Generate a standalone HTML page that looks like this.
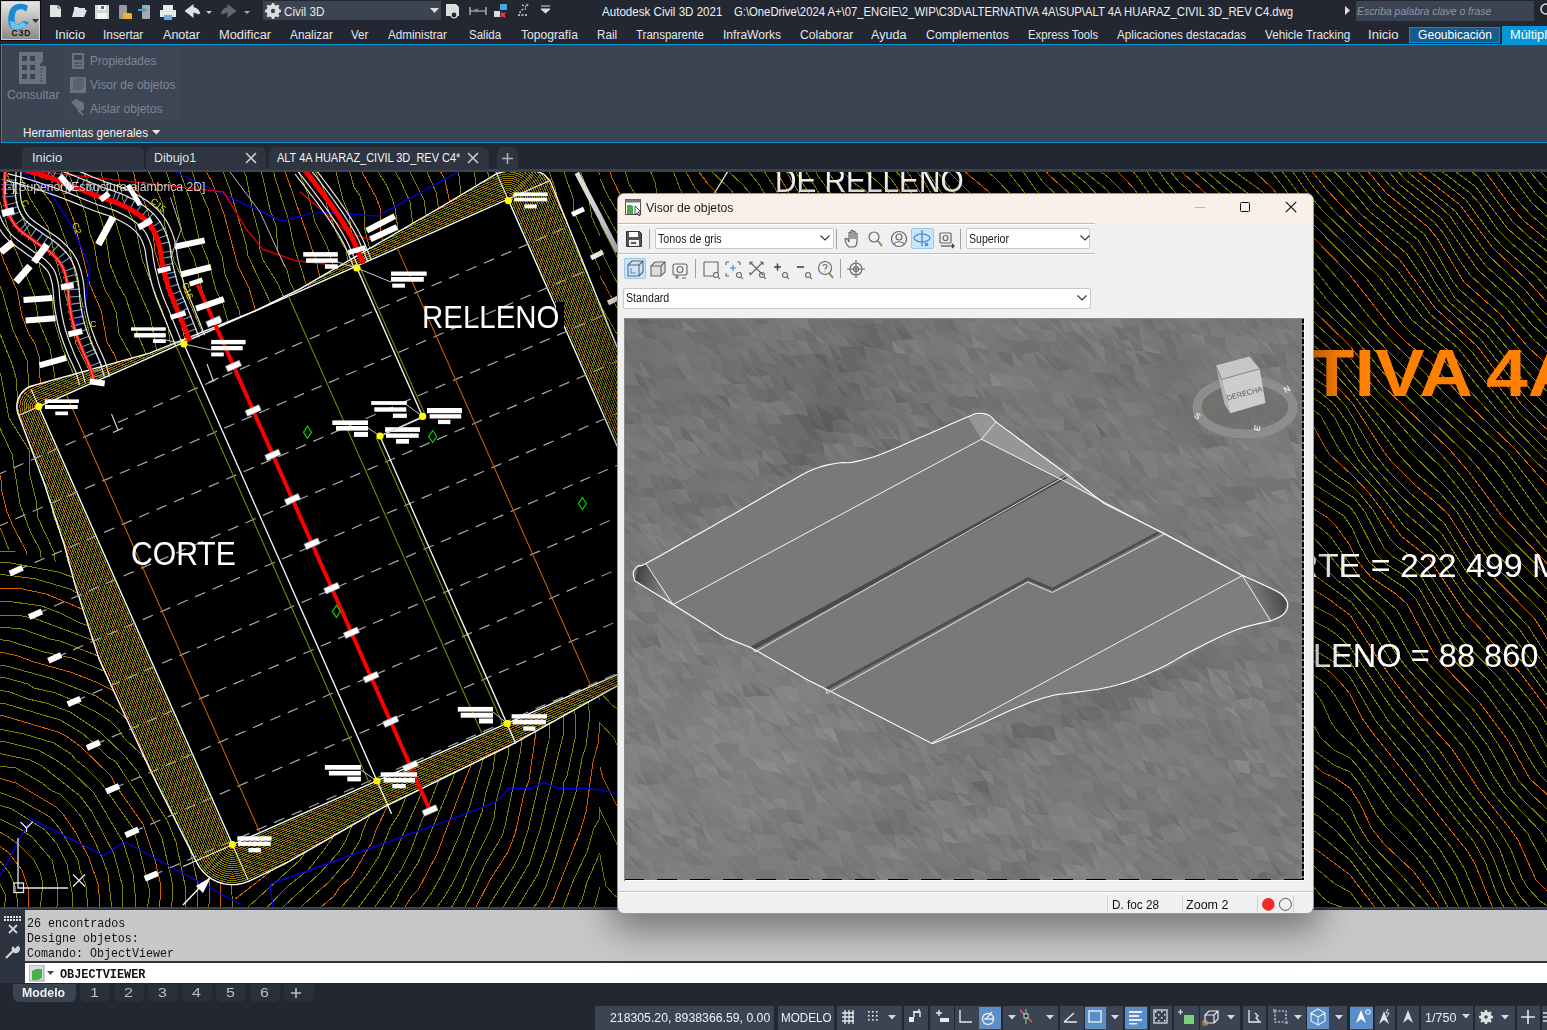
<!DOCTYPE html>
<html><head><meta charset='utf-8'><style>
*{margin:0;padding:0;box-sizing:border-box}
html,body{width:1547px;height:1030px;overflow:hidden;background:#222732;font-family:"Liberation Sans",sans-serif}
.a{position:absolute}
.t{position:absolute;white-space:pre;transform-origin:0 0}
svg{position:absolute;overflow:hidden}

</style></head><body>
<div class='a' style='left:0;top:0;width:1547px;height:44px;background:#222732'></div>
<div class='a' style='left:0;top:0;width:41px;height:41px;background:#0c0c0c'></div>
<div class='a' style='left:1px;top:1px;width:39px;height:39px;background:linear-gradient(#e6e6e6,#8a8a8a);border:1px solid #cfcfcf'></div>
<svg style='left:1px;top:1px' width='39' height='39' viewBox='0 0 39 39'>
<path d='M27 5 C22 1 12 2 9 9 C6 16 7 26 11 28 C15 31 23 29 28 21 L22 20 C19 24 15 25 14 21 C13 16 14 10 17 9 C20 7 24 9 25 11 Z' fill='#1a8ad4'/>
<path d='M9 20 C9 26 11 28 14 28.5 C18 29 23 27 26 24 L22 21 C19 24 15 25 14 21 Z' fill='#6fc3ea'/>
<path d='M31 18 l7 0 l-3.5 4z' fill='#2f3440'/>
</svg>
<div class='t' style='left:11.5px;top:29.4px;font-family:"Liberation Sans";font-size:8.5px;line-height:8.5px;color:#111;font-weight:bold;font-style:normal;transform:scaleX(1.000);letter-spacing:1px'>C3D</div>

<svg style='left:46px;top:2px' width='220' height='20' viewBox='0 0 220 20'>
 <path d='M4 3h8l3 3v9H4z' fill='#e3e3e3'/><path d='M12 3v3h3' fill='#fff' stroke='#222732' stroke-width='.8'/>
 <path d='M28 5h4l1 1h6v2h-9l-2 7h-0z' fill='#e3e3e3'/><path d='M28 8h13l-3 7H26z' fill='#e3e3e3'/>
 <rect x='49' y='3' width='14' height='14' fill='#d5d5d5'/><rect x='52' y='3' width='8' height='5' fill='#f5f5f5'/><rect x='51' y='11' width='10' height='6' fill='#f5f5f5'/><rect x='55' y='4' width='3' height='3' fill='#666'/>
 <rect x='73' y='3' width='8' height='14' rx='1' fill='#999'/><path d='M77 11h8l1 1v5h-9z' fill='#f0b030'/>
 <rect x='96' y='3' width='8' height='14' rx='1' fill='#aaa'/><path d='M92 8h7l-2-2M99 8l-2 2' stroke='#3aa0e0' stroke-width='2' fill='none'/>
 <rect x='114' y='8' width='16' height='7' fill='#e8e8e8'/><rect x='117' y='3' width='10' height='5' fill='#e8e8e8'/><rect x='118' y='13' width='8' height='5' fill='#6ab0e0'/>
 <path d='M141 9c4-4 10-3 12 3M141 9l5-4v8z' stroke='#e0e0e0' stroke-width='3' fill='#e0e0e0'/>
 <path d='M160 9l3 3l3-3z' fill='#ccc'/>
 <path d='M188 9c-4-4-10-3-12 3M188 9l-5-4v8z' stroke='#666' stroke-width='3' fill='#666'/>
 <path d='M198 9l3 3l3-3z' fill='#aaa'/>
</svg>
<div class='a' style='left:263px;top:1px;width:178px;height:19px;background:#3b4453'></div>
<svg style='left:265px;top:3px' width='16' height='16' viewBox='0 0 16 16'><circle cx='8' cy='8' r='5' fill='none' stroke='#e0e0e0' stroke-width='3'/><g stroke='#e0e0e0' stroke-width='2.5'><path d='M8 0v16M0 8h16M2.3 2.3l11.4 11.4M13.7 2.3L2.3 13.7'/></g><circle cx='8' cy='8' r='2.2' fill='#3b4453'/></svg>
<div class='t' style='left:284.3px;top:5.5px;font-family:"Liberation Sans";font-size:12.5px;line-height:12.5px;color:#e8e8e8;font-weight:normal;font-style:normal;transform:scaleX(0.938);'>Civil 3D</div>
<svg style='left:430px;top:8px' width='10' height='6'><path d='M0 0h9l-4.5 5z' fill='#ddd'/></svg>
<svg style='left:444px;top:1px' width='110' height='20' viewBox='0 0 110 20'>
<path d='M2 3h10l3 3v9H2z' fill='#ddd'/><circle cx='10' cy='14' r='3' fill='#222732' stroke='#ddd' stroke-width='1.2'/>
<path d='M26 10h16M26 6v8M42 6v8' stroke='#ccc' stroke-width='1.2'/><path d='M31 8l3 3M34 8l-3 3' stroke='#4aa3df' stroke-width='1.2'/>
<rect x='50' y='10' width='6' height='6' fill='#ddd'/><rect x='56' y='3' width='7' height='6' fill='#4aa3df'/><path d='M57 12l4 4M61 12l-4 4' stroke='#e84040' stroke-width='1.8'/>
<path d='M78 4l4 2M76 12c0-3 3-4 6-4M74 14h10' stroke='#ddd' stroke-width='1.3' stroke-dasharray='2 1.5' fill='none'/><circle cx='83' cy='4' r='1.5' fill='#4aa3df'/>
<path d='M97 5h9M97 8l4.5 4l4.5-4z' fill='#ddd' stroke='#ddd'/>
</svg>
<div class='t' style='left:602.3px;top:5.5px;font-family:"Liberation Sans";font-size:12.5px;line-height:12.5px;color:#eef0f2;font-weight:normal;font-style:normal;transform:scaleX(0.927);'>Autodesk Civil 3D 2021</div>
<div class='t' style='left:734.3px;top:5.5px;font-family:"Liberation Sans";font-size:12.5px;line-height:12.5px;color:#eef0f2;font-weight:normal;font-style:normal;transform:scaleX(0.903);'>G:\OneDrive\2024 A+\07_ENGIE\2_WIP\C3D\ALTERNATIVA 4A\SUP\ALT 4A HUARAZ_CIVIL 3D_REV C4.dwg</div>
<svg style='left:1345px;top:6px' width='6' height='10'><path d='M0 0l5 4.5l-5 4.5z' fill='#ddd'/></svg>
<div class='a' style='left:1356px;top:1px;width:178px;height:20px;background:#3b4453'></div>
<div class='t' style='left:1357.4px;top:5.8px;font-family:"Liberation Sans";font-size:11.5px;line-height:11.5px;color:#8d96a3;font-weight:normal;font-style:italic;transform:scaleX(0.905);'>Escriba palabra clave o frase</div>
<svg style='left:1538px;top:3px' width='10' height='14'><circle cx='8' cy='6' r='5' fill='none' stroke='#ddd' stroke-width='1.5'/></svg>
<div class='a' style='left:1409px;top:27px;width:91px;height:16px;background:#175a8c;border:1px solid #0a8ad0'></div>
<div class='a' style='left:1502px;top:26px;width:45px;height:18px;background:#0696d7'></div>
<div class='t' style='left:54.7px;top:28.7px;font-family:"Liberation Sans";font-size:12px;line-height:12px;color:#e3e6ea;font-weight:normal;font-style:normal;transform:scaleX(1.072);'>Inicio</div>
<div class='t' style='left:103.3px;top:28.7px;font-family:"Liberation Sans";font-size:12px;line-height:12px;color:#e3e6ea;font-weight:normal;font-style:normal;transform:scaleX(0.989);'>Insertar</div>
<div class='t' style='left:162.7px;top:28.7px;font-family:"Liberation Sans";font-size:12px;line-height:12px;color:#e3e6ea;font-weight:normal;font-style:normal;transform:scaleX(1.047);'>Anotar</div>
<div class='t' style='left:218.6px;top:28.7px;font-family:"Liberation Sans";font-size:12px;line-height:12px;color:#e3e6ea;font-weight:normal;font-style:normal;transform:scaleX(1.071);'>Modificar</div>
<div class='t' style='left:289.8px;top:28.7px;font-family:"Liberation Sans";font-size:12px;line-height:12px;color:#e3e6ea;font-weight:normal;font-style:normal;transform:scaleX(0.988);'>Analizar</div>
<div class='t' style='left:351.3px;top:28.7px;font-family:"Liberation Sans";font-size:12px;line-height:12px;color:#e3e6ea;font-weight:normal;font-style:normal;transform:scaleX(0.965);'>Ver</div>
<div class='t' style='left:387.7px;top:28.7px;font-family:"Liberation Sans";font-size:12px;line-height:12px;color:#e3e6ea;font-weight:normal;font-style:normal;transform:scaleX(0.972);'>Administrar</div>
<div class='t' style='left:469.2px;top:28.7px;font-family:"Liberation Sans";font-size:12px;line-height:12px;color:#e3e6ea;font-weight:normal;font-style:normal;transform:scaleX(0.962);'>Salida</div>
<div class='t' style='left:520.6px;top:28.7px;font-family:"Liberation Sans";font-size:12px;line-height:12px;color:#e3e6ea;font-weight:normal;font-style:normal;transform:scaleX(1.006);'>Topografía</div>
<div class='t' style='left:596.6px;top:28.7px;font-family:"Liberation Sans";font-size:12px;line-height:12px;color:#e3e6ea;font-weight:normal;font-style:normal;transform:scaleX(0.972);'>Rail</div>
<div class='t' style='left:636.0px;top:28.7px;font-family:"Liberation Sans";font-size:12px;line-height:12px;color:#e3e6ea;font-weight:normal;font-style:normal;transform:scaleX(0.958);'>Transparente</div>
<div class='t' style='left:722.6px;top:28.7px;font-family:"Liberation Sans";font-size:12px;line-height:12px;color:#e3e6ea;font-weight:normal;font-style:normal;transform:scaleX(1.004);'>InfraWorks</div>
<div class='t' style='left:799.5px;top:28.7px;font-family:"Liberation Sans";font-size:12px;line-height:12px;color:#e3e6ea;font-weight:normal;font-style:normal;transform:scaleX(1.010);'>Colaborar</div>
<div class='t' style='left:871.2px;top:28.7px;font-family:"Liberation Sans";font-size:12px;line-height:12px;color:#e3e6ea;font-weight:normal;font-style:normal;transform:scaleX(1.047);'>Ayuda</div>
<div class='t' style='left:925.6px;top:28.7px;font-family:"Liberation Sans";font-size:12px;line-height:12px;color:#e3e6ea;font-weight:normal;font-style:normal;transform:scaleX(1.027);'>Complementos</div>
<div class='t' style='left:1027.6px;top:28.7px;font-family:"Liberation Sans";font-size:12px;line-height:12px;color:#e3e6ea;font-weight:normal;font-style:normal;transform:scaleX(0.943);'>Express Tools</div>
<div class='t' style='left:1116.7px;top:28.7px;font-family:"Liberation Sans";font-size:12px;line-height:12px;color:#e3e6ea;font-weight:normal;font-style:normal;transform:scaleX(0.977);'>Aplicaciones destacadas</div>
<div class='t' style='left:1264.5px;top:28.7px;font-family:"Liberation Sans";font-size:12px;line-height:12px;color:#e3e6ea;font-weight:normal;font-style:normal;transform:scaleX(0.975);'>Vehicle Tracking</div>
<div class='t' style='left:1368.0px;top:28.7px;font-family:"Liberation Sans";font-size:12px;line-height:12px;color:#e3e6ea;font-weight:normal;font-style:normal;transform:scaleX(1.091);'>Inicio</div>
<div class='t' style='left:1417.6px;top:28.7px;font-family:"Liberation Sans";font-size:12px;line-height:12px;color:#ffffff;font-weight:normal;font-style:normal;transform:scaleX(1.008);'>Geoubicación</div>
<div class='t' style='left:1510.2px;top:28.7px;font-family:"Liberation Sans";font-size:12px;line-height:12px;color:#ffffff;font-weight:normal;font-style:normal;transform:scaleX(1.067);'>Múltiples</div>
<div class='a' style='left:1px;top:44px;width:1546px;height:99px;background:#3b4453;border-top:1px solid #0696d7;border-bottom:1px solid #0696d7;border-left:1px solid #0696d7'></div>
<div class='a' style='left:63px;top:48px;width:118px;height:72px;background:#3d4655'></div>
<svg style='left:18px;top:51px' width='30' height='34' viewBox='0 0 30 34'>
<path d='M1 1h24v9l-3 3v20H1z' fill='#6a7380'/>
<g fill='#3b4453'><rect x='4' y='5' width='5' height='5'/><rect x='12' y='5' width='5' height='5'/><rect x='4' y='14' width='5' height='5'/><rect x='12' y='14' width='5' height='5'/><rect x='4' y='23' width='5' height='5'/><rect x='12' y='23' width='5' height='5'/></g>
<rect x='22' y='15' width='6' height='18' fill='#6a7380'/><path d='M22 18h3M22 21h2M22 24h3M22 27h2M22 30h3' stroke='#3b4453' stroke-width='0.8'/>
</svg>
<div class='t' style='left:6.5px;top:88.9px;font-family:"Liberation Sans";font-size:12px;line-height:12px;color:#7d8694;font-weight:normal;font-style:normal;transform:scaleX(1.022);'>Consultar</div>
<svg style='left:70px;top:52px' width='18' height='66' viewBox='0 0 18 66'>
<rect x='2' y='1' width='12' height='16' fill='#6a7380'/><rect x='4' y='3' width='8' height='5' fill='#3b4453'/><path d='M4 11h8M4 14h8' stroke='#3b4453'/>
<rect x='0' y='25' width='16' height='16' fill='#6a7380'/><path d='M3 29l4-3h7v9l-4 3H3z' fill='#58616e'/>
<path d='M1 50l5-3l8 4v6l-4 3' fill='#6a7380'/><path d='M8 58l5 5' stroke='#6a7380' stroke-width='2'/>
</svg>
<div class='t' style='left:90.3px;top:55.2px;font-family:"Liberation Sans";font-size:12px;line-height:12px;color:#7d8694;font-weight:normal;font-style:normal;transform:scaleX(0.984);'>Propiedades</div>
<div class='t' style='left:90.3px;top:78.9px;font-family:"Liberation Sans";font-size:12px;line-height:12px;color:#7d8694;font-weight:normal;font-style:normal;transform:scaleX(0.995);'>Visor de objetos</div>
<div class='t' style='left:90.3px;top:102.9px;font-family:"Liberation Sans";font-size:12px;line-height:12px;color:#7d8694;font-weight:normal;font-style:normal;transform:scaleX(1.006);'>Aislar objetos</div>
<div class='t' style='left:22.6px;top:126.9px;font-family:"Liberation Sans";font-size:12px;line-height:12px;color:#f0f2f4;font-weight:normal;font-style:normal;transform:scaleX(0.976);'>Herramientas generales</div>
<svg style='left:152px;top:130px' width='10' height='6'><path d='M0 0h8.5l-4.25 4.5z' fill='#e8e8e8'/></svg>
<div class='a' style='left:0;top:143px;width:1547px;height:26px;background:#222732'></div>
<div class='a' style='left:0;top:169px;width:1547px;height:3px;background:#3b4453'></div>
<div class='a' style='left:22px;top:147px;width:121.5px;height:23px;background:#2e3440;border-radius:6px 6px 0 0'></div>
<div class='a' style='left:146px;top:147px;width:120px;height:23px;background:#2e3440;border-radius:6px 6px 0 0'></div>
<div class='a' style='left:269px;top:147px;width:220px;height:23px;background:#2e3440;border-radius:6px 6px 0 0'></div>
<div class='a' style='left:497px;top:147px;width:21px;height:23px;background:#2e3440;border-radius:6px 6px 0 0'></div>
<div class='t' style='left:31.5px;top:152.4px;font-family:"Liberation Sans";font-size:12px;line-height:12px;color:#dfe2e6;font-weight:normal;font-style:normal;transform:scaleX(1.072);'>Inicio</div>
<div class='t' style='left:154.3px;top:152.4px;font-family:"Liberation Sans";font-size:12px;line-height:12px;color:#dfe2e6;font-weight:normal;font-style:normal;transform:scaleX(1.037);'>Dibujo1</div>
<div class='t' style='left:277.3px;top:152.4px;font-family:"Liberation Sans";font-size:12px;line-height:12px;color:#f2f4f6;font-weight:normal;font-style:normal;transform:scaleX(0.914);'>ALT 4A HUARAZ_CIVIL 3D_REV C4*</div>
<svg style='left:245px;top:152px' width='12' height='12'><path d='M1 1l10 10M11 1L1 11' stroke='#c8ccd2' stroke-width='1.6'/></svg>
<svg style='left:467px;top:152px' width='12' height='12'><path d='M1 1l10 10M11 1L1 11' stroke='#c8ccd2' stroke-width='1.6'/></svg>
<svg style='left:502px;top:153px' width='11' height='11'><path d='M5.5 0v11M0 5.5h11' stroke='#aab0b8' stroke-width='1.6'/></svg>
<svg style='left:0;top:172px' width='1547' height='736' viewBox='0 0 1547 736'>
<defs>
<clipPath id='band'><path clip-rule='evenodd' d='M0.0 -22.0 L123.0 -4.0 L236.0 0.0 L286.0 -2.0 L449.0 -20.0 L513.0 -28.0 L534.0 -25.0 L548.0 -17.0 L556.0 -8.0 L559.0 0.0 L553.0 177.0 L553.0 479.0 L513.0 487.0 L415.0 489.5 L299.0 500.2 L153.0 505.9 L40.0 517.7 L0.0 519.0 L-6.3 518.5 L-12.4 517.0 L-18.2 514.6 L-23.5 511.4 L-28.3 507.3 L-32.4 502.5 L-35.6 497.2 L-38.0 491.4 L-39.5 485.3 L-40.0 479.0 L-45.0 380.0 L-47.0 256.0 L-39.0 178.0 L-33.0 140.0 L-26.0 72.0 L-22.0 0.0 L-22.0 0.0 L-21.7 -3.4 L-20.9 -6.8 L-19.6 -10.0 L-17.8 -12.9 L-15.6 -15.6 L-12.9 -17.8 L-10.0 -19.6 L-6.8 -20.9 L-3.4 -21.7 L-0.0 -22.0Z M0 0 L513 0 L513 479 L0 479Z'/></clipPath>
<clipPath id='cr1'><rect x='600' y='-10' width='960' height='760'/></clipPath>
<clipPath id='cr2'><path d='M-10 373 L235 435 L235 750 L-10 750z'/></clipPath><clipPath id='cr2b'><path d='M235 435 L600 528 L600 750 L235 750z'/></clipPath>
<clipPath id='cr3'><path d='M-10 -10 L600 -10 L600 528 L-10 373z'/></clipPath>
<mask id='nocont'><rect x='0' y='0' width='1547' height='736' fill='#fff'/><path transform='translate(38.8 234.60000000000002) rotate(-23.85)' d='M0.0 -22.0 L123.0 -4.0 L236.0 0.0 L286.0 -2.0 L449.0 -20.0 L513.0 -28.0 L534.0 -25.0 L548.0 -17.0 L556.0 -8.0 L559.0 0.0 L553.0 177.0 L553.0 479.0 L513.0 487.0 L415.0 489.5 L299.0 500.2 L153.0 505.9 L40.0 517.7 L0.0 519.0 L-6.3 518.5 L-12.4 517.0 L-18.2 514.6 L-23.5 511.4 L-28.3 507.3 L-32.4 502.5 L-35.6 497.2 L-38.0 491.4 L-39.5 485.3 L-40.0 479.0 L-45.0 380.0 L-47.0 256.0 L-39.0 178.0 L-33.0 140.0 L-26.0 72.0 L-22.0 0.0 L-22.0 0.0 L-21.7 -3.4 L-20.9 -6.8 L-19.6 -10.0 L-17.8 -12.9 L-15.6 -15.6 L-12.9 -17.8 L-10.0 -19.6 L-6.8 -20.9 L-3.4 -21.7 L-0.0 -22.0Z' fill='#000'/></mask>
</defs>
<rect width='1547' height='736' fill='#000'/>
<g mask='url(#nocont)' fill='none' stroke-width='1' shape-rendering='crispEdges'>
<g clip-path='url(#cr1)'><path d='M556 764 542 734 M571 764 562 740 542 708 M605 764 600 763 585 732 572 700 570 692 559 668 542 617 M639 764 634 755 628 750 604 740 600 737 591 716 586 680 580 662 575 654 556 618 542 577 M654 764 649 752 641 742 630 733 614 723 606 714 603 700 598 672 592 652 579 624 566 602 558 582 551 550 547 540 542 532 M674 764 652 730 629 704 616 670 599 636 593 618 574 573 562 537 542 510 M753 764 698 724 691 708 690 700 683 684 668 666 656 654 638 631 624 604 620 580 614 566 600 551 581 516 568 499 562 488 551 448 542 426 M791 764 778 750 766 743 752 738 734 727 726 721 717 710 706 674 696 663 683 652 668 636 656 607 651 600 648 584 635 554 620 539 612 533 600 520 580 488 561 438 542 403 M823 764 818 760 808 748 799 732 794 726 784 720 756 714 742 704 731 680 728 666 718 644 714 638 706 632 685 610 668 582 666 572 658 556 649 542 624 512 618 502 600 487 586 460 581 448 558 408 542 376 M862 764 838 748 827 738 809 710 796 694 780 686 762 682 751 670 734 636 724 619 692 584 668 538 646 506 639 490 628 478 612 466 600 454 588 428 566 395 555 372 546 344 542 320 M924 764 886 736 856 721 842 710 827 690 817 668 807 654 795 646 775 638 764 628 748 598 720 558 710 536 698 518 688 506 661 456 639 422 622 401 598 386 580 358 575 342 570 304 563 288 549 264 542 245 M951 764 943 754 934 747 896 724 880 717 854 701 847 694 839 684 827 656 816 639 802 629 781 620 772 608 741 556 730 524 694 486 654 421 645 404 631 386 600 365 595 356 590 344 585 306 582 294 574 280 560 260 542 215 M969 764 965 756 944 736 920 720 888 702 870 690 860 681 852 670 836 636 826 621 810 605 800 602 784 589 773 576 762 558 758 538 750 515 738 500 719 486 706 474 684 446 672 428 664 414 657 394 646 377 606 346 601 334 598 317 597 302 593 286 584 272 571 254 542 196 M1004 764 996 760 978 747 952 725 920 704 870 660 856 638 838 603 830 592 816 579 798 570 788 561 782 548 778 530 767 506 745 484 719 464 698 442 687 428 680 416 671 386 662 369 650 357 630 342 618 330 614 320 608 291 604 282 597 270 576 242 542 180 M1042 764 1033 750 1020 734 994 713 963 694 948 682 939 670 928 643 920 635 886 613 874 602 866 592 842 550 815 518 796 490 774 466 757 454 730 426 715 398 709 370 703 358 691 342 654 317 644 306 637 294 624 260 618 252 600 234 579 204 558 162 551 138 548 119 542 102 M1058 764 1042 740 1028 722 988 687 979 674 967 650 956 636 942 624 900 603 881 588 844 525 820 500 796 467 773 444 754 420 740 398 721 356 712 342 700 330 658 300 646 280 639 258 633 246 620 229 595 206 585 188 581 174 573 158 561 114 555 96 542 74 M1089 764 1078 759 1070 753 1062 744 1034 708 1016 692 1005 680 997 668 979 634 968 620 954 610 921 596 898 580 884 562 862 522 832 494 778 424 765 406 740 359 728 340 714 324 677 298 662 282 659 276 651 240 646 230 638 218 622 204 607 186 600 173 595 156 579 120 572 100 558 74 542 57 M1132 764 1127 758 1112 746 1088 740 1071 730 1052 706 1027 680 1016 666 1011 656 982 611 971 600 920 566 904 552 900 543 882 516 867 502 854 494 829 472 785 410 754 352 742 336 730 322 686 288 680 280 674 268 668 230 662 218 654 206 634 186 622 171 602 136 573 72 562 56 542 38 M1161 764 1141 732 1134 717 1122 701 1110 691 1076 675 1065 664 1046 639 1032 626 987 576 976 561 960 535 948 523 932 514 920 504 892 477 883 470 852 458 844 453 838 446 831 436 824 420 803 386 793 366 787 350 778 332 767 318 754 305 728 284 714 268 708 258 700 230 692 217 668 182 644 158 634 144 600 77 590 52 550 -16 544 -30 M1186 764 1168 750 1160 738 1150 714 1144 694 1134 679 1112 664 1093 654 1068 634 1050 622 1035 608 1018 589 996 568 973 532 960 517 930 495 892 460 878 451 865 446 850 436 844 426 833 404 817 382 810 369 802 342 791 318 768 295 739 272 730 260 716 230 708 218 674 172 652 150 642 135 560 -30 M1258 764 1252 760 1228 750 1204 745 1194 745 1180 741 1173 732 1166 716 1166 706 1160 682 1150 670 1142 663 1118 647 1096 629 1074 616 1060 611 1044 600 1001 554 983 528 965 508 928 479 900 450 872 428 865 420 853 396 826 364 820 352 808 320 802 310 782 287 746 254 722 217 698 188 679 158 654 129 599 28 574 -30 M1282 764 1275 754 1262 745 1234 735 1204 729 1190 722 1187 718 1183 710 1177 682 1166 666 1152 654 1129 638 1100 613 1064 596 1043 580 978 506 934 468 895 426 882 409 866 381 838 351 829 338 822 321 816 310 781 268 750 236 740 220 709 182 696 158 680 134 660 111 608 24 600 7 592 -18 586 -30 M1313 764 1301 748 1292 732 1282 720 1276 715 1264 710 1246 707 1230 701 1215 690 1190 654 1183 646 1151 622 1130 603 1081 550 1044 524 1024 514 1008 504 994 490 982 470 974 461 946 444 937 436 918 409 908 390 894 371 857 332 840 303 826 284 800 254 776 230 768 220 752 193 727 160 706 116 695 102 676 84 664 68 629 12 622 -12 615 -30 M1356 764 1350 757 1334 754 1320 747 1310 736 1298 718 1288 707 1274 698 1240 688 1227 680 1214 666 1190 632 1156 606 1136 588 1091 540 1053 510 1024 496 1010 486 1001 468 997 456 994 451 980 442 954 433 943 424 935 412 916 375 902 358 872 330 842 282 813 250 781 218 766 190 739 156 730 139 722 119 708 92 672 50 663 30 657 22 655 10 645 -14 640 -24 635 -30 M1369 764 1350 738 1330 731 1322 725 1302 701 1290 692 1252 677 1242 672 1232 665 1220 651 1209 632 1191 612 1165 594 1137 570 1106 538 1052 489 1028 474 1013 448 1004 436 990 428 962 420 949 410 942 396 936 372 924 352 905 338 896 333 882 319 858 282 842 260 793 214 774 180 746 144 738 129 714 68 702 52 696 47 686 32 670 -9 658 -30 M1381 764 1373 750 1350 720 1335 712 1300 683 1254 662 1241 652 1210 609 1194 595 1170 580 1126 544 1088 507 1064 478 1032 449 1024 436 1013 424 998 415 972 408 962 399 956 384 950 359 937 334 928 327 898 311 886 298 850 248 832 230 809 212 802 202 788 176 760 140 748 122 740 104 730 70 724 54 716 40 695 16 686 -0 673 -30 M1410 764 1395 748 1350 688 1316 660 1284 643 1262 626 1246 606 1214 572 1197 562 1178 554 1143 530 1121 506 1099 472 1089 462 1057 436 1028 402 994 382 986 375 978 358 966 324 954 304 942 292 910 277 899 268 880 239 837 190 816 158 799 140 766 100 758 82 751 52 746 39 731 18 708 -4 700 -16 694 -30 M1427 764 1400 736 1350 674 1334 657 1318 644 1290 628 1247 586 1212 556 1178 540 1162 530 1148 518 1140 508 1128 490 1122 477 1107 458 1070 430 1042 396 1028 385 1006 372 1000 366 992 354 978 320 967 302 960 293 948 284 924 270 912 260 890 228 858 194 825 148 779 90 774 80 772 68 768 54 750 21 742 12 716 -12 709 -20 704 -30 M1437 764 1430 751 1372 688 1356 668 1350 657 1340 644 1320 628 1296 613 1271 588 1250 574 1224 551 1212 543 1184 529 1162 513 1149 498 1127 460 1113 444 1080 420 1069 406 1062 394 1046 377 1014 354 993 318 983 304 960 281 929 258 921 248 906 224 892 212 868 187 799 90 780 46 758 11 749 0 722 -21 716 -30 M1447 764 1439 748 1430 736 1402 704 1369 670 1359 654 1350 635 1346 631 1331 618 1308 605 1288 586 1260 566 1222 535 1185 516 1172 505 1128 442 1116 430 1090 409 1063 372 1045 354 1034 346 1021 332 1012 318 1003 308 974 280 944 255 936 247 918 217 907 206 890 192 868 166 830 112 794 46 764 -1 756 -11 734 -30 M1464 764 1432 706 1415 684 1386 655 1376 642 1361 614 1350 600 1334 593 1316 580 1288 548 1273 526 1264 518 1252 513 1226 506 1206 495 1190 482 1141 422 1102 385 1082 357 1042 310 1016 286 978 259 962 244 952 230 937 200 926 187 892 152 810 38 791 8 771 -30 M1476 764 1462 742 1446 710 1433 688 1408 658 1392 642 1359 596 1350 586 1334 578 1320 565 1310 546 1301 526 1292 515 1272 500 1256 494 1226 487 1212 480 1205 474 1194 464 1171 434 1138 401 1112 380 1078 334 1044 296 1018 272 986 250 970 236 964 227 948 194 933 172 896 134 840 61 813 28 797 2 782 -30 M1488 764 1471 740 1456 704 1440 678 1418 650 1399 630 1374 597 1356 576 1338 560 1331 550 1322 530 1312 516 1292 498 1275 488 1258 481 1234 473 1218 464 1187 428 1156 402 1148 393 1117 368 1084 322 1032 268 1014 252 987 234 971 214 955 178 946 164 934 150 901 120 852 58 822 26 806 0 791 -30 M1499 764 1482 738 1465 698 1452 676 1365 570 1334 522 1326 512 1290 485 1269 474 1244 463 1226 452 1204 426 1178 406 1156 384 1125 358 1118 348 1110 334 1100 322 1066 290 1032 251 990 214 981 202 965 170 954 154 946 144 900 100 864 55 831 22 818 4 800 -30 M1529 764 1518 754 1502 732 1496 720 1486 692 1474 670 1375 548 1350 505 1338 493 1326 485 1254 443 1238 431 1227 418 1192 388 1141 328 1126 312 1093 288 1078 274 1068 261 1046 228 1022 205 1006 187 951 112 942 102 924 90 906 74 894 58 882 36 870 22 854 11 842 -1 830 -16 821 -30 M1553 764 1526 746 1513 730 1506 719 1494 688 1484 668 1453 630 1418 582 1389 550 1350 490 1326 471 1276 444 1253 428 1230 405 1208 388 1198 378 1168 336 1143 310 1134 302 1104 283 1088 268 1058 224 1009 172 972 120 968 111 958 97 946 88 922 74 914 68 907 58 888 20 878 10 852 -12 836 -30 M1571 764 1560 754 1530 735 1520 724 1511 708 1500 678 1488 658 1458 622 1427 578 1390 534 1350 475 1336 462 1327 456 1288 437 1264 421 1242 397 1218 380 1210 373 1183 334 1162 308 1142 293 1112 274 1098 262 1069 220 1056 204 1018 166 995 132 974 96 956 80 936 71 923 62 914 50 902 23 892 8 853 -30 M1576 755 1568 748 1540 729 1528 716 1522 706 1511 678 1499 658 1464 614 1440 579 1396 526 1347 456 1333 444 1294 424 1278 413 1254 386 1228 369 1214 356 1193 326 1169 300 1122 267 1106 253 1066 198 1036 168 1018 147 986 93 967 76 936 59 926 50 920 40 912 22 902 6 870 -30 M1576 731 1549 702 1528 662 1490 618 1464 576 1394 494 1368 452 1351 430 1305 396 1280 375 1252 354 1241 344 1229 328 1214 314 1126 240 1113 226 1082 183 1042 142 1034 131 1018 102 1007 88 986 69 974 60 950 46 941 38 922 6 895 -30 M1576 715 1541 660 1505 622 1493 604 1478 577 1464 559 1407 496 1395 480 1376 447 1365 434 1350 418 1337 408 1307 378 1264 348 1245 326 1232 314 1180 273 1132 230 1121 218 1102 190 1089 174 1048 130 1034 104 1022 89 990 61 951 34 906 -30 M1576 690 1570 679 1552 656 1523 628 1511 614 1488 574 1466 545 1414 490 1390 448 1382 438 1344 401 1326 379 1312 364 1283 346 1247 308 1200 278 1138 220 1108 180 1057 120 1036 88 1010 64 960 28 929 -10 915 -30 M1576 670 1560 649 1530 621 1518 608 1503 580 1488 557 1472 536 1434 498 1424 486 1397 438 1360 406 1330 364 1318 354 1288 333 1262 305 1250 296 1210 273 1190 255 1142 206 1105 160 1088 136 1048 84 1033 70 983 32 968 19 938 -11 925 -30 M1576 638 1540 603 1531 590 1514 560 1484 519 1444 478 1416 427 1405 416 1378 398 1369 390 1360 374 1352 356 1344 344 1304 318 1272 286 1240 266 1218 249 1180 210 1134 158 1098 108 1074 82 1041 50 1022 34 994 5 978 -8 958 -20 948 -30 M1576 626 1546 594 1519 548 1488 508 1462 484 1450 469 1419 416 1408 406 1386 392 1376 382 1356 343 1350 335 1308 308 1284 282 1250 259 1228 240 1173 186 1153 164 1092 88 1028 25 1002 -8 967 -30 M1576 614 1555 590 1537 556 1518 530 1498 505 1464 470 1454 458 1422 406 1414 398 1392 384 1384 376 1365 340 1354 326 1312 297 1288 271 1258 251 1230 221 1167 166 1096 79 1036 18 1012 -16 996 -30 M1576 602 1563 582 1542 544 1528 526 1506 499 1465 456 1427 398 1417 388 1399 376 1390 367 1373 338 1360 322 1350 312 1338 304 1318 288 1296 260 1272 245 1255 230 1242 214 1231 204 1181 168 1068 34 1042 9 1015 -30 M1576 562 1524 492 1466 426 1436 382 1404 354 1383 326 1341 280 1336 272 1321 244 1310 235 1283 222 1244 186 1208 165 1194 154 1163 118 1138 93 1113 58 1088 27 1076 14 1052 -7 1037 -30 M1576 546 1551 516 1516 468 1466 413 1440 373 1432 364 1404 340 1360 290 1348 271 1335 246 1326 235 1308 222 1285 210 1248 177 1212 156 1204 149 1194 139 1177 118 1145 88 1115 44 1100 26 1087 12 1062 -8 1046 -30 M1576 533 1563 520 1520 458 1468 402 1442 362 1401 324 1370 290 1358 272 1350 254 1334 232 1316 217 1290 202 1256 172 1224 152 1211 142 1188 113 1150 78 1126 40 1107 18 1068 -14 1055 -30 M1576 523 1560 504 1528 454 1478 402 1468 389 1444 351 1409 320 1390 301 1376 284 1346 234 1330 217 1294 193 1254 159 1235 146 1223 136 1190 99 1161 74 1136 36 1123 20 1108 5 1078 -16 1065 -30 M1576 499 1567 486 1550 452 1542 440 1489 388 1477 372 1457 340 1440 321 1416 301 1398 282 1350 218 1335 202 1290 166 1246 122 1195 74 1152 25 1130 -5 1120 -13 1093 -30 M1576 484 1569 472 1559 448 1548 432 1492 378 1464 337 1448 317 1408 278 1336 193 1296 158 1252 111 1211 74 1157 14 1136 -16 1126 -25 1116 -30 M1576 462 1568 444 1556 426 1496 366 1465 324 1442 296 1418 273 1394 246 1366 218 1340 186 1302 152 1266 110 1230 76 1201 44 1174 19 1165 8 1142 -26 1138 -30 M1576 439 1570 429 1558 415 1498 354 1462 306 1441 282 1378 220 1342 176 1302 139 1282 113 1232 60 1202 30 1179 10 1170 -1 1151 -30 M1576 409 1549 382 1520 349 1482 300 1466 282 1386 204 1356 168 1320 134 1255 52 1193 -2 1184 -12 1171 -30 M1576 399 1528 344 1498 302 1483 284 1389 194 1362 164 1327 128 1282 71 1266 49 1253 36 1230 20 1207 0 1192 -15 1181 -30 M1576 387 1558 366 1506 294 1496 282 1432 224 1358 148 1332 119 1266 35 1218 -1 1196 -22 1190 -30 M1576 375 1567 362 1555 342 1507 280 1450 227 1418 194 1390 168 1370 146 1346 116 1300 64 1275 32 1263 20 1216 -14 1200 -30 M1576 332 1565 316 1536 290 1502 254 1460 208 1442 186 1412 162 1402 152 1366 106 1310 49 1270 -2 1256 -15 1230 -30 M1576 314 1568 305 1542 284 1497 238 1450 180 1412 148 1380 106 1314 42 1270 -17 1261 -26 1254 -30 M1576 301 1546 278 1516 248 1458 176 1423 146 1386 100 1322 38 1307 20 1272 -30 M1576 292 1556 276 1520 242 1472 180 1458 166 1430 142 1398 99 1335 40 1314 16 1282 -30 M1576 274 1526 226 1481 168 1440 130 1406 81 1361 42 1322 -0 1300 -30 M1576 263 1531 218 1486 162 1449 130 1436 112 1420 85 1410 72 1370 40 1350 16 1322 -13 1308 -30 M1576 251 1552 224 1532 205 1490 156 1455 126 1418 68 1374 31 1345 -2 1318 -30 M1576 237 1565 224 1523 182 1494 148 1460 118 1453 110 1437 82 1424 62 1382 28 1354 -5 1328 -30 M1576 209 1562 193 1534 168 1506 136 1470 103 1458 86 1444 62 1434 50 1390 14 1353 -30 M1576 195 1562 180 1532 153 1510 127 1478 98 1441 46 1399 12 1365 -30 M1576 182 1543 152 1515 120 1486 94 1469 72 1450 44 1438 33 1406 8 1393 -6 1374 -30 M1576 170 1540 136 1525 118 1487 82 1456 40 1410 2 1384 -30 M1576 150 1536 104 1504 76 1490 61 1466 28 1422 -7 1402 -30 M1576 137 1549 104 1510 70 1498 58 1480 32 1470 21 1440 -2 1411 -30 M1576 124 1558 100 1508 57 1475 14 1440 -12 1422 -30 M1576 108 1562 91 1528 64 1513 50 1479 6 1468 -4 1442 -22 1433 -30 M1576 81 1532 44 1518 29 1492 -6 1480 -18 1462 -30 M1576 71 1531 30 1506 -4 1494 -18 1479 -30 M1576 59 1536 22 1510 -12 1492 -30 M1576 47 1544 16 1504 -30 M1576 24 1545 -8 1526 -30 M1576 13 1536 -30 M1576 2 1546 -30 M1576 -9 1556 -30' stroke='#828200'/><path d='M584 764 572 730 549 690 542 667 M720 764 708 755 698 751 679 736 672 724 663 700 656 687 624 648 603 606 595 578 583 552 580 542 568 520 549 496 542 477 M890 764 875 748 854 736 837 724 820 702 814 690 802 673 790 664 778 660 766 654 758 646 733 604 709 576 698 560 691 542 665 500 648 466 634 448 628 442 610 418 600 412 578 384 567 362 560 344 557 316 553 300 542 280 M1028 764 1018 752 1008 744 967 716 942 702 929 692 920 682 910 664 903 656 891 642 880 634 865 616 838 574 820 554 814 550 804 535 788 506 778 494 768 482 737 460 708 430 699 418 694 404 690 382 681 360 672 350 637 324 631 316 626 306 623 292 617 276 611 266 600 255 588 239 568 207 550 174 542 152 M1148 764 1130 739 1122 730 1108 720 1086 711 1056 686 1041 668 1004 615 986 594 973 582 948 549 920 530 892 498 880 488 848 473 828 453 790 392 773 356 762 339 744 316 723 298 712 290 697 274 691 262 685 232 674 210 666 198 638 170 629 158 600 104 588 76 574 47 562 30 548 18 542 10 M1298 764 1282 741 1272 732 1262 727 1230 719 1209 710 1202 704 1188 672 1177 658 1165 648 1140 631 1092 588 1066 574 1052 564 1039 546 1018 530 1000 514 960 472 936 453 924 440 903 410 881 376 850 344 823 300 790 260 762 232 747 208 718 171 699 132 693 124 666 95 624 31 612 6 600 -30 M1393 764 1374 734 1350 703 1317 678 1262 648 1252 640 1241 628 1225 604 1210 589 1196 578 1172 565 1152 551 1124 528 1094 494 1073 466 1044 440 1024 416 1012 407 990 398 977 388 969 372 954 330 942 312 932 304 910 296 891 282 881 268 870 250 856 232 818 194 801 166 792 158 765 124 751 100 744 79 740 60 732 40 718 22 708 12 699 0 684 -30 M1456 764 1437 732 1414 700 1384 672 1372 657 1360 632 1350 616 1335 606 1322 600 1282 564 1238 531 1208 513 1184 497 1166 476 1156 460 1130 426 1100 400 1070 361 1027 314 1006 293 964 260 951 248 942 236 928 208 895 178 875 154 840 102 792 26 766 -18 756 -30 M1512 764 1492 734 1475 692 1468 680 1372 560 1362 546 1350 522 1340 510 1330 500 1320 493 1285 472 1238 446 1214 420 1186 397 1160 370 1138 350 1119 324 1107 312 1080 290 1068 278 1037 236 1008 211 958 140 938 119 897 80 878 53 864 36 848 24 836 11 822 -8 810 -30 M1576 743 1546 718 1536 708 1518 668 1511 658 1479 618 1452 577 1416 537 1393 508 1379 488 1350 443 1330 428 1292 404 1262 376 1242 362 1232 353 1207 324 1176 293 1130 258 1111 240 1102 230 1088 208 1074 190 1029 144 1022 134 1006 104 995 90 982 76 972 68 944 53 936 46 909 2 884 -30 M1576 652 1560 634 1530 607 1509 570 1480 531 1442 492 1434 482 1407 432 1396 422 1372 406 1363 396 1357 388 1349 372 1336 354 1328 346 1297 326 1266 294 1230 273 1209 258 1160 206 1118 157 1097 126 1068 90 1042 65 956 -8 934 -30 M1576 584 1554 546 1522 503 1464 439 1430 388 1424 382 1401 364 1370 322 1352 303 1329 282 1312 252 1298 242 1276 232 1243 198 1196 168 1182 156 1164 133 1128 94 1108 67 1074 26 1048 2 1027 -30 M1576 511 1564 497 1542 458 1534 446 1480 391 1448 342 1434 329 1416 314 1392 290 1384 280 1353 232 1342 220 1326 204 1290 178 1258 149 1232 128 1205 98 1170 66 1135 18 1126 8 1116 -2 1086 -21 1076 -30 M1576 422 1502 344 1469 300 1450 278 1381 212 1350 174 1310 135 1284 102 1246 57 1184 2 1174 -11 1162 -30 M1576 358 1570 344 1562 330 1514 276 1468 232 1430 190 1406 170 1390 154 1349 102 1310 62 1272 16 1255 0 1220 -23 1212 -30 M1576 283 1540 251 1522 233 1477 174 1435 136 1400 88 1356 49 1326 17 1302 -13 1291 -30 M1576 223 1556 201 1527 174 1500 142 1464 110 1437 66 1428 55 1386 21 1357 -14 1340 -30 M1576 160 1556 140 1527 108 1493 76 1460 33 1418 -0 1392 -30 M1576 94 1567 84 1524 49 1509 32 1484 -2 1472 -12 1446 -30 M1576 36 1538 -3 1515 -30 M1576 -20 1567 -30' stroke='#d26400'/></g>
<g clip-path='url(#cr2)'><path d='M-30 739 -26 738 -22 736 -20 728 -24 721 -30 720 M-30 751 -22 750 -14 745 -7 736 -6 730 -8 722 -14 714 -24 708 -30 708 M-30 764 -10 758 -2 752 3 742 6 724 -1 710 -8 701 -18 695 -30 694 M1 764 11 752 16 742 18 732 15 714 10 702 2 691 -16 680 -30 679 M29 764 37 750 40 738 43 712 40 700 34 688 18 672 7 664 -8 656 -22 653 -30 653 M44 764 53 746 57 734 58 714 52 688 32 665 20 657 0 647 -22 642 -30 642 M63 764 69 752 72 738 73 726 67 692 57 672 45 658 12 637 -8 631 -30 629 M81 764 88 738 86 714 80 698 78 688 60 657 50 645 20 628 -4 619 -30 617 M107 764 110 756 112 738 108 702 103 688 95 670 82 646 74 636 60 622 52 619 42 611 16 596 -30 591 M120 764 122 738 123 716 114 682 92 640 80 624 42 594 30 588 2 582 -30 580 M130 764 136 730 133 702 123 670 94 621 70 598 56 588 38 578 6 570 -30 567 M143 764 149 726 149 716 139 676 133 656 102 612 86 596 76 588 71 582 54 571 24 562 -6 556 -22 554 -30 555 M170 764 173 714 162 666 155 652 145 634 116 590 108 585 96 573 82 561 60 548 6 532 -30 528 M184 764 185 752 186 718 176 670 167 648 150 622 138 600 125 584 100 560 70 540 46 531 28 527 10 520 -8 517 -30 516 M196 764 198 712 190 678 179 646 169 630 159 608 142 583 124 566 118 557 110 549 96 540 72 528 56 521 34 516 28 512 6 506 -18 502 -30 502 M207 764 210 716 206 690 199 670 194 650 188 634 182 626 166 592 156 578 140 563 128 548 114 536 96 524 50 506 6 494 -12 491 -30 491 M231 764 233 738 230 694 226 674 223 666 210 619 205 608 191 584 163 546 143 528 114 505 104 499 72 486 44 480 10 469 -4 467 -30 467 M245 764 245 754 241 720 241 686 224 618 203 580 172 538 125 498 98 484 60 469 50 467 22 457 -12 454 -30 454 M256 764 256 748 254 738 252 678 246 650 240 628 232 608 213 576 178 527 170 521 130 485 112 476 74 461 36 447 22 444 -30 442 M266 764 267 736 265 686 256 638 247 612 233 586 221 566 211 554 193 526 171 506 148 482 126 469 104 459 80 451 60 441 42 434 6 429 -2 430 -30 430 M290 764 295 732 295 700 279 624 252 568 212 511 180 478 169 470 156 460 120 439 84 425 70 417 36 407 6 403 -30 402 M298 654 289 614 271 576 260 560 252 544 240 530 225 508 196 477 174 458 148 441 124 428 78 407 58 400 6 390 -30 390 M298 605 277 560 252 522 219 482 184 452 166 438 144 425 131 420 122 414 112 411 74 394 48 385 28 381 20 378 12 380 -30 378 M298 571 272 527 242 488 200 448 182 436 176 430 148 414 130 405 54 374 16 367 -30 367 M298 518 283 496 266 480 252 460 214 426 196 413 173 398 142 381 88 359 72 354 63 350 M298 497 267 458 249 438 234 424 218 412 184 389 174 386 132 363 116 358 100 350 M298 476 260 432 240 413 221 398 152 358 134 350 M298 457 268 425 262 416 246 402 209 376 165 350 M298 421 292 411 277 396 224 354 215 350 M298 401 289 390 271 374 262 369 240 350 M298 383 260 350 M298 369 284 356 275 350' stroke='#828200'/><path d='M17 764 26 747 29 734 28 716 22 698 8 680 -8 669 -24 665 -30 665 M96 764 100 732 98 712 89 686 76 661 63 642 56 635 16 611 -2 606 -30 603 M157 764 159 758 159 742 161 714 155 688 143 652 116 614 111 604 80 574 66 564 58 560 4 544 -20 541 -30 542 M219 764 220 744 220 714 220 696 217 684 213 674 201 632 195 618 182 592 158 560 143 544 114 519 96 510 70 500 34 490 18 484 -4 479 -30 477 M278 764 281 732 280 694 269 632 261 612 234 564 211 530 195 510 164 481 144 466 124 455 56 426 46 422 18 416 -6 417 -22 416 -30 417 M298 544 294 539 289 528 284 523 277 510 256 488 232 458 182 418 170 411 121 386 110 383 98 376 86 374 60 362 36 357 -10 356 -30 357 M298 440 276 413 263 400 210 361 190 350 M298 354 293 350' stroke='#d26400'/></g>
<g clip-path='url(#cr2b)'><path d='M202 569 208 558 212 540 211 510 M202 610 213 598 228 570 233 554 237 532 238 510 M202 628 226 601 236 582 247 546 250 510 M202 644 216 634 227 620 242 598 249 584 256 562 262 522 262 510 M202 660 214 652 226 640 246 616 250 608 267 572 271 552 275 510 M202 690 220 677 246 653 261 636 276 614 292 574 299 536 299 510 M202 702 228 686 262 656 278 636 299 594 306 576 312 538 311 510 M202 715 232 698 250 684 276 660 289 642 302 616 315 596 318 582 324 542 325 510 M202 731 233 714 254 698 281 672 306 640 323 610 329 594 336 532 336 510 M202 759 222 750 248 735 300 688 307 678 320 662 324 654 344 622 353 600 358 570 360 540 360 510 M221 764 230 761 256 747 288 714 308 698 324 678 336 661 354 624 366 596 372 546 374 510 M253 764 266 756 284 734 319 702 338 681 345 670 360 635 371 616 377 600 385 540 385 510 M274 764 282 758 292 744 304 732 330 709 350 685 360 668 363 658 372 638 382 620 391 594 394 566 397 556 398 524 397 510 M311 764 342 735 366 704 379 684 391 654 399 642 417 598 423 564 423 550 425 536 425 510 M330 764 352 744 382 704 397 676 421 622 430 594 435 574 438 552 437 510 M348 764 356 758 367 746 401 698 411 678 422 648 428 636 442 600 446 582 451 530 450 510 M368 764 396 728 400 719 418 691 452 609 458 592 460 572 461 548 464 536 464 516 463 510 M401 764 432 720 442 702 460 662 471 630 484 584 485 556 490 530 489 510 M417 764 445 724 453 710 461 694 482 640 486 620 493 598 498 560 499 550 502 536 501 510 M432 764 442 752 462 717 470 698 490 658 494 646 496 630 508 584 513 540 512 510 M446 764 459 746 471 724 486 691 502 664 505 654 520 582 524 554 525 510 M475 764 490 732 514 694 521 680 528 658 549 568 550 510 M489 764 504 734 529 692 540 658 563 564 563 544 561 520 562 510 M504 764 516 738 538 702 548 674 563 622 563 612 567 604 576 562 574 522 575 510 M519 764 526 748 531 742 533 736 538 730 546 714 555 688 576 620 582 586 586 574 590 542 588 534 589 516 587 510 M544 764 547 758 562 738 574 707 587 680 594 656 599 648 599 640 602 626 602 618 611 558 614 524 612 510 M558 764 562 757 572 746 582 728 587 710 603 674 608 658 614 634 615 614 618 604 618 594 623 566 626 544 626 510 M576 764 583 756 593 740 603 704 616 674 626 640 627 622 634 576 640 510 M596 764 608 734 615 704 633 660 639 634 641 612 649 542 651 510 M619 764 628 744 638 714 647 692 658 661 M633 764 646 730 651 722 658 702 M647 764 658 741' stroke='#828200'/><path d='M202 590 216 568 222 552 226 524 224 510 M202 676 215 666 242 639 261 614 273 590 281 566 287 532 288 510 M202 746 234 728 275 696 294 676 299 668 307 660 311 652 326 630 340 602 348 534 348 510 M293 764 314 741 334 724 339 716 352 704 372 670 376 658 404 600 406 588 412 534 410 510 M384 764 390 758 412 724 418 718 437 682 461 618 470 596 473 578 473 558 478 524 477 510 M461 764 490 708 508 680 515 662 524 622 529 608 534 574 537 552 537 510 M531 764 553 728 580 660 586 640 593 590 598 572 602 528 600 510 M607 764 617 744 620 734 622 722 628 708 630 697 649 650 658 573' stroke='#d26400'/></g>
<g clip-path='url(#cr3)'><path d='M-19 546 -26 532 -30 496 M15 546 7 506 -25 436 -28 426 -30 409 M29 546 19 500 6 475 -12 432 -20 394 -30 365 M40 546 34 501 11 448 8 434 -5 394 -10 370 -14 358 -29 326 -30 315 M56 546 50 530 51 522 48 508 33 450 17 412 9 378 2 360 -12 330 -17 300 -21 288 -30 272 M88 546 79 508 67 478 62 448 45 412 40 378 30 359 20 332 12 282 -3 250 -4 238 -12 208 -20 188 -26 180 -30 170 M106 546 97 518 93 500 82 474 81 460 75 438 67 426 56 396 54 380 38 346 36 328 30 304 29 278 9 246 1 204 -11 174 -17 164 -29 136 -30 123 M120 546 114 524 112 508 104 488 99 480 94 464 93 444 82 416 68 390 64 372 53 342 47 300 40 272 32 257 25 248 18 232 16 206 12 192 -4 152 -24 88 -30 75 M136 546 134 534 126 514 120 490 107 462 107 442 104 430 98 412 87 394 82 388 78 378 65 318 63 302 59 290 55 282 50 264 44 252 35 238 30 228 27 188 13 158 3 122 -18 66 -23 42 -30 30 M168 546 161 528 148 484 136 454 131 418 116 382 112 366 100 330 98 320 83 282 80 267 73 250 69 236 55 206 50 176 39 150 34 122 13 72 -5 14 -26 -30 M183 546 172 520 171 510 159 464 152 453 147 440 142 410 133 386 122 350 115 334 110 317 94 280 87 242 78 212 63 178 54 148 52 126 41 100 35 74 19 38 15 20 6 0 4 -10 -8 -30 M199 546 184 514 179 486 175 478 170 458 158 428 142 360 130 336 121 308 105 278 102 264 101 246 90 200 76 172 68 132 59 100 48 55 31 28 21 6 19 -30 M216 546 200 512 196 486 188 472 175 428 166 408 162 392 161 382 157 358 151 344 144 334 131 294 122 282 118 272 107 206 91 168 70 80 52 32 37 12 34 4 36 -30 M244 546 241 524 221 470 218 456 207 422 202 408 193 396 186 378 186 356 180 334 176 326 168 314 166 304 152 272 147 252 139 232 137 220 138 202 136 193 119 162 116 140 111 128 105 118 98 96 94 72 90 62 85 40 67 -2 62 -16 60 -30 M261 546 251 500 236 470 236 456 231 442 206 388 202 374 197 336 192 322 185 312 173 282 164 264 159 246 158 240 154 228 153 206 151 194 136 158 126 126 118 112 110 92 105 60 90 12 86 6 82 -4 79 -20 78 -30 M278 546 268 520 263 496 255 476 249 442 234 418 227 402 219 380 215 352 208 326 184 264 176 252 171 238 169 228 169 210 157 180 150 144 130 98 92 -30 M292 546 278 507 272 478 266 464 264 442 248 414 243 402 235 376 233 354 229 340 219 320 216 302 207 284 203 266 188 238 183 210 171 178 168 154 142 87 135 52 123 28 112 -30 M325 546 324 536 303 498 297 474 288 448 285 428 268 383 263 336 251 314 245 296 236 278 233 256 222 222 222 210 207 182 204 164 185 120 183 108 174 89 165 54 162 30 147 -4 142 -30 M340 546 339 540 327 510 325 504 316 488 312 476 311 468 302 446 298 424 288 396 281 366 280 344 276 330 266 308 263 296 249 274 238 238 232 202 223 180 216 154 202 118 194 86 183 64 173 20 166 -1 161 -8 154 -30 M354 546 345 518 341 510 337 490 328 468 324 452 305 406 299 374 299 366 288 324 285 318 278 296 262 271 252 248 247 212 243 198 235 174 223 132 216 118 208 88 199 66 190 28 180 0 167 -30 M370 546 354 510 349 484 338 442 317 400 313 370 298 318 292 302 288 284 268 246 261 206 245 168 239 138 225 102 222 84 217 72 208 36 195 8 182 -30 M400 546 393 532 380 486 372 470 368 456 368 448 362 424 350 399 344 367 340 354 328 336 321 320 312 266 296 224 289 190 278 164 278 154 273 136 248 84 246 72 230 18 212 -30 M416 546 410 530 404 496 385 460 381 446 378 430 373 412 367 400 364 382 356 352 340 326 332 284 327 268 315 244 309 222 306 182 295 162 288 135 278 112 263 88 260 78 259 62 253 40 246 4 228 -30 M434 546 427 528 426 518 415 482 406 464 402 451 390 426 379 388 373 356 367 338 360 324 347 282 340 262 332 248 327 232 324 196 320 180 306 154 301 132 290 110 287 98 278 80 276 54 270 38 263 6 257 -12 247 -30 M450 546 448 534 420 464 412 428 404 416 399 398 391 378 387 362 386 346 372 300 344 240 341 230 340 214 334 180 321 146 308 118 294 74 288 46 275 6 272 -10 264 -30 M479 546 441 440 440 427 435 408 431 400 427 386 417 368 408 324 395 290 392 263 387 252 368 225 363 212 360 186 360 174 357 158 339 118 333 92 327 74 315 50 308 22 298 -2 292 -30 M494 546 475 488 468 474 461 448 456 436 454 414 449 398 439 372 429 358 422 318 408 284 406 255 401 244 390 228 377 202 375 166 372 150 353 118 346 78 336 60 327 34 326 22 313 -6 306 -30 M508 546 491 490 473 444 465 404 454 367 442 344 436 312 422 286 418 254 414 240 397 208 392 188 390 150 384 136 374 124 365 108 351 58 349 42 343 28 334 -8 330 -15 324 -30 M523 546 515 528 506 484 490 454 485 440 481 412 475 392 474 378 458 340 452 310 435 280 430 248 410 196 406 176 405 156 402 145 390 117 379 100 369 74 365 58 364 38 360 24 354 15 346 -14 339 -30 M554 546 553 538 543 508 542 502 537 486 537 476 532 458 517 438 513 430 509 410 508 396 497 364 485 340 486 330 484 310 456 252 450 216 439 192 430 164 416 106 404 78 400 72 395 36 392 26 387 14 377 -2 373 -12 370 -30 M572 546 566 519 556 492 555 484 551 474 544 446 529 424 525 410 521 384 505 348 501 320 497 304 489 288 481 268 472 250 466 220 454 183 441 150 427 96 416 70 413 54 410 30 401 10 385 -18 381 -30 M592 546 578 516 566 476 558 454 555 434 543 408 531 370 520 346 515 316 490 246 477 198 465 170 455 154 446 104 429 62 424 28 406 -8 398 -17 391 -30 M606 546 604 534 593 516 581 478 572 458 568 430 561 410 552 392 546 374 537 352 534 342 531 318 518 288 517 280 507 252 501 224 493 200 467 140 467 124 453 82 443 64 436 20 427 0 408 -24 405 -30 M633 546 634 530 615 498 609 472 604 458 603 450 591 418 585 388 561 320 540 274 535 244 515 194 512 168 502 132 499 112 486 92 476 56 461 22 459 4 446 -30 M650 546 648 534 643 516 628 490 625 458 620 439 612 428 608 419 601 392 588 358 582 336 560 287 556 274 550 238 547 226 540 212 529 194 527 166 517 138 511 106 495 76 487 40 477 20 474 -2 467 -24 464 -30 M658 522 644 486 640 450 621 418 611 384 610 368 606 358 597 338 591 320 581 302 574 282 572 264 567 252 560 220 547 194 544 184 541 156 527 122 527 116 521 94 514 77 506 64 499 38 498 28 491 12 479 -30 M658 481 657 464 654 452 649 440 632 410 626 391 622 355 606 316 596 296 586 268 576 226 561 180 554 142 542 118 534 90 519 56 514 28 504 8 491 -30 M658 382 654 366 642 332 633 312 630 298 630 276 628 266 617 244 610 234 604 214 597 196 581 128 568 98 567 86 563 72 550 46 544 20 532 -1 523 -30 M658 334 653 326 644 304 641 260 635 242 623 224 616 208 614 198 605 176 594 126 589 116 587 100 560 38 555 16 547 -6 546 -14 546 -24 543 -30 M658 288 656 268 652 246 636 209 631 202 629 194 620 180 616 168 610 138 604 120 602 102 574 40 573 26 564 0 560 -30 M658 230 651 214 644 192 635 178 629 164 624 140 614 112 611 88 592 46 587 16 578 -6 573 -30 M658 145 656 134 651 124 644 108 641 84 627 54 623 26 603 -30 M658 101 655 90 643 56 636 24 620 -16 617 -30 M658 55 655 46 653 26 639 -2 630 -30 M658 -2 647 -30' stroke='#828200'/><path d='M-2 546 -2 539 -5 532 -5 524 -9 508 -30 457 M70 546 66 516 55 490 52 478 48 448 31 414 26 379 13 354 7 340 1 316 1 308 -2 292 -15 262 -21 242 -23 226 -30 203 M153 546 137 504 130 472 124 464 120 454 119 434 114 412 102 390 92 366 90 350 77 298 66 276 65 266 56 242 47 228 42 217 40 206 39 184 35 172 28 160 22 144 17 118 4 90 -13 36 -30 1 M230 546 228 534 216 512 214 492 194 438 192 424 188 414 181 406 176 396 169 350 158 326 150 300 138 272 125 234 121 204 115 184 107 170 101 138 90 113 74 49 60 13 51 2 47 -30 M310 546 307 536 302 529 297 518 291 500 286 478 278 458 272 428 263 414 255 392 249 364 248 340 235 320 234 308 222 278 218 256 205 230 204 218 199 204 193 194 187 180 181 148 170 116 160 96 155 80 153 60 148 40 144 29 137 18 128 -30 M384 546 370 516 364 484 354 454 352 440 349 432 339 414 328 378 326 363 310 324 304 302 301 280 294 260 294 252 286 236 274 198 259 164 256 140 249 116 238 94 224 42 212 10 204 -4 196 -30 M464 546 455 516 430 454 429 440 424 420 406 376 390 310 375 274 372 264 360 242 354 228 345 174 338 148 322 114 316 88 286 2 278 -30 M538 546 524 508 521 476 516 466 501 444 488 374 476 350 471 334 469 320 465 302 447 266 437 228 429 204 423 190 415 150 406 118 381 64 380 36 376 25 363 2 354 -30 M619 546 620 538 614 524 600 498 596 478 589 464 583 446 581 432 574 402 563 376 560 364 550 340 544 313 528 278 515 228 505 200 497 168 494 162 484 118 474 104 465 70 453 46 445 8 425 -30 M658 435 648 410 639 362 618 308 616 276 606 262 602 252 596 243 590 216 582 196 580 180 570 150 569 142 550 96 547 72 537 56 530 22 513 -4 505 -30 M658 188 645 162 639 136 632 124 628 112 625 78 612 52 606 32 602 8 589 -24 588 -30' stroke='#d26400'/></g>
</g>
<g fill='none' stroke='#0000e0' stroke-width='1.3'>
<path d='M21.8 0 L48.5 17.4 L72.8 56 L89.8 95 L85 134 L75.2 155.8'/>
<path d='M174.8 0 L281.6 49 L310 41.7 L324.3 40.5 L377.7 44.1 L457.8 0'/>
<path d='M0 704 L30.6 646.3 L103.7 683.7 L124 669.4 L241 732.7'/>
<path d='M273 736 L270 712.3 L456.3 645.4 L497 629.4 L508.7 616.3 L532 616.3 L543.6 610.5 L558 616.3 L590 616.3 L630 623.6'/>
</g>
<g fill='none' stroke='#e00000' stroke-width='1.3'>
<path d='M43.7 0 L223.3 19.8 L247 58 L263 77.4 L295.4 88.7 L324.5 92 L337 95'/>
<path d='M300 19.8 L348.5 61 L372.8 68.4'/>
</g>
<g transform='translate(38.8 234.60000000000002) rotate(-23.85)'>
<g clip-path='url(#band)' fill='none' stroke-width='1' shape-rendering='crispEdges'>
<path d='M-2.1 0V479 M0 -2.1H513 M515.1 0V479 M0 481.1H513 M-2.1 0.0A2.1 2.1 0 0 1 -0.0 -2.1 M513.0 -2.1A2.1 2.1 0 0 1 515.1 -0.0 M515.1 479.0A2.1 2.1 0 0 1 513.0 481.1 M0.0 481.1A2.1 2.1 0 0 1 -2.1 479.0 M-4.2 0V479 M0 -4.2H513 M517.2 0V479 M0 483.2H513 M-4.2 0.0A4.2 4.2 0 0 1 -0.0 -4.2 M513.0 -4.2A4.2 4.2 0 0 1 517.2 -0.0 M517.2 479.0A4.2 4.2 0 0 1 513.0 483.2 M0.0 483.2A4.2 4.2 0 0 1 -4.2 479.0 M-8.4 0V479 M0 -8.4H513 M521.4 0V479 M0 487.4H513 M-8.4 0.0A8.4 8.4 0 0 1 -0.0 -8.4 M513.0 -8.4A8.4 8.4 0 0 1 521.4 -0.0 M521.4 479.0A8.4 8.4 0 0 1 513.0 487.4 M0.0 487.4A8.4 8.4 0 0 1 -8.4 479.0 M-10.5 0V479 M0 -10.5H513 M523.5 0V479 M0 489.5H513 M-10.5 0.0A10.5 10.5 0 0 1 -0.0 -10.5 M513.0 -10.5A10.5 10.5 0 0 1 523.5 -0.0 M523.5 479.0A10.5 10.5 0 0 1 513.0 489.5 M0.0 489.5A10.5 10.5 0 0 1 -10.5 479.0 M-12.6 0V479 M0 -12.6H513 M525.6 0V479 M0 491.6H513 M-12.6 0.0A12.6 12.6 0 0 1 -0.0 -12.6 M513.0 -12.6A12.6 12.6 0 0 1 525.6 -0.0 M525.6 479.0A12.6 12.6 0 0 1 513.0 491.6 M0.0 491.6A12.6 12.6 0 0 1 -12.6 479.0 M-14.7 0V479 M0 -14.7H513 M527.7 0V479 M0 493.7H513 M-14.7 0.0A14.7 14.7 0 0 1 -0.0 -14.7 M513.0 -14.7A14.7 14.7 0 0 1 527.7 -0.0 M527.7 479.0A14.7 14.7 0 0 1 513.0 493.7 M0.0 493.7A14.7 14.7 0 0 1 -14.7 479.0 M-16.8 0V479 M0 -16.8H513 M529.8 0V479 M0 495.8H513 M-16.8 0.0A16.8 16.8 0 0 1 -0.0 -16.8 M513.0 -16.8A16.8 16.8 0 0 1 529.8 -0.0 M529.8 479.0A16.8 16.8 0 0 1 513.0 495.8 M0.0 495.8A16.8 16.8 0 0 1 -16.8 479.0 M-21.0 0V479 M0 -21.0H513 M534.0 0V479 M0 500.0H513 M-21.0 0.0A21.0 21.0 0 0 1 -0.0 -21.0 M513.0 -21.0A21.0 21.0 0 0 1 534.0 -0.0 M534.0 479.0A21.0 21.0 0 0 1 513.0 500.0 M0.0 500.0A21.0 21.0 0 0 1 -21.0 479.0 M-23.1 0V479 M0 -23.1H513 M536.1 0V479 M0 502.1H513 M-23.1 0.0A23.1 23.1 0 0 1 -0.0 -23.1 M513.0 -23.1A23.1 23.1 0 0 1 536.1 -0.0 M536.1 479.0A23.1 23.1 0 0 1 513.0 502.1 M0.0 502.1A23.1 23.1 0 0 1 -23.1 479.0 M-25.2 0V479 M0 -25.2H513 M538.2 0V479 M0 504.2H513 M-25.2 0.0A25.2 25.2 0 0 1 -0.0 -25.2 M513.0 -25.2A25.2 25.2 0 0 1 538.2 -0.0 M538.2 479.0A25.2 25.2 0 0 1 513.0 504.2 M0.0 504.2A25.2 25.2 0 0 1 -25.2 479.0 M-27.3 0V479 M0 -27.3H513 M540.3 0V479 M0 506.3H513 M-27.3 0.0A27.3 27.3 0 0 1 -0.0 -27.3 M513.0 -27.3A27.3 27.3 0 0 1 540.3 -0.0 M540.3 479.0A27.3 27.3 0 0 1 513.0 506.3 M0.0 506.3A27.3 27.3 0 0 1 -27.3 479.0 M-29.4 0V479 M0 -29.4H513 M542.4 0V479 M0 508.4H513 M-29.4 0.0A29.4 29.4 0 0 1 -0.0 -29.4 M513.0 -29.4A29.4 29.4 0 0 1 542.4 -0.0 M542.4 479.0A29.4 29.4 0 0 1 513.0 508.4 M0.0 508.4A29.4 29.4 0 0 1 -29.4 479.0 M-33.6 0V479 M0 -33.6H513 M546.6 0V479 M0 512.6H513 M-33.6 0.0A33.6 33.6 0 0 1 -0.0 -33.6 M513.0 -33.6A33.6 33.6 0 0 1 546.6 -0.0 M546.6 479.0A33.6 33.6 0 0 1 513.0 512.6 M0.0 512.6A33.6 33.6 0 0 1 -33.6 479.0 M-35.7 0V479 M0 -35.7H513 M548.7 0V479 M0 514.7H513 M-35.7 0.0A35.7 35.7 0 0 1 -0.0 -35.7 M513.0 -35.7A35.7 35.7 0 0 1 548.7 -0.0 M548.7 479.0A35.7 35.7 0 0 1 513.0 514.7 M0.0 514.7A35.7 35.7 0 0 1 -35.7 479.0 M-37.8 0V479 M0 -37.8H513 M550.8 0V479 M0 516.8H513 M-37.8 0.0A37.8 37.8 0 0 1 -0.0 -37.8 M513.0 -37.8A37.8 37.8 0 0 1 550.8 -0.0 M550.8 479.0A37.8 37.8 0 0 1 513.0 516.8 M0.0 516.8A37.8 37.8 0 0 1 -37.8 479.0 M-39.9 0V479 M0 -39.9H513 M552.9 0V479 M0 518.9H513 M-39.9 0.0A39.9 39.9 0 0 1 -0.0 -39.9 M513.0 -39.9A39.9 39.9 0 0 1 552.9 -0.0 M552.9 479.0A39.9 39.9 0 0 1 513.0 518.9 M0.0 518.9A39.9 39.9 0 0 1 -39.9 479.0 M-42.0 0V479 M0 -42.0H513 M555.0 0V479 M0 521.0H513 M-42.0 0.0A42.0 42.0 0 0 1 -0.0 -42.0 M513.0 -42.0A42.0 42.0 0 0 1 555.0 -0.0 M555.0 479.0A42.0 42.0 0 0 1 513.0 521.0 M0.0 521.0A42.0 42.0 0 0 1 -42.0 479.0 M-46.2 0V479 M0 -46.2H513 M559.2 0V479 M0 525.2H513 M-46.2 0.0A46.2 46.2 0 0 1 -0.0 -46.2 M513.0 -46.2A46.2 46.2 0 0 1 559.2 -0.0 M559.2 479.0A46.2 46.2 0 0 1 513.0 525.2 M0.0 525.2A46.2 46.2 0 0 1 -46.2 479.0 M-48.3 0V479 M0 -48.3H513 M561.3 0V479 M0 527.3H513 M-48.3 0.0A48.3 48.3 0 0 1 -0.0 -48.3 M513.0 -48.3A48.3 48.3 0 0 1 561.3 -0.0 M561.3 479.0A48.3 48.3 0 0 1 513.0 527.3 M0.0 527.3A48.3 48.3 0 0 1 -48.3 479.0' stroke='#828200'/>
<path d='M-6.3 0V479 M0 -6.3H513 M519.3 0V479 M0 485.3H513 M-6.3 0.0A6.3 6.3 0 0 1 -0.0 -6.3 M513.0 -6.3A6.3 6.3 0 0 1 519.3 -0.0 M519.3 479.0A6.3 6.3 0 0 1 513.0 485.3 M0.0 485.3A6.3 6.3 0 0 1 -6.3 479.0 M-18.9 0V479 M0 -18.9H513 M531.9 0V479 M0 497.9H513 M-18.9 0.0A18.9 18.9 0 0 1 -0.0 -18.9 M513.0 -18.9A18.9 18.9 0 0 1 531.9 -0.0 M531.9 479.0A18.9 18.9 0 0 1 513.0 497.9 M0.0 497.9A18.9 18.9 0 0 1 -18.9 479.0 M-31.5 0V479 M0 -31.5H513 M544.5 0V479 M0 510.5H513 M-31.5 0.0A31.5 31.5 0 0 1 -0.0 -31.5 M513.0 -31.5A31.5 31.5 0 0 1 544.5 -0.0 M544.5 479.0A31.5 31.5 0 0 1 513.0 510.5 M0.0 510.5A31.5 31.5 0 0 1 -31.5 479.0 M-44.1 0V479 M0 -44.1H513 M557.1 0V479 M0 523.1H513 M-44.1 0.0A44.1 44.1 0 0 1 -0.0 -44.1 M513.0 -44.1A44.1 44.1 0 0 1 557.1 -0.0 M557.1 479.0A44.1 44.1 0 0 1 513.0 523.1 M0.0 523.1A44.1 44.1 0 0 1 -44.1 479.0' stroke='#d26400'/>
</g>
<path d='M0.0 -22.0 L123.0 -4.0 L236.0 0.0 L286.0 -2.0 L449.0 -20.0 L513.0 -28.0 L534.0 -25.0 L548.0 -17.0 L556.0 -8.0 L559.0 0.0 L553.0 177.0 L553.0 479.0 L513.0 487.0 L415.0 489.5 L299.0 500.2 L153.0 505.9 L40.0 517.7 L0.0 519.0 L-6.3 518.5 L-12.4 517.0 L-18.2 514.6 L-23.5 511.4 L-28.3 507.3 L-32.4 502.5 L-35.6 497.2 L-38.0 491.4 L-39.5 485.3 L-40.0 479.0 L-45.0 380.0 L-47.0 256.0 L-39.0 178.0 L-33.0 140.0 L-26.0 72.0 L-22.0 0.0 L-22.0 0.0 L-21.7 -3.4 L-20.9 -6.8 L-19.6 -10.0 L-17.8 -12.9 L-15.6 -15.6 L-12.9 -17.8 L-10.0 -19.6 L-6.8 -20.9 L-3.4 -21.7 L-0.0 -22.0Z' fill='none' stroke='#fff' stroke-width='1.4'/>
<rect x='0' y='0' width='513' height='479' fill='none' stroke='#fff' stroke-width='1.4'/>
<path d='M-86 45.5L560 49.4 M-86 93.2L560 97.1 M-86 140.9L560 144.8 M-86 188.6L560 192.5 M-86 236.3L560 240.2 M-86 284.0L560 287.9 M-86 331.7L560 335.6 M-86 379.4L560 383.3 M-86 427.1L560 431.0 M-86 474.8L560 478.7' stroke='#a8a8a8' stroke-width='1.2' stroke-dasharray='11 8' fill='none'/>
<path d='M30 0V479 M392 0V479' stroke='#d26400' stroke-width='1' fill='none'/>
<path d='M150 0V479 M273 0V479 M350 0V165 M296 165V479' stroke='#828200' stroke-width='1.1' fill='none'/>
<path d='M158 -4V515 M347 0V165 L300 165 V501' stroke='#f4f4f4' stroke-width='1.4' fill='none'/>
<path d='M0 0L-22 0 M0 0 L0 -19 M513 0L513 -30 M513 0 L559 0 M0 479 L-54 479 M0 479 L0 518' stroke='#eee' stroke-width='1.1' fill='none'/>
<path d='M194.5 -47V530' stroke='#ff0000' stroke-width='4' fill='none'/>
<rect x='187' y='-10.0' width='15' height='6' fill='#fff' stroke='#999' stroke-width='0.6'/><rect x='187' y='38.6' width='15' height='6' fill='#fff' stroke='#999' stroke-width='0.6'/><rect x='187' y='87.2' width='15' height='6' fill='#fff' stroke='#999' stroke-width='0.6'/><rect x='187' y='135.8' width='15' height='6' fill='#fff' stroke='#999' stroke-width='0.6'/><rect x='187' y='184.4' width='15' height='6' fill='#fff' stroke='#999' stroke-width='0.6'/><rect x='187' y='233.0' width='15' height='6' fill='#fff' stroke='#999' stroke-width='0.6'/><rect x='187' y='281.6' width='15' height='6' fill='#fff' stroke='#999' stroke-width='0.6'/><rect x='187' y='330.2' width='15' height='6' fill='#fff' stroke='#999' stroke-width='0.6'/><rect x='187' y='378.8' width='15' height='6' fill='#fff' stroke='#999' stroke-width='0.6'/><rect x='187' y='427.4' width='15' height='6' fill='#fff' stroke='#999' stroke-width='0.6'/><rect x='187' y='476.0' width='15' height='6' fill='#fff' stroke='#999' stroke-width='0.6'/><rect x='187' y='524.6' width='15' height='6' fill='#fff' stroke='#999' stroke-width='0.6'/>
<rect x='-94' y='137.9' width='14' height='6' fill='#fff'/><rect x='-94' y='185.6' width='14' height='6' fill='#fff'/><rect x='-94' y='233.3' width='14' height='6' fill='#fff'/><rect x='-94' y='281.0' width='14' height='6' fill='#fff'/><rect x='-94' y='328.7' width='14' height='6' fill='#fff'/><rect x='-94' y='376.4' width='14' height='6' fill='#fff'/><rect x='-94' y='424.1' width='14' height='6' fill='#fff'/><rect x='-94' y='471.8' width='14' height='6' fill='#fff'/>
</g>
<g fill='#fff'>
<rect x='44.9' y='227.4' width='34.0' height='3.6'/>
<rect x='44.9' y='233.0' width='32.8' height='4.0'/>
<rect x='55.3' y='239.5' width='12.7' height='3.7'/>
<rect x='131.0' y='155.3' width='34.8' height='3.4'/>
<rect x='134.2' y='161.1' width='31.6' height='4.4'/>
<rect x='152.9' y='167.2' width='12.9' height='3.8'/>
<rect x='211.2' y='167.9' width='34.4' height='4.4'/>
<rect x='211.2' y='174.0' width='31.5' height='4.3'/>
<rect x='211.2' y='180.5' width='12.6' height='3.9'/>
<rect x='303.2' y='80.1' width='34.6' height='4.6'/>
<rect x='306.1' y='86.3' width='31.7' height='4.5'/>
<rect x='325.0' y='92.3' width='12.8' height='4.5'/>
<rect x='391.0' y='99.5' width='35.7' height='4.3'/>
<rect x='391.0' y='105.0' width='32.8' height='4.7'/>
<rect x='392.2' y='111.6' width='12.7' height='4.1'/>
<rect x='513.4' y='20.4' width='34.3' height='3.8'/>
<rect x='514.2' y='25.7' width='32.9' height='3.7'/>
<rect x='524.4' y='32.4' width='12.3' height='4.0'/>
<rect x='371.2' y='229.1' width='35.7' height='3.8'/>
<rect x='374.3' y='235.3' width='32.0' height='4.4'/>
<rect x='392.9' y='241.6' width='14.0' height='4.3'/>
<rect x='427.0' y='236.0' width='34.9' height='5.2'/>
<rect x='429.6' y='242.2' width='31.6' height='4.3'/>
<rect x='438.0' y='247.8' width='12.4' height='4.3'/>
<rect x='332.3' y='248.4' width='35.7' height='4.6'/>
<rect x='336.0' y='254.0' width='32.0' height='4.6'/>
<rect x='354.0' y='259.9' width='14.0' height='5.0'/>
<rect x='385.1' y='255.2' width='34.9' height='4.7'/>
<rect x='386.0' y='261.4' width='32.7' height='4.4'/>
<rect x='396.0' y='267.0' width='13.0' height='4.7'/>
<rect x='237.3' y='664.3' width='34.3' height='4.4'/>
<rect x='238.2' y='669.6' width='32.5' height='4.3'/>
<rect x='248.4' y='676.0' width='12.5' height='4.3'/>
<rect x='324.9' y='593.0' width='36.0' height='4.7'/>
<rect x='328.9' y='598.9' width='32.0' height='4.6'/>
<rect x='347.3' y='604.7' width='13.6' height='4.7'/>
<rect x='380.7' y='600.3' width='36.3' height='4.4'/>
<rect x='383.6' y='605.9' width='31.4' height='4.6'/>
<rect x='392.3' y='612.0' width='13.4' height='4.3'/>
<rect x='457.8' y='534.9' width='35.2' height='4.7'/>
<rect x='460.7' y='540.7' width='32.3' height='5.0'/>
<rect x='479.0' y='546.5' width='14.0' height='5.0'/>
<rect x='511.6' y='542.2' width='35.4' height='4.3'/>
<rect x='512.5' y='547.7' width='33.4' height='4.7'/>
<rect x='523.2' y='554.4' width='12.2' height='4.3'/>
</g>
<path fill='none' stroke='#c8c8c8' stroke-width='1' d='M165.8 168.0L183.9 171.9 M211.0 178.0L183.9 171.9 M337.8 90.0L356.8 96.0 M391.0 110.0L356.8 96.0 M406.9 233.0L422.6 244.4 M422.6 244.4L380.0 264.0 M368.0 256.0L380.0 264.0 M360.9 598.0L376.9 609.0 M493.0 540.0L507.2 551.5'/>
<g fill='#ffff00'><circle cx='38.8' cy='234.6' r='3.6'/><circle cx='183.9' cy='171.9' r='3.6'/><circle cx='356.8' cy='96.0' r='3.6'/><circle cx='508.4' cy='28.6' r='3.6'/><circle cx='422.6' cy='244.4' r='3.6'/><circle cx='380.0' cy='264.0' r='3.6'/><circle cx='232.4' cy='672.5' r='3.6'/><circle cx='376.9' cy='609.0' r='3.6'/><circle cx='507.2' cy='551.5' r='3.6'/></g>
<path d='M111.5 242 L118 258 M113 260.5 L123 256 M207 192 L213 208 M208.5 210.5 L218.5 206' stroke='#d8d8d8' stroke-width='1.1' fill='none'/>
<text x='25' y='238' font-family='Liberation Sans' font-size='9' fill='#e07000'>A</text>
<g fill='none' stroke='#00d000' stroke-width='1.2'><path d='M307.5 254.2l4 6l-4 6l-4-6z'/><path d='M432.7 258.5l4 6l-4 6l-4-6z'/><path d='M582.4 325.6l4 6l-4 6l-4-6z'/><path d='M336.4 433.4l4 6l-4 6l-4-6z'/></g>
</svg>
<svg style='left:0;top:172px' width='1547' height='736' viewBox='0 0 1547 736'>
<path fill='none' stroke='#6a9fd8' stroke-width='1.1' d='M16.6 8.3L1.6 7.5 M16.4 13.1L1.4 12.5 M16.2 17.4L1.2 17.3 M16.5 23.8L1.5 25.0 M17.5 30.2L2.9 33.8 M18.8 34.3L4.7 39.5 M20.8 39.2L7.1 45.5 M24.5 45.6L12.5 54.6 M27.9 49.3L17.8 60.4 M30.4 51.4L21.1 63.2 M36.8 56.1L28.1 68.3 M43.3 60.8L34.5 72.9 M48.4 64.3L40.1 76.8 M53.7 67.8L45.0 80.1 M59.3 72.2L49.3 83.4 M66.3 79.4L55.0 89.2 M70.7 85.1L58.1 93.2 M75.6 95.2L61.5 100.2 M77.6 102.0L63.1 105.6 M79.1 109.0L64.3 111.6 M80.1 116.9L65.2 118.2 M80.6 124.3L65.7 125.4 M81.3 130.9L66.4 132.9 M82.4 137.5L67.6 140.1 M83.7 144.1L69.0 147.3 M85.3 150.6L70.8 154.6 M87.3 157.2L73.1 162.0 M89.7 164.0L75.7 169.3 M92.3 170.7L78.4 176.3 M95.0 176.9L81.4 183.2 M96.5 180.2L82.9 186.5 M100.9 190.1L86.9 195.5 M103.1 196.7L88.7 201.0 M104.6 202.3L90.1 206.1 M21.8 -14.3L18.2 -0.8 M30.6 -11.9L26.7 1.5 M35.2 -10.5L31.1 2.9 M45.3 -7.3L41.0 6.0 M50.8 -5.5L46.4 7.8 M56.5 -3.6L52.0 9.6 M62.2 -1.6L57.5 11.6 M67.8 0.4L63.0 13.5 M79.1 4.8L73.9 17.8 M84.7 7.1L79.4 20.0 M90.2 9.3L84.9 22.3 M95.3 11.4L90.1 24.4 M100.0 13.2L95.0 26.3 M108.3 16.2L103.8 29.4 M116.1 18.8L111.4 32.0 M120.1 20.3L114.9 33.3 M127.9 23.7L121.8 36.3 M135.2 27.4L128.5 39.7 M142.1 31.6L134.5 43.3 M148.3 36.1L139.6 47.0 M153.8 40.9L143.9 50.8 M160.8 49.4L149.2 57.2 M164.7 56.1L152.1 62.2 M167.6 62.9L154.4 67.8 M169.8 69.6L156.3 73.4 M171.6 79.3L157.7 81.0 M172.2 84.6L158.4 86.8 M173.6 91.2L159.9 94.2 M175.5 99.7L161.9 103.0 M176.6 104.1L163.1 107.6 M178.9 112.1L165.5 116.3 M181.3 118.8L168.3 123.9 M184.1 125.4L171.2 130.9 M185.6 128.9L172.7 134.4 M188.6 136.3L175.6 141.5 M191.7 144.0L178.7 149.2 M194.5 151.1L181.5 156.3 M196.7 156.6L183.7 161.7 M199.0 162.4L186.0 167.5'/>
<path fill='none' stroke='#e8e8e8' stroke-width='1.2' d='M21.3 -3.1 L21.1 -0.2 L20.9 3.9 L20.6 8.5 L20.3 13.2 L20.2 17.5 L20.3 20.8 L20.5 23.4 L20.7 25.7 L21.0 27.6 L21.3 29.3 L21.8 30.9 L22.5 33.0 L23.4 35.3 L24.4 37.5 L25.4 39.6 L26.5 41.4 L27.7 43.2 L28.9 44.7 L30.5 46.3 L32.9 48.3 L35.8 50.5 L39.1 52.8 L42.5 55.3 L45.7 57.5 L48.2 59.4 L50.6 61.0 L53.2 62.7 L56.0 64.6 L59.0 66.8 L61.9 69.2 L64.5 71.7 L66.9 74.1 L69.4 76.8 L71.8 79.7 L74.0 82.9 L76.1 86.4 L77.9 90.1 L79.3 93.8 L80.5 97.5 L81.5 101.1 L82.3 104.6 L83.1 108.3 L83.7 112.4 L84.1 116.6 L84.4 120.4 L84.6 124.0 L84.9 127.3 L85.2 130.3 L85.7 133.5 L86.3 136.8 L86.9 140.1 L87.6 143.3 L88.3 146.4 L89.1 149.5 L90.0 152.7 L91.1 155.9 L92.3 159.2 L93.5 162.6 L94.8 166.0 L96.0 169.2 L97.3 172.2 L98.7 175.3 L100.2 178.5 L101.7 181.8 L103.2 185.2 L104.7 188.7 L105.9 192.2 L106.9 195.6 L107.8 198.7 L108.5 201.3 L109.0 203.4 L109.4 204.8 M16.3 -3.4 L16.1 -0.5 L15.9 3.6 L15.6 8.2 L15.4 13.0 L15.2 17.4 L15.3 21.0 L15.5 23.8 L15.7 26.3 L16.1 28.5 L16.5 30.5 L17.0 32.4 L17.8 34.7 L18.8 37.2 L19.8 39.6 L21.0 41.9 L22.3 44.1 L23.7 46.2 L25.2 48.1 L27.2 50.0 L29.8 52.2 L32.9 54.5 L36.2 56.9 L39.6 59.3 L42.7 61.6 L45.4 63.5 L47.9 65.1 L50.4 66.8 L53.1 68.6 L55.9 70.7 L58.6 73.0 L61.0 75.3 L63.3 77.5 L65.6 80.0 L67.8 82.7 L69.8 85.6 L71.7 88.8 L73.3 92.1 L74.6 95.5 L75.7 98.9 L76.6 102.3 L77.4 105.6 L78.1 109.2 L78.7 113.0 L79.1 117.0 L79.4 120.8 L79.6 124.4 L79.9 127.8 L80.3 131.0 L80.8 134.3 L81.4 137.7 L82.0 141.0 L82.7 144.3 L83.5 147.6 L84.3 150.9 L85.3 154.1 L86.4 157.5 L87.5 160.9 L88.8 164.4 L90.1 167.8 L91.4 171.1 L92.7 174.2 L94.1 177.4 L95.6 180.6 L97.1 183.8 L98.6 187.2 L100.0 190.5 L101.2 193.8 L102.1 197.0 L103.0 200.0 L103.7 202.6 L104.2 204.6 L104.6 206.1 M-3.7 -4.5 L-3.8 -1.7 L-4.1 2.3 L-4.4 7.1 L-4.6 12.3 L-4.8 17.3 L-4.7 21.7 L-4.5 25.5 L-4.1 28.8 L-3.6 32.1 L-2.9 35.3 L-2.0 38.5 L-0.9 41.6 L0.3 44.8 L1.7 48.0 L3.4 51.4 L5.3 54.8 L7.7 58.2 L10.5 61.6 L13.7 64.8 L17.3 67.8 L21.0 70.6 L24.6 73.2 L28.0 75.6 L31.0 77.8 L34.0 79.9 L36.8 81.8 L39.3 83.5 L41.6 85.0 L43.5 86.4 L45.3 87.9 L47.1 89.6 L48.9 91.4 L50.4 93.1 L51.8 94.8 L53.0 96.5 L54.1 98.2 L55.0 100.2 L55.8 102.3 L56.6 104.6 L57.2 107.1 L57.9 109.8 L58.4 112.7 L58.9 115.5 L59.2 118.7 L59.4 122.2 L59.7 125.9 L60.0 129.8 L60.5 133.7 L61.1 137.5 L61.7 141.2 L62.4 144.9 L63.2 148.6 L64.0 152.4 L65.0 156.2 L66.2 160.0 L67.4 163.9 L68.7 167.7 L70.1 171.4 L71.5 175.0 L72.9 178.6 L74.3 182.2 L75.9 185.7 L77.5 189.0 L79.0 192.2 L80.2 195.0 L81.3 197.6 L82.2 200.1 L83.0 202.7 L83.7 205.3 L84.3 207.7 L84.9 209.8 L85.3 211.4 M-9.7 -4.8 L-9.8 -2.0 L-10.1 2.0 L-10.4 6.8 L-10.6 12.0 L-10.8 17.3 L-10.7 22.0 L-10.4 26.0 L-10.1 29.6 L-9.5 33.2 L-8.8 36.7 L-7.8 40.3 L-6.6 43.7 L-5.2 47.1 L-3.7 50.6 L-1.9 54.2 L0.3 58.0 L2.9 61.8 L6.0 65.6 L9.7 69.3 L13.6 72.5 L17.5 75.5 L21.2 78.1 L24.5 80.5 L27.5 82.7 L30.5 84.8 L33.5 86.8 L36.0 88.5 L38.1 89.9 L39.8 91.1 L41.3 92.4 L43.0 93.9 L44.5 95.5 L45.9 97.0 L47.0 98.4 L48.0 99.7 L48.8 101.1 L49.5 102.6 L50.2 104.3 L50.8 106.3 L51.4 108.5 L52.0 111.1 L52.5 113.7 L52.9 116.3 L53.2 119.2 L53.4 122.6 L53.7 126.3 L54.0 130.4 L54.5 134.6 L55.1 138.5 L55.8 142.2 L56.5 146.0 L57.3 149.9 L58.2 153.8 L59.2 157.8 L60.4 161.8 L61.7 165.8 L63.1 169.7 L64.5 173.5 L65.9 177.2 L67.3 180.8 L68.8 184.5 L70.5 188.2 L72.1 191.6 L73.5 194.7 L74.7 197.4 L75.7 199.7 L76.5 202.0 L77.2 204.4 L77.9 206.9 L78.5 209.2 L79.1 211.3 L79.5 213.0 M14.1 -21.5 L16.3 -20.9 L19.3 -20.1 L23.1 -19.1 L27.3 -18.0 L31.9 -16.7 L36.7 -15.3 L41.6 -13.8 L46.9 -12.1 L52.4 -10.3 L58.1 -8.3 L63.9 -6.3 L69.5 -4.3 L75.2 -2.2 L81.0 0.1 L86.6 2.4 L92.1 4.7 L97.2 6.7 L101.8 8.5 L105.9 10.1 L109.9 11.4 L113.8 12.7 L117.8 14.1 L121.9 15.6 L126.0 17.4 L130.0 19.2 L133.8 21.1 L137.6 23.0 L141.3 25.2 L144.9 27.4 L148.3 29.8 L151.5 32.2 L154.4 34.7 L157.3 37.3 L160.0 40.2 L162.6 43.3 L165.0 46.6 L167.2 50.2 L169.2 53.9 L170.8 57.5 L172.2 61.1 L173.5 64.6 L174.6 68.2 L175.5 72.0 L176.2 75.7 L176.6 78.8 L176.9 81.4 L177.2 83.8 L177.7 86.5 L178.5 90.1 L179.4 94.2 L180.4 98.5 L181.5 102.8 L182.6 106.9 L183.6 110.5 L184.7 113.8 L185.9 116.9 L187.3 120.1 L188.7 123.5 L190.2 127.0 L191.7 130.7 L193.2 134.4 L194.8 138.2 L196.3 142.1 L197.8 145.8 L199.2 149.2 L200.4 152.2 L201.4 154.7 L202.3 157.0 L203.0 159.0 L203.7 160.6 L204.2 162.0 L204.6 163.0 M12.5 -15.7 L14.8 -15.1 L17.8 -14.3 L21.5 -13.3 L25.8 -12.2 L30.3 -10.9 L34.9 -9.6 L39.8 -8.0 L45.0 -6.4 L50.5 -4.6 L56.2 -2.7 L61.9 -0.7 L67.5 1.3 L73.1 3.4 L78.7 5.7 L84.4 8.0 L89.8 10.2 L95.0 12.3 L99.7 14.2 L103.9 15.7 L107.9 17.1 L111.9 18.4 L115.7 19.7 L119.7 21.2 L123.6 22.8 L127.4 24.6 L131.1 26.4 L134.7 28.3 L138.2 30.3 L141.6 32.4 L144.8 34.6 L147.7 36.9 L150.5 39.2 L153.1 41.6 L155.5 44.2 L157.8 46.9 L160.0 49.9 L162.0 53.2 L163.8 56.5 L165.3 59.9 L166.6 63.2 L167.8 66.5 L168.8 69.9 L169.7 73.3 L170.2 76.5 L170.6 79.5 L170.9 82.1 L171.3 84.8 L171.8 87.7 L172.6 91.4 L173.5 95.6 L174.6 99.9 L175.7 104.3 L176.8 108.5 L177.9 112.4 L179.1 115.8 L180.4 119.1 L181.7 122.5 L183.2 125.8 L184.7 129.3 L186.2 132.9 L187.7 136.7 L189.2 140.5 L190.7 144.3 L192.2 148.0 L193.6 151.4 L194.8 154.4 L195.8 156.9 L196.7 159.2 L197.5 161.2 L198.1 162.8 L198.6 164.1 L199.0 165.2 M8.0 1.7 L10.3 2.3 L13.3 3.1 L17.0 4.1 L21.0 5.1 L25.3 6.3 L29.7 7.7 L34.3 9.1 L39.5 10.8 L44.8 12.5 L50.4 14.4 L55.9 16.3 L61.2 18.2 L66.6 20.2 L72.0 22.4 L77.6 24.6 L83.0 26.9 L88.3 29.0 L93.3 31.0 L97.9 32.7 L102.2 34.1 L106.1 35.5 L109.7 36.7 L113.1 37.9 L116.4 39.3 L119.7 40.9 L123.0 42.5 L126.1 44.1 L129.0 45.8 L131.7 47.5 L134.2 49.2 L136.5 50.9 L138.5 52.6 L140.4 54.4 L142.1 56.2 L143.6 58.0 L145.1 60.0 L146.4 62.1 L147.6 64.4 L148.7 66.9 L149.7 69.5 L150.7 72.2 L151.5 74.8 L152.1 77.0 L152.4 79.1 L152.7 81.5 L153.0 84.3 L153.5 87.6 L154.2 91.3 L155.0 95.3 L156.0 99.6 L157.1 104.2 L158.2 108.8 L159.5 113.5 L160.8 117.8 L162.2 121.9 L163.6 125.8 L165.1 129.4 L166.6 132.9 L168.1 136.3 L169.5 139.7 L171.0 143.4 L172.5 147.2 L174.0 151.1 L175.5 154.7 L176.9 158.1 L178.1 161.1 L179.1 163.6 L179.9 165.8 L180.7 167.7 L181.3 169.3 L181.8 170.7 L182.2 171.7 M6.2 8.5 L8.5 9.1 L11.6 9.9 L15.2 10.8 L19.1 11.9 L23.3 13.1 L27.6 14.3 L32.2 15.8 L37.3 17.4 L42.6 19.2 L48.1 21.0 L53.6 22.9 L58.8 24.8 L64.0 26.7 L69.4 28.9 L74.9 31.1 L80.4 33.4 L85.7 35.5 L90.8 37.5 L95.5 39.3 L99.9 40.8 L103.8 42.1 L107.4 43.3 L110.5 44.5 L113.6 45.7 L116.7 47.2 L119.8 48.7 L122.7 50.2 L125.4 51.8 L127.9 53.3 L130.1 54.8 L132.1 56.4 L133.9 57.9 L135.5 59.4 L136.9 60.8 L138.1 62.3 L139.2 63.9 L140.3 65.5 L141.3 67.4 L142.3 69.6 L143.2 72.0 L144.1 74.4 L144.8 76.7 L145.2 78.5 L145.5 80.2 L145.8 82.3 L146.1 85.2 L146.6 88.7 L147.3 92.7 L148.2 96.8 L149.2 101.2 L150.3 105.8 L151.5 110.6 L152.7 115.4 L154.1 119.9 L155.6 124.3 L157.1 128.3 L158.7 132.1 L160.2 135.7 L161.6 139.0 L163.0 142.4 L164.5 146.0 L166.0 149.8 L167.6 153.7 L169.0 157.4 L170.4 160.7 L171.6 163.7 L172.6 166.1 L173.4 168.3 L174.2 170.2 L174.8 171.9 L175.3 173.2 L175.7 174.3 M310.1 -9.5 L311.9 -7.2 L314.5 -4.0 L317.5 -0.1 L320.8 4.1 L324.1 8.5 L327.2 12.6 L330.2 16.7 L333.3 20.8 L336.5 25.1 L339.6 29.5 L342.6 33.8 L345.5 38.0 L348.1 42.0 L350.7 45.9 L353.1 49.8 L355.5 53.7 L357.8 57.7 L360.0 61.9 L362.3 66.6 L364.6 71.6 L366.7 76.6 L368.6 81.3 L370.2 85.2 L371.4 87.9 M306.9 -7.1 L308.8 -4.7 L311.3 -1.5 L314.3 2.4 L317.6 6.6 L320.9 10.9 L324.0 15.0 L327.0 19.0 L330.1 23.2 L333.2 27.5 L336.3 31.8 L339.3 36.1 L342.2 40.2 L344.8 44.2 L347.3 48.0 L349.7 51.9 L352.0 55.7 L354.3 59.6 L356.5 63.7 L358.7 68.3 L360.9 73.2 L363.0 78.2 L365.0 82.8 L366.5 86.7 L367.7 89.5 M298.3 -0.3 L300.1 2.1 L302.6 5.3 L305.6 9.1 L308.9 13.3 L312.1 17.5 L315.2 21.6 L318.2 25.6 L321.2 29.7 L324.3 34.0 L327.4 38.2 L330.3 42.3 L333.0 46.3 L335.6 50.2 L338.0 54.0 L340.3 57.6 L342.5 61.3 L344.6 65.0 L346.7 68.7 L348.7 72.9 L350.8 77.6 L352.9 82.5 L354.8 87.0 L356.4 90.9 L357.6 93.7 M295.1 2.1 L297.0 4.5 L299.5 7.8 L302.5 11.6 L305.7 15.7 L309.0 20.0 L312.0 24.0 L315.0 28.0 L318.0 32.1 L321.1 36.3 L324.1 40.5 L327.0 44.6 L329.7 48.6 L332.2 52.4 L334.6 56.1 L336.9 59.7 L339.1 63.3 L341.1 66.9 L343.1 70.6 L345.1 74.6 L347.2 79.2 L349.2 84.0 L351.1 88.5 L352.7 92.4 L353.9 95.3'/>
<path fill='none' stroke='#ff1010' stroke-width='3.6' d='M5.3 -4.0 L5.1 -1.1 L4.9 2.9 L4.6 7.6 L4.4 12.6 L4.2 17.4 L4.3 21.4 L4.5 24.7 L4.8 27.7 L5.2 30.5 L5.8 33.1 L6.5 35.8 L7.5 38.5 L8.6 41.4 L9.9 44.2 L11.3 47.1 L13.0 50.0 L14.9 52.8 L17.1 55.5 L19.8 58.2 L22.9 60.8 L26.4 63.4 L29.9 65.9 L33.2 68.3 L36.3 70.5 L39.1 72.5 L41.8 74.3 L44.3 76.0 L46.8 77.6 L49.1 79.3 L51.3 81.2 L53.4 83.2 L55.4 85.2 L57.3 87.2 L59.0 89.3 L60.6 91.6 L62.0 94.0 L63.2 96.6 L64.3 99.2 L65.2 102.0 L66.0 104.9 L66.7 108.0 L67.3 111.1 L67.8 114.4 L68.2 117.9 L68.4 121.5 L68.7 125.2 L69.0 128.9 L69.4 132.5 L70.0 136.1 L70.6 139.6 L71.2 143.2 L71.9 146.7 L72.8 150.2 L73.7 153.8 L74.8 157.4 L75.9 161.0 L77.2 164.6 L78.5 168.2 L79.9 171.8 L81.2 175.2 L82.6 178.6 L84.1 181.9 L85.6 185.2 L87.1 188.4 L88.5 191.5 L89.7 194.4 L90.7 197.3 L91.6 200.1 L92.4 202.9 L93.0 205.4 L93.6 207.5 L94.0 209.0'/>
<path fill='none' stroke='#ffb0b0' stroke-width='0.8' d='M5.3 -4.0 L5.1 -1.1 L4.9 2.9 L4.6 7.6 L4.4 12.6 L4.2 17.4 L4.3 21.4 L4.5 24.7 L4.8 27.7 L5.2 30.5 L5.8 33.1 L6.5 35.8 L7.5 38.5 L8.6 41.4 L9.9 44.2 L11.3 47.1 L13.0 50.0 L14.9 52.8 L17.1 55.5 L19.8 58.2 L22.9 60.8 L26.4 63.4 L29.9 65.9 L33.2 68.3 L36.3 70.5 L39.1 72.5 L41.8 74.3 L44.3 76.0 L46.8 77.6 L49.1 79.3 L51.3 81.2 L53.4 83.2 L55.4 85.2 L57.3 87.2 L59.0 89.3 L60.6 91.6 L62.0 94.0 L63.2 96.6 L64.3 99.2 L65.2 102.0 L66.0 104.9 L66.7 108.0 L67.3 111.1 L67.8 114.4 L68.2 117.9 L68.4 121.5 L68.7 125.2 L69.0 128.9 L69.4 132.5 L70.0 136.1 L70.6 139.6 L71.2 143.2 L71.9 146.7 L72.8 150.2 L73.7 153.8 L74.8 157.4 L75.9 161.0 L77.2 164.6 L78.5 168.2 L79.9 171.8 L81.2 175.2 L82.6 178.6 L84.1 181.9 L85.6 185.2 L87.1 188.4 L88.5 191.5 L89.7 194.4 L90.7 197.3 L91.6 200.1 L92.4 202.9 L93.0 205.4 L93.6 207.5 L94.0 209.0'/>
<path fill='none' stroke='#ff0000' stroke-width='5' d='M10.0 -6.0 L12.3 -5.4 L15.3 -4.6 L19.0 -3.7 L23.1 -2.6 L27.5 -1.3 L32.0 0.0 L36.8 1.5 L41.9 3.1 L47.4 4.9 L53.0 6.8 L58.5 8.7 L64.0 10.7 L69.4 12.8 L75.0 15.0 L80.6 17.2 L86.0 19.5 L91.2 21.6 L96.1 23.5 L100.6 25.1 L104.7 26.6 L108.7 27.9 L112.4 29.2 L116.0 30.5 L119.6 32.0 L123.1 33.6 L126.6 35.3 L129.9 37.1 L133.1 38.9 L136.1 40.8 L138.9 42.7 L141.5 44.7 L143.8 46.7 L146.0 48.7 L148.1 50.8 L149.9 53.1 L151.7 55.5 L153.3 58.1 L154.8 60.9 L156.1 63.8 L157.2 66.7 L158.3 69.7 L159.2 72.6 L159.9 75.4 L160.3 78.0 L160.7 80.6 L161.0 83.4 L161.4 86.4 L162.0 89.7 L162.8 93.5 L163.8 97.8 L164.8 102.3 L166.0 106.8 L167.2 111.3 L168.4 115.4 L169.7 119.2 L171.1 122.8 L172.5 126.3 L174.0 129.8 L175.5 133.2 L176.9 136.7 L178.4 140.4 L179.9 144.2 L181.5 148.1 L183.0 151.8 L184.3 155.2 L185.5 158.1 L186.5 160.6 L187.4 162.9 L188.1 164.8 L188.8 166.4 L189.3 167.8 L189.7 168.8 M303.0 -4.0 L304.8 -1.6 L307.4 1.6 L310.4 5.4 L313.6 9.6 L316.9 13.9 L320.0 18.0 L323.0 22.0 L326.1 26.2 L329.2 30.4 L332.3 34.7 L335.2 38.9 L338.0 43.0 L340.6 46.9 L343.1 50.7 L345.4 54.5 L347.7 58.2 L349.9 62.1 L352.0 66.0 L354.1 70.4 L356.3 75.2 L358.4 80.1 L360.3 84.7 L361.9 88.6 L363.1 91.4'/>
<path fill='none' stroke='#ffffff' stroke-width='7' d='M2 41.7L14 38.5'/>
<path fill='none' stroke='#ffffff' stroke-width='7' d='M1 80.0L12.8 70.5'/>
<path fill='none' stroke='#ffffff' stroke-width='7' d='M16 110.0L30 94.0'/>
<path fill='none' stroke='#ffffff' stroke-width='7' d='M34 90.0L47 72.6'/>
<path fill='none' stroke='#ffffff' stroke-width='6' d='M23.5 128.0L52.3 126.0'/>
<path fill='none' stroke='#ffffff' stroke-width='6' d='M25.6 148.5L55.5 146.3'/>
<path fill='none' stroke='#ffffff' stroke-width='6' d='M39.5 193.3L66.2 185.9'/>
<path fill='none' stroke='#ffffff' stroke-width='6' d='M61 115.4L73.7 113.2'/>
<path fill='none' stroke='#ffffff' stroke-width='6' d='M68.4 162.4L82.2 159.2'/>
<path fill='none' stroke='#ffffff' stroke-width='7' d='M98.3 72.6L113.2 44.9'/>
<path fill='none' stroke='#ffffff' stroke-width='6' d='M89.7 209.4L104.7 211.5'/>
<path fill='none' stroke='#ffffff' stroke-width='6' d='M100.4 27.8L109 21.4'/>
<path fill='none' stroke='#ffffff' stroke-width='6' d='M145 51.3L151.7 48.0'/>
<path fill='none' stroke='#ffffff' stroke-width='6' d='M174.8 74.8L204.7 68.4'/>
<path fill='none' stroke='#ffffff' stroke-width='6' d='M181.2 102.5L211 95.0'/>
<path fill='none' stroke='#ffffff' stroke-width='5' d='M189.7 112.2L202.5 107.9'/>
<path fill='none' stroke='#ffffff' stroke-width='6' d='M196.1 136.7L223.9 127.1'/>
<path fill='none' stroke='#ffffff' stroke-width='5' d='M209 151.7L220.7 148.5'/>
<path fill='none' stroke='#ffffff' stroke-width='5' d='M157.7 99.3L170.5 96.1'/>
<path fill='none' stroke='#ffffff' stroke-width='5' d='M170.5 145.3L185.5 141.0'/>
<path fill='none' stroke='#ffffff' stroke-width='6' d='M138.5 55.5L150.2 49.1'/>
<path fill='none' stroke='#ffffff' stroke-width='6' d='M366.7 58.7L394.7 44.1'/>
<path fill='none' stroke='#ffffff' stroke-width='6' d='M370.4 67.2L397 55.0'/>
<path fill='none' stroke='#ffffff' stroke-width='5' d='M348.5 80.5L365.5 75.7'/>
<path fill='none' stroke='#ffffff' stroke-width='6' d='M60 4.0L72 18.0'/>
<path fill='none' stroke='#ffffff' stroke-width='5' d='M128 13.0L140 33.0'/>
<path fill='none' stroke='#b8b8b8' stroke-width='1' d='M170.5 25.6 L181.2 57.7 L170.5 85.5 M230 0 L260 40 L285 95'/>
<g font-family='Liberation Sans' font-size='9' fill='#e0e000'><text x='21' y='30' transform='rotate(60 21 30)'>C</text><text x='150' y='30' transform='rotate(40 150 30)'>C15</text><text x='72' y='52' transform='rotate(70 72 52)'>C2</text><text x='182' y='112' transform='rotate(70 182 112)'>C16</text><text x='90' y='155'>C</text></g>
<path d='M576.8 0.9 L600 45 L617.6 79.5' stroke='#dcdcdc' stroke-width='5' fill='none'/>
<path fill='none' stroke='#ffffff' stroke-width='5' d='M572 42.5 L584 37 M591 86 L603 80 M608 131 L618 126'/>
<path d='M728 -1 L714 22' stroke='#e8e8e8' stroke-width='1.4'/>
<rect x='556' y='130' width='8' height='27' fill='#000'/>
</svg>
<div class='a' style='left:0;top:172px;width:1547px;height:736px;overflow:hidden'>
<div class='t' style='left:422.2px;top:129.5px;font-family:"Liberation Sans";font-size:31.6px;line-height:31.6px;color:#ffffff;font-weight:normal;font-style:normal;transform:scaleX(0.932);'>RELLENO</div>
<div class='t' style='left:131.2px;top:365.6px;font-family:"Liberation Sans";font-size:32.6px;line-height:32.6px;color:#ffffff;font-weight:normal;font-style:normal;transform:scaleX(0.924);'>CORTE</div>
<div class='t' style='left:775.2px;top:-8.1px;font-family:"Liberation Sans";font-size:33px;line-height:33px;color:#ffffff;font-weight:normal;font-style:normal;transform:scaleX(0.902);'>DE RELLENO</div>
<div class='t' style='left:1308.5px;top:168.4px;font-family:"Liberation Sans";font-size:66px;line-height:66px;color:#ff7f00;font-weight:bold;font-style:normal;transform:scaleX(1.127);'>TIVA</div>
<div class='t' style='left:1485.5px;top:168.4px;font-family:"Liberation Sans";font-size:66px;line-height:66px;color:#ff7f00;font-weight:bold;font-style:normal;transform:scaleX(1.138);'>4A</div>
<div class='t' style='left:1294.0px;top:376.8px;font-family:"Liberation Sans";font-size:33px;line-height:33px;color:#ffffff;font-weight:normal;font-style:normal;transform:scaleX(1.028);'>RTE = 222 499 M3</div>
<div class='t' style='left:1312.5px;top:467.3px;font-family:"Liberation Sans";font-size:33px;line-height:33px;color:#ffffff;font-weight:normal;font-style:normal;transform:scaleX(0.987);'>LENO = 88 860</div>
<div class='t' style='left:4.3px;top:8.9px;font-family:"Liberation Sans";font-size:12px;line-height:12px;color:#d0d0d0;font-weight:normal;font-style:normal;transform:scaleX(1.017);'>[-][Superior][Estructura alámbrica 2D]</div>
<svg style='left:0;top:628px' width='100' height='100' viewBox='0 0 100 100'>
<g stroke='#e8e8e8' stroke-width='1.3' fill='none'><path d='M18 38V88H68'/><rect x='14' y='83' width='9.5' height='9.5'/><path d='M20.5 22l6 6l6-6M26.5 28v4'/><path d='M73 74.5l12 12M85 74.5l-12 12'/></g></svg>
<svg style='left:180px;top:700px' width='40' height='36'><path d='M3 33L25 10' stroke='#fff' stroke-width='1.4'/><path d='M31 5L16 14L23 21z' fill='#fff'/></svg>
</div>
<div class='a' style='left:0;top:907px;width:1547px;height:76px;background:#2c323e'></div>
<div class='a' style='left:0;top:907px;width:1547px;height:2px;background:#3b4453'></div>
<div class='a' style='left:25px;top:910px;width:1522px;height:51px;background:#c8c8c8'></div>
<div class='a' style='left:25px;top:963px;width:1522px;height:20px;background:#ffffff'></div>
<svg style='left:3px;top:912px' width='20' height='50' viewBox='0 0 20 50'><g fill='#e8e8e8'><rect x='1' y='4' width='2' height='2'/><rect x='1' y='7' width='2' height='2'/><rect x='4' y='4' width='2' height='2'/><rect x='4' y='7' width='2' height='2'/><rect x='7' y='4' width='2' height='2'/><rect x='7' y='7' width='2' height='2'/><rect x='10' y='4' width='2' height='2'/><rect x='10' y='7' width='2' height='2'/><rect x='13' y='4' width='2' height='2'/><rect x='13' y='7' width='2' height='2'/><rect x='16' y='4' width='2' height='2'/><rect x='16' y='7' width='2' height='2'/></g><path d='M6 13l8 8M14 13l-8 8' stroke='#d0d4da' stroke-width='1.8'/><path d='M3 46l8-8M10 36a3 3 0 1 0 5 -1l-3 3z' stroke='#d0d4da' stroke-width='2.2' fill='#d0d4da'/></svg>
<div class='t' style='left:26.8px;top:916.6px;font-family:"Liberation Mono";font-size:13px;line-height:13px;color:#111;font-weight:normal;font-style:normal;transform:scaleX(0.900);'>26 encontrados</div>
<div class='t' style='left:26.8px;top:931.6px;font-family:"Liberation Mono";font-size:13px;line-height:13px;color:#111;font-weight:normal;font-style:normal;transform:scaleX(0.896);'>Designe objetos:</div>
<div class='t' style='left:26.8px;top:946.6px;font-family:"Liberation Mono";font-size:13px;line-height:13px;color:#111;font-weight:normal;font-style:normal;transform:scaleX(0.897);'>Comando: ObjectViewer</div>
<svg style='left:29px;top:965px' width='30' height='17' viewBox='0 0 30 17'><rect x='0' y='0' width='15' height='16' fill='#ddd' stroke='#999'/><path d='M3 6l4-2h6v9l-4 2H3z' fill='#46b04a'/><path d='M18 6h7l-3.5 4z' fill='#444'/></svg>
<div class='t' style='left:60.1px;top:967.6px;font-family:"Liberation Mono";font-size:13px;line-height:13px;color:#111;font-weight:bold;font-style:normal;transform:scaleX(0.912);'>OBJECTVIEWER</div>
<div class='a' style='left:0;top:983px;width:1547px;height:47px;background:#222732'></div>
<div class='a' style='left:13px;top:984px;width:63px;height:18px;background:#3b4453;border-radius:0 0 6px 6px'></div>
<div class='a' style='left:80px;top:984px;width:30px;height:18px;background:#2a303b;border-radius:0 0 6px 6px'></div>
<div class='a' style='left:114px;top:984px;width:30px;height:18px;background:#2a303b;border-radius:0 0 6px 6px'></div>
<div class='a' style='left:148px;top:984px;width:30px;height:18px;background:#2a303b;border-radius:0 0 6px 6px'></div>
<div class='a' style='left:182px;top:984px;width:30px;height:18px;background:#2a303b;border-radius:0 0 6px 6px'></div>
<div class='a' style='left:216px;top:984px;width:30px;height:18px;background:#2a303b;border-radius:0 0 6px 6px'></div>
<div class='a' style='left:250px;top:984px;width:30px;height:18px;background:#2a303b;border-radius:0 0 6px 6px'></div>
<div class='a' style='left:284px;top:984px;width:30px;height:18px;background:#2a303b;border-radius:0 0 6px 6px'></div>
<div class='t' style='left:22.3px;top:986.9px;font-family:"Liberation Sans";font-size:12px;line-height:12px;color:#f0f0f0;font-weight:bold;font-style:normal;transform:scaleX(1.026);'>Modelo</div>
<div class='t' style='left:90.0px;top:986.9px;font-family:"Liberation Sans";font-size:12px;line-height:12px;color:#b8bec6;font-weight:normal;font-style:normal;transform:scaleX(1.334);'>1</div>
<div class='t' style='left:124.0px;top:986.9px;font-family:"Liberation Sans";font-size:12px;line-height:12px;color:#b8bec6;font-weight:normal;font-style:normal;transform:scaleX(1.334);'>2</div>
<div class='t' style='left:158.0px;top:986.9px;font-family:"Liberation Sans";font-size:12px;line-height:12px;color:#b8bec6;font-weight:normal;font-style:normal;transform:scaleX(1.334);'>3</div>
<div class='t' style='left:192.0px;top:986.9px;font-family:"Liberation Sans";font-size:12px;line-height:12px;color:#b8bec6;font-weight:normal;font-style:normal;transform:scaleX(1.334);'>4</div>
<div class='t' style='left:226.0px;top:986.9px;font-family:"Liberation Sans";font-size:12px;line-height:12px;color:#b8bec6;font-weight:normal;font-style:normal;transform:scaleX(1.334);'>5</div>
<div class='t' style='left:260.0px;top:986.9px;font-family:"Liberation Sans";font-size:12px;line-height:12px;color:#b8bec6;font-weight:normal;font-style:normal;transform:scaleX(1.334);'>6</div>
<svg style='left:290px;top:987px' width='12' height='12'><path d='M6 1v10M1 6h10' stroke='#b8bec6' stroke-width='1.6'/></svg>
<div class='a' style='left:595px;top:1006px;width:179px;height:24px;background:#3b4453'></div>
<div class='t' style='left:610.3px;top:1011.5px;font-family:"Liberation Sans";font-size:12.5px;line-height:12.5px;color:#f0f2f4;font-weight:normal;font-style:normal;transform:scaleX(0.981);'>218305.20, 8938366.59, 0.00</div>
<div class='a' style='left:778px;top:1006px;width:56px;height:24px;background:#3b4453'></div>
<div class='t' style='left:780.7px;top:1011.5px;font-family:"Liberation Sans";font-size:12.5px;line-height:12.5px;color:#f0f2f4;font-weight:normal;font-style:normal;transform:scaleX(0.932);'>MODELO</div>
<div class='a' style='left:837px;top:1006px;width:64.5px;height:24px;background:#3b4453'></div>
<div class='a' style='left:903.7px;top:1006px;width:24.699999999999932px;height:24px;background:#3b4453'></div>
<div class='a' style='left:930px;top:1006px;width:23.799999999999955px;height:24px;background:#3b4453'></div>
<div class='a' style='left:954.7px;top:1006px;width:46.59999999999991px;height:24px;background:#3b4453'></div>
<div class='a' style='left:1003px;top:1006px;width:55.299999999999955px;height:24px;background:#3b4453'></div>
<div class='a' style='left:1060px;top:1006px;width:23.59999999999991px;height:24px;background:#3b4453'></div>
<div class='a' style='left:1085px;top:1006px;width:38px;height:24px;background:#3b4453'></div>
<div class='a' style='left:1124.5px;top:1006px;width:23.700000000000045px;height:24px;background:#3b4453'></div>
<div class='a' style='left:1149.7px;top:1006px;width:22.09999999999991px;height:24px;background:#3b4453'></div>
<div class='a' style='left:1174px;top:1006px;width:24.5px;height:24px;background:#3b4453'></div>
<div class='a' style='left:1200px;top:1006px;width:40px;height:24px;background:#3b4453'></div>
<div class='a' style='left:1242.6px;top:1006px;width:23.600000000000136px;height:24px;background:#3b4453'></div>
<div class='a' style='left:1267.8px;top:1006px;width:37.799999999999955px;height:24px;background:#3b4453'></div>
<div class='a' style='left:1307px;top:1006px;width:40px;height:24px;background:#3b4453'></div>
<div class='a' style='left:1349.7px;top:1006px;width:23.59999999999991px;height:24px;background:#3b4453'></div>
<div class='a' style='left:1375px;top:1006px;width:20.299999999999955px;height:24px;background:#3b4453'></div>
<div class='a' style='left:1397px;top:1006px;width:22px;height:24px;background:#3b4453'></div>
<div class='a' style='left:1420.5px;top:1006px;width:52.0px;height:24px;background:#3b4453'></div>
<div class='a' style='left:1475px;top:1006px;width:40px;height:24px;background:#3b4453'></div>
<div class='a' style='left:1516.5px;top:1006px;width:23.5px;height:24px;background:#3b4453'></div>
<div class='a' style='left:1541.7px;top:1006px;width:5.2999999999999545px;height:24px;background:#3b4453'></div>
<div class='a' style='left:979px;top:1007px;width:22px;height:22px;background:#5a8ec6'></div>
<div class='a' style='left:1085px;top:1007px;width:20.59999999999991px;height:22px;background:#5a8ec6'></div>
<div class='a' style='left:1125px;top:1007px;width:22px;height:22px;background:#5a8ec6'></div>
<div class='a' style='left:1307px;top:1007px;width:22px;height:22px;background:#5a8ec6'></div>
<div class='a' style='left:1350px;top:1007px;width:23px;height:22px;background:#5a8ec6'></div>
<svg style='left:0;top:0' width='1547' height='1030' viewBox='0 0 1547 1030' style='pointer-events:none'><g fill='none' stroke='#e8eaed' stroke-width='1.3'><path d='M842 1013h12M842 1017h12M842 1021h12M845 1010v14M849 1010v14M853 1010v14'/></g><g fill='#e8eaed'><rect x='868' y='1011' width='1.6' height='1.6'/><rect x='868' y='1015' width='1.6' height='1.6'/><rect x='868' y='1019' width='1.6' height='1.6'/><rect x='872' y='1011' width='1.6' height='1.6'/><rect x='872' y='1015' width='1.6' height='1.6'/><rect x='872' y='1019' width='1.6' height='1.6'/><rect x='876' y='1011' width='1.6' height='1.6'/><rect x='876' y='1015' width='1.6' height='1.6'/><rect x='876' y='1019' width='1.6' height='1.6'/></g><path d='M888 1015h8l-4 4.5z' fill='#d8dade'/><g fill='none' stroke='#e8eaed' stroke-width='1.4'><path d='M913 1012h6v-3' /><rect x='909' y='1017' width='5' height='5' fill='#e8eaed' stroke='none'/><path d='M914 1017v-5h6v5'/><path d='M936 1013h6M939 1010v6'/><rect x='940' y='1018' width='9' height='4' fill='#e8eaed' stroke='none'/><path d='M960 1010v12h12'/><circle cx='988' cy='1019' r='5.5'/><path d='M984 1019h10M986 1019l6-7'/></g><path d='M1008 1015h8l-4 4.5z' fill='#d8dade'/><path d='M1020 1010l12 12' stroke='#e86060' stroke-width='1.3'/><path d='M1026 1009v15' stroke='#50d060' stroke-width='1.3'/><rect x='1024' y='1014' width='4' height='4' fill='#222' stroke='#fff' stroke-width='0.8'/><path d='M1046 1015h8l-4 4.5z' fill='#d8dade'/><g fill='none' stroke='#e8eaed' stroke-width='1.4'><path d='M1064 1022h13M1064 1022l10-9'/><rect x='1089' y='1011' width='12' height='11'/></g><path d='M1111 1015h8l-4 4.5z' fill='#d8dade'/><g fill='#e8eaed'><rect x='1129' y='1011' width='13' height='2'/><rect x='1129' y='1015' width='10' height='2'/><rect x='1129' y='1019' width='13' height='2'/><rect x='1129' y='1023' width='8' height='1.5'/></g><rect x='1154' y='1010' width='13' height='13' fill='none' stroke='#e8eaed' stroke-width='1.2'/><g fill='#e8eaed'><rect x='1155' y='1011' width='1.5' height='1.5'/><rect x='1155' y='1017' width='1.5' height='1.5'/><rect x='1158' y='1014' width='1.5' height='1.5'/><rect x='1158' y='1020' width='1.5' height='1.5'/><rect x='1161' y='1011' width='1.5' height='1.5'/><rect x='1161' y='1017' width='1.5' height='1.5'/><rect x='1164' y='1014' width='1.5' height='1.5'/><rect x='1164' y='1020' width='1.5' height='1.5'/></g><rect x='1184' y='1015' width='10' height='9' fill='#7ccf80'/><path d='M1178 1012h5M1180.5 1009.5v5' stroke='#e8eaed' stroke-width='1.2'/><g fill='none' stroke='#e8eaed' stroke-width='1.2'><path d='M1205 1015h9v8h-9z M1205 1015l4-4h9v8l-4 4 M1214 1015l4-4'/></g><rect x='1203' y='1021' width='4' height='4' fill='none' stroke='#f09040'/><path d='M1227 1015h8l-4 4.5z' fill='#d8dade'/><g fill='none' stroke='#e8eaed' stroke-width='1.3'><path d='M1249 1010v12h12M1255 1013l3 3l-2 2l3 3'/></g><g fill='none' stroke='#e8eaed' stroke-width='1.2' stroke-dasharray='2 1.5'><rect x='1275' y='1011' width='11' height='11'/></g><g fill='#4aa3df'><rect x='1273' y='1009' width='3' height='3'/><rect x='1285' y='1021' width='3' height='3'/></g><path d='M1294 1015h8l-4 4.5z' fill='#d8dade'/><g fill='none' stroke='#e8eaed' stroke-width='1.2'><path d='M1318 1009l7 4v8l-7 4l-7-4v-8z M1318 1017v8 M1311 1013l7 4l7-4'/></g><path d='M1335 1015h8l-4 4.5z' fill='#d8dade'/><path d='M1361 1010l-5 13l5-4l5 4z' fill='#fff'/><circle cx='1368' cy='1012' r='2.3' fill='none' stroke='#fff' stroke-width='1'/><path d='M1384 1011l-5 13l5-4l5 4z' fill='#e0e0e0'/><path d='M1388 1009l-2 4h3l-2 4' stroke='#e0e0e0' fill='none'/><path d='M1408 1010l-5 13l5-4l5 4z' fill='#e0e0e0'/></svg>
<div class='t' style='left:1425.2px;top:1011.5px;font-family:"Liberation Sans";font-size:12.5px;line-height:12.5px;color:#eceef0;font-weight:normal;font-style:normal;transform:scaleX(1.007);'>1/750</div>
<svg style='left:1462px;top:1014px' width='10' height='6'><path d='M0 0h8l-4 4.5z' fill='#d8dade'/></svg>
<svg style='left:1478px;top:1009px' width='36' height='16' viewBox='0 0 36 16'><circle cx='8' cy='8' r='4' fill='none' stroke='#e0e0e0' stroke-width='3'/><g stroke='#e0e0e0' stroke-width='2.4'><path d='M8 1v14M1 8h14M3 3l10 10M13 3L3 13'/></g><circle cx='8' cy='8' r='1.8' fill='#3b4453'/><path d='M23 6h8l-4 4.5z' fill='#d8dade'/></svg>
<svg style='left:1520px;top:1009px' width='16' height='16'><path d='M8 1v14M1 8h14' stroke='#e8e8e8' stroke-width='1.6'/></svg>
<svg style='left:1543px;top:1012px' width='4' height='10'><path d='M0 1h4M0 5h4M0 9h4' stroke='#ddd' stroke-width='1.3'/></svg>
<div class='a' style='left:617px;top:193px;width:697px;height:721px;border-radius:8px;box-shadow:0 10px 36px 6px rgba(0,0,0,0.42)'></div>
<div class='a' style='left:617px;top:193px;width:697px;height:721px;background:#f0f0f0;border:1px solid #9a9a9a;border-radius:7px;overflow:hidden'></div>
<div class='a' style='left:618px;top:194px;width:695px;height:29px;background:#f9f0ea;border-radius:7px 7px 0 0'></div>
<svg style='left:625px;top:199px' width='18' height='18' viewBox='0 0 18 18'>
<rect x='0.5' y='0.5' width='15' height='15' fill='#fff' stroke='#555'/><rect x='0.5' y='0.5' width='15' height='3' fill='#777'/>
<path d='M2 6h4l2 1v8H2z' fill='#3fae49'/><path d='M10 7l0 9l2-2l2 3l1-1l-2-3h3z' fill='#fff' stroke='#222' stroke-width='0.8'/></svg>
<div class='t' style='left:646.3px;top:202.4px;font-family:"Liberation Sans";font-size:12px;line-height:12px;color:#1a1a1a;font-weight:normal;font-style:normal;transform:scaleX(1.019);'>Visor de objetos</div>
<div class='a' style='left:1195px;top:207px;width:10px;height:1px;background:#b8b8b8'></div>
<div class='a' style='left:1240px;top:202px;width:10px;height:10px;border:1.3px solid #111;border-radius:1.5px'></div>
<svg style='left:1285px;top:201px' width='12' height='12'><path d='M0.8 0.8l10.4 10.4M11.2 0.8L0.8 11.2' stroke='#111' stroke-width='1.2'/></svg>
<div class='a' style='left:618px;top:223px;width:477px;height:1px;background:#bdbdbd'></div>
<div class='a' style='left:618px;top:224px;width:477px;height:1px;background:#fff'></div>
<div class='a' style='left:618px;top:253px;width:477px;height:1px;background:#bdbdbd'></div>
<div class='a' style='left:618px;top:254px;width:477px;height:1px;background:#fff'></div>
<svg style='left:626px;top:231px' width='16' height='16' viewBox='0 0 16 16'><path d='M0.5 0.5h13l2 2v13H0.5z' fill='#555' stroke='#333'/><rect x='3' y='1' width='9' height='5' fill='#fff'/><rect x='3' y='9' width='10' height='6' fill='#eee'/><rect x='5' y='11' width='5' height='2' fill='#555'/></svg>
<div class='a' style='left:649px;top:229px;width:1px;height:20px;background:#a0a0a0'></div>
<div class='a' style='left:836px;top:229px;width:1px;height:20px;background:#a0a0a0'></div>
<div class='a' style='left:960px;top:229px;width:1px;height:20px;background:#a0a0a0'></div>
<div class='a' style='left:655px;top:228px;width:179px;height:21px;background:#fff;border:1px solid #c8c8c8;border-radius:2px'></div>
<div class='t' style='left:658.0px;top:232.9px;font-family:"Liberation Sans";font-size:12px;line-height:12px;color:#1a1a1a;font-weight:normal;font-style:normal;transform:scaleX(0.892);'>Tonos de gris</div>
<svg style='left:820px;top:235px' width='10' height='6'><path d='M0.5 0.5l4.5 4.5l4.5-4.5' fill='none' stroke='#333' stroke-width='1.1'/></svg>
<div class='a' style='left:966px;top:228px;width:124px;height:21px;background:#fff;border:1px solid #c8c8c8;border-radius:2px'></div>
<div class='t' style='left:968.7px;top:232.9px;font-family:"Liberation Sans";font-size:12px;line-height:12px;color:#1a1a1a;font-weight:normal;font-style:normal;transform:scaleX(0.881);'>Superior</div>
<svg style='left:1080px;top:235px' width='10' height='6'><path d='M0.5 0.5l4.5 4.5l4.5-4.5' fill='none' stroke='#333' stroke-width='1.1'/></svg>
<div class='a' style='left:911px;top:228px;width:23px;height:21px;background:#cce4f7;border:1px solid #99c9ef;border-radius:2px'></div>
<svg style='left:843px;top:228px' width='112' height='22' viewBox='0 0 112 22'>
<g fill='none' stroke='#666' stroke-width='1.2'>
<path d='M6 19c-3-3-4-6-4-8c0-1 2-1 3 1l1 2V5c0-1 2-1 2 0v6V3c0-1 2-1 2 0v8V4c0-1 2-1 2 0v7V6c0-1 2-1 2 0v7c0 4-2 6-4 6z'/>
<circle cx='31' cy='9' r='5'/><path d='M35 13l4 5' stroke='#b07a30' stroke-width='2'/>
<circle cx='56' cy='11' r='7.5'/><circle cx='56' cy='9' r='3'/><path d='M51 16c2-3 8-3 10 0'/>
<ellipse cx='79' cy='10' rx='8' ry='4' stroke='#3a84c8'/><path d='M79 2v16' stroke='#3a84c8'/><path d='M82 15l3 3M85 15l-3 3' stroke='#3a84c8'/>
<rect x='97' y='5' width='11' height='10' rx='1'/><circle cx='102.5' cy='10' r='2.5'/><path d='M98 18h10l3 0M109 16l2 2l-2 2' stroke='#333'/>
</g></svg>
<div class='a' style='left:624px;top:258px;width:22px;height:21px;background:#cce4f7;border:1px solid #99c9ef;border-radius:2px'></div>
<div class='a' style='left:695px;top:259px;width:1px;height:19px;background:#a0a0a0'></div>
<div class='a' style='left:840px;top:259px;width:1px;height:19px;background:#a0a0a0'></div>
<svg style='left:624px;top:258px' width='242' height='22' viewBox='0 0 242 22'>
<g fill='none' stroke='#666' stroke-width='1.1'>
<path d='M4 7h11v11H4z M4 7l4-4h11v11l-4 4 M15 7l4-4'/><path d='M7 10v5h5' stroke='#4a8ad0'/>
<path d='M27 8l4-4h10v10l-4 4H27z' fill='#ddd'/><path d='M37 8l4-4 M37 8v10 M27 8h10'/>
<rect x='49' y='6' width='14' height='11' rx='2'/><circle cx='56' cy='11.5' r='3'/><path d='M51 19h4M53 17v4M58 20h4'/>
<path d='M80 4h14v11M80 4v14h9'/><circle cx='92' cy='17' r='2.5'/><path d='M94 19l2 2' stroke='#b07a30' stroke-width='1.5'/>
<path d='M102 4h3M113 4h3M102 4v3M116 4v3M102 15v3h3'/><path d='M109 7v6M106 10h6' stroke='#3a84c8'/><circle cx='115' cy='17' r='2.5'/><path d='M117 19l2 2' stroke='#b07a30' stroke-width='1.5'/>
<path d='M126 4l13 13M139 4l-13 13M126 4h3M126 4v3M139 4h-3M139 4v3M126 17v-3'/><circle cx='138' cy='17' r='2.5'/><path d='M140 19l2 2' stroke='#b07a30' stroke-width='1.5'/>
<path d='M150 9h7M153.5 5.5v7' stroke='#444' stroke-width='1.6'/><circle cx='161' cy='17' r='2.5'/><path d='M163 19l2 2' stroke='#b07a30' stroke-width='1.5'/>
<path d='M173 9h7' stroke='#444' stroke-width='1.6'/><circle cx='184' cy='17' r='2.5'/><path d='M186 19l2 2' stroke='#b07a30' stroke-width='1.5'/>
<circle cx='201' cy='10' r='6.5'/><path d='M199 8c0-2 4-2 4 0c0 2-2 2-2 3.5M201 13.5v0.8'/><path d='M205 15l4 5' stroke='#b07a30' stroke-width='2'/>
<circle cx='232' cy='11' r='6'/><circle cx='232' cy='11' r='2.5'/><path d='M232 2v18M223 11h18'/>
</g></svg>
<div class='a' style='left:623px;top:288px;width:468px;height:21px;background:#fff;border:1px solid #c8c8c8;border-radius:2px'></div>
<div class='t' style='left:626.4px;top:292.4px;font-family:"Liberation Sans";font-size:12px;line-height:12px;color:#1a1a1a;font-weight:normal;font-style:normal;transform:scaleX(0.889);'>Standard</div>
<svg style='left:1077px;top:295px' width='10' height='6'><path d='M0.5 0.5l4.5 4.5l4.5-4.5' fill='none' stroke='#333' stroke-width='1.1'/></svg>
<div class='a' style='left:618px;top:891px;width:695px;height:1px;background:#c4c4c4'></div>
<div class='a' style='left:618px;top:892px;width:695px;height:1px;background:#fff'></div>
<div class='a' style='left:1107px;top:895px;width:1px;height:18px;background:#d0d0d0'></div>
<div class='a' style='left:1182px;top:895px;width:1px;height:18px;background:#d0d0d0'></div>
<div class='a' style='left:1257px;top:895px;width:1px;height:18px;background:#d0d0d0'></div>
<div class='a' style='left:1293px;top:895px;width:1px;height:18px;background:#d0d0d0'></div>
<div class='t' style='left:1111.8px;top:899.4px;font-family:"Liberation Sans";font-size:12px;line-height:12px;color:#111;font-weight:normal;font-style:normal;transform:scaleX(0.977);'>D. foc 28</div>
<div class='t' style='left:1186.2px;top:899.4px;font-family:"Liberation Sans";font-size:12px;line-height:12px;color:#111;font-weight:normal;font-style:normal;transform:scaleX(1.045);'>Zoom 2</div>
<svg style='left:1260px;top:897px' width='33' height='15'><circle cx='8.3' cy='7.4' r='6.3' fill='#ee2a2a'/><circle cx='25.4' cy='7.4' r='6' fill='none' stroke='#555' stroke-width='1'/></svg>
<svg style='left:624px;top:318px' width='680' height='563' viewBox='0 0 680 563' shape-rendering='crispEdges'><rect width='680' height='563' fill='#787a77'/><path fill='#5b5d5a' d='M198 90 215 101 208 104zM197 101 208 104 210 114zM197 101 210 114 204 114z'/><path fill='#5c5e5b' d='M192 85 208 104 197 101zM184 98 204 114 189 110z'/><path fill='#5e605d' d='M210 88 226 104 215 101z'/><path fill='#5f615e' d='M230 20 251 30 240 28zM172 96 189 110 179 109z'/><path fill='#60625f' d='M189 36 201 37 206 53zM210 42 225 54 216 55zM179 109 189 110 199 124z'/><path fill='#616360' d='M211 64 228 81 218 78zM210 88 220 89 226 104z'/><path fill='#626461' d='M181 87 197 101 184 98zM172 96 184 98 189 110zM184 98 197 101 204 114zM169 137 180 135 184 147z'/><path fill='#636562' d='M227 29 240 28 243 42zM158 57 171 74 162 72zM179 109 199 124 186 122zM156 133 173 148 165 146zM144 194 158 208 147 206z'/><path fill='#646663' d='M271 9 290 21 278 22zM10 -6 30 6 16 7zM204 25 219 42 210 42zM190 65 206 75 194 77zM220 64 235 66 240 82zM198 90 210 88 215 101zM169 137 184 147 173 148z'/><path fill='#656764' d='M243 17 263 33 251 30zM214 28 227 29 233 43zM155 35 174 50 161 45zM219 42 238 53 225 54zM194 50 206 53 211 64zM9 54 25 72 15 67zM91 76 103 79 107 90zM256 121 276 134 264 134zM172 121 186 122 193 135z'/><path fill='#666865' d='M238 8 251 5 256 20zM238 8 256 20 243 17zM243 17 256 20 263 33zM16 7 33 21 22 20zM214 28 233 43 219 42zM-10 18 -1 19 6 31zM219 42 233 43 238 53zM115 53 122 57 131 68zM265 69 285 84 273 85zM142 72 150 71 157 82zM181 87 192 85 197 101zM208 104 224 115 210 114zM172 121 193 135 180 135zM186 122 199 124 201 138zM241 129 253 131 256 142zM139 142 162 159 151 157zM133 195 144 194 147 206zM387 406 401 420 389 420zM346 465 362 462 367 478z'/><path fill='#676966' d='M36 -39 58 -26 46 -27zM37 -17 57 1 46 -4zM271 9 284 13 290 21zM128 46 146 56 136 59zM190 65 201 64 206 75zM187 75 198 90 192 85zM192 85 198 90 208 104zM312 98 327 112 318 115zM208 104 215 101 224 115zM189 110 207 126 199 124zM151 118 162 121 169 137zM156 133 169 137 173 148zM180 135 198 151 184 147zM245 143 256 142 263 159zM151 147 165 146 170 157zM226 166 239 182 229 176zM167 172 174 173 181 184zM-18 164 -8 167 3 181zM124 193 133 195 138 205zM120 230 129 231 137 243zM466 376 486 393 475 389zM451 387 465 403 456 401zM407 409 425 424 413 420zM346 465 367 478 355 474zM629 567 636 568 645 580zM626 591 645 604 631 603zM626 614 638 618 645 631zM626 614 645 631 632 627z'/><path fill='#686a67' d='M270 -68 281 -66 288 -54zM275 -51 291 -37 282 -42zM480 55 490 57 498 69zM116 41 136 59 122 57zM183 51 201 64 190 65zM194 50 211 64 201 64zM194 77 210 88 198 90zM206 75 218 78 220 89zM293 85 305 85 312 98zM471 105 485 119 477 119zM78 76 99 92 86 90zM276 160 290 171 278 171zM133 195 147 206 138 205zM120 230 137 243 122 243zM111 242 130 254 118 254zM521 357 539 373 526 368zM476 376 488 377 495 394zM437 396 450 410 439 409zM417 407 429 408 433 422zM646 543 661 558 655 558zM633 557 641 553 648 571zM630 665 647 681 637 678z'/><path fill='#696b68' d='M285 -77 299 -64 289 -62zM272 -40 282 -42 286 -26zM36 -39 47 -39 58 -26zM272 -14 284 0 274 -3zM9 -31 23 -32 28 -18zM59 -13 78 2 69 1zM224 2 238 8 243 17zM251 5 260 7 268 23zM230 20 243 17 251 30zM227 29 243 42 233 43zM155 35 167 38 174 50zM201 37 216 55 206 53zM210 42 219 42 225 54zM139 44 153 48 158 57zM99 56 121 66 108 66zM9 54 19 59 25 72zM19 59 28 60 36 72zM142 72 157 82 145 85zM194 77 206 75 210 88zM206 75 220 89 210 88zM218 78 234 94 220 89zM228 81 244 92 234 94zM-22 80 -14 78 -8 91zM154 98 170 111 159 106zM161 97 172 96 179 109zM161 97 179 109 170 111zM226 104 242 106 245 120zM134 105 151 118 142 119zM159 106 170 111 172 121zM170 111 179 109 186 122zM204 114 216 125 207 126zM270 121 286 134 276 134zM56 108 63 112 71 125zM56 108 71 125 59 121zM162 121 172 121 180 135zM404 149 414 147 423 160zM139 142 151 147 162 159zM43 157 61 171 52 171zM148 184 166 198 156 197zM47 181 54 186 62 196zM111 242 122 243 130 254zM105 252 121 268 112 267zM118 254 137 266 121 268zM534 348 554 360 541 362zM521 357 530 358 539 373zM466 376 476 376 486 393zM398 404 407 409 413 420zM398 404 413 420 401 420zM407 409 417 407 425 424zM630 665 642 668 647 681z'/><path fill='#6a6c69' d='M270 -68 288 -54 275 -51zM133 -68 144 -64 150 -51zM266 -53 275 -51 282 -42zM275 -51 288 -54 291 -37zM35 -66 56 -52 41 -53zM272 -40 286 -26 277 -28zM56 -52 70 -38 63 -40zM517 -1 527 1 533 14zM136 -30 156 -17 146 -16zM282 -16 293 -11 296 1zM32 -27 48 -13 37 -17zM58 -26 74 -12 59 -13zM5 -20 16 -19 26 -6zM128 -7 139 -6 144 6zM26 -6 35 -4 38 10zM220 18 240 28 227 29zM494 46 509 47 510 59zM74 14 82 14 93 26zM-20 17 -10 18 -5 28zM167 38 180 36 183 51zM174 50 190 65 180 63zM183 51 194 50 201 64zM206 53 216 55 220 64zM146 56 162 72 150 71zM220 64 240 82 228 81zM131 68 145 85 133 83zM187 75 194 77 198 90zM218 78 228 81 234 94zM1 67 15 67 20 81zM28 81 39 83 45 99zM-19 91 -3 106 -10 104zM-8 91 12 106 -3 106zM146 106 159 106 162 121zM170 111 186 122 172 121zM296 136 307 138 312 149zM395 147 409 162 401 159zM167 172 181 184 170 187zM-8 167 5 168 13 179zM124 193 138 205 125 204zM129 231 141 229 144 245zM472 363 488 377 476 376zM497 365 503 367 510 379zM476 376 495 394 486 393zM459 388 475 389 481 400zM629 567 645 580 634 580zM631 603 645 604 652 616zM622 627 632 627 636 640z'/><path fill='#6b6d6a' d='M627 -41 638 -39 641 -26zM281 -66 289 -62 297 -49zM30 -80 50 -63 35 -66zM21 -52 35 -52 36 -39zM56 -52 66 -50 70 -38zM47 -39 63 -40 66 -23zM533 14 550 26 540 23zM319 0 328 1 335 14zM319 0 335 14 328 13zM5 -20 26 -6 10 -6zM28 -18 37 -17 46 -4zM48 -13 59 -13 69 1zM260 7 278 22 268 23zM511 33 529 46 516 48zM35 -4 46 -4 52 12zM418 35 436 53 428 50zM427 37 446 51 436 53zM490 57 505 73 498 69zM189 36 206 53 194 50zM201 37 210 42 216 55zM233 43 252 55 238 53zM286 48 299 47 307 61zM554 76 566 88 559 88zM97 40 104 43 115 53zM216 55 225 54 235 66zM238 53 257 69 245 70zM15 42 26 44 28 60zM44 48 56 50 63 62zM158 57 170 62 171 74zM180 63 194 77 187 75zM201 64 211 64 218 78zM201 64 218 78 206 75zM235 66 245 70 249 83zM228 81 240 82 244 92zM240 82 249 83 258 93zM154 98 161 97 170 111zM215 101 232 116 224 115zM226 104 245 120 232 116zM352 117 361 119 368 129zM361 119 373 121 378 131zM6 94 16 95 18 106zM146 106 162 121 151 118zM159 106 172 121 162 121zM162 121 180 135 169 137zM186 122 201 138 193 135zM296 136 312 149 302 146zM178 161 201 175 186 173zM43 157 56 162 61 171zM155 170 170 187 160 182zM210 174 221 175 226 191zM-18 164 3 181 -12 176zM148 184 160 182 166 198zM207 186 221 203 210 203zM-19 177 -4 189 -18 188zM68 185 75 189 81 200zM144 194 156 197 158 208zM236 216 251 230 242 229zM103 262 112 267 118 277zM563 339 583 349 572 351zM458 337 480 353 465 352zM489 354 503 367 497 365zM482 365 497 365 503 379zM488 377 503 379 509 391zM459 388 481 400 465 403zM387 406 398 404 401 420zM249 504 265 502 271 517zM633 557 648 571 636 568zM634 580 645 580 648 595zM622 627 636 640 629 642zM629 642 645 654 633 656zM620 666 630 665 637 678zM626 680 637 678 638 692z'/><path fill='#6c6e6b' d='M34 -101 41 -100 49 -87zM272 -76 285 -77 289 -62zM285 -77 293 -74 299 -64zM16 -94 25 -92 30 -80zM38 -90 56 -74 43 -79zM535 -36 542 -37 550 -26zM22 -80 30 -80 35 -66zM25 -65 35 -66 41 -53zM25 -65 41 -53 35 -52zM50 -63 66 -50 56 -52zM70 -60 89 -49 74 -46zM258 -41 272 -40 277 -28zM41 -53 56 -52 63 -40zM263 -31 282 -16 272 -14zM416 -11 431 -11 435 -1zM15 -41 32 -27 23 -32zM28 -39 46 -27 32 -27zM260 -18 274 -3 267 -6zM488 8 505 22 496 22zM9 -31 28 -18 16 -19zM131 -18 146 -16 148 -2zM255 -4 271 9 260 7zM267 -6 284 13 271 9zM636 36 656 48 644 50zM16 -19 35 -4 26 -6zM28 -18 46 -4 35 -4zM48 -13 69 1 57 1zM128 -7 144 6 134 7zM224 2 243 17 230 20zM10 -6 26 -6 30 6zM26 -6 38 10 30 6zM101 3 114 17 109 19zM180 10 188 15 196 25zM180 10 196 25 183 24zM256 20 270 34 263 33zM373 34 388 35 390 49zM16 7 30 6 33 21zM60 13 79 26 70 24zM82 14 92 17 102 27zM240 28 251 30 257 46zM302 39 323 54 311 51zM468 54 480 55 487 71zM79 26 93 26 97 40zM123 29 131 33 139 44zM123 29 139 44 128 46zM144 34 161 45 153 48zM128 46 139 44 146 56zM161 45 180 63 170 62zM174 50 183 51 190 65zM282 62 298 76 290 75zM26 44 39 60 28 60zM170 62 180 63 187 75zM211 64 220 64 228 81zM324 77 340 93 325 88zM131 68 142 72 145 85zM150 71 162 72 169 84zM171 74 192 85 181 87zM579 115 595 128 583 131zM15 67 25 72 28 81zM56 73 76 86 65 84zM39 83 52 88 61 97zM251 108 261 105 270 121zM293 109 306 110 311 123zM134 105 146 106 151 118zM189 110 204 114 207 126zM204 114 210 114 216 125zM245 120 264 134 253 131zM256 121 270 121 276 134zM311 123 326 126 330 140zM142 119 156 133 150 132zM151 118 169 137 156 133zM128 131 139 131 139 142zM235 144 245 143 253 157zM278 146 291 146 295 158zM170 157 186 173 174 173zM259 168 272 170 276 181zM35 157 52 171 41 173zM201 175 210 174 214 190zM16 171 30 170 32 181zM16 171 32 181 24 179zM71 173 92 190 75 189zM84 173 100 187 92 190zM95 174 104 177 112 191zM136 182 148 184 156 197zM136 182 156 197 144 194zM559 225 572 237 562 237zM47 181 62 196 51 197zM54 186 68 185 71 197zM68 185 81 200 71 197zM125 204 138 205 143 219zM132 217 150 234 141 229zM455 250 465 252 468 263zM118 254 130 254 137 266zM13 254 28 270 21 267zM513 332 524 348 515 344zM546 347 559 349 566 363zM378 414 399 431 385 430zM-14 499 -0 499 8 512zM378 553 397 569 384 566zM626 591 636 590 645 604zM632 627 650 645 636 640zM618 638 629 642 633 656zM629 642 636 640 645 654zM621 652 633 656 642 668zM621 652 642 668 630 665zM620 666 637 678 626 680zM626 680 638 692 629 693z'/><path fill='#6d6f6c' d='M41 -100 58 -86 49 -87zM261 -77 281 -66 270 -68zM417 -62 425 -64 436 -48zM25 -92 38 -90 43 -79zM58 -86 72 -88 77 -74zM420 -48 440 -37 426 -36zM632 -28 649 -13 638 -16zM43 -79 56 -74 58 -64zM43 -79 58 -64 50 -63zM266 -53 282 -42 272 -40zM415 -38 436 -23 425 -25zM17 -69 25 -65 35 -52zM58 -64 70 -60 74 -46zM619 -5 630 -1 636 11zM-25 -60 -5 -43 -14 -44zM-12 -57 -1 -56 5 -42zM8 -56 21 -52 28 -39zM8 -56 28 -39 15 -41zM66 -50 74 -46 81 -38zM66 -50 81 -38 70 -38zM263 -31 277 -28 282 -16zM63 -40 70 -38 77 -22zM224 -20 245 -7 230 -9zM235 -17 255 -4 245 -7zM23 -32 32 -27 37 -17zM23 -32 37 -17 28 -18zM32 -27 46 -27 48 -13zM222 -10 230 -9 238 8zM474 20 491 31 480 29zM-17 -22 -3 -20 4 -8zM37 -17 48 -13 57 1zM405 22 418 35 410 34zM520 33 537 36 539 49zM543 36 556 42 563 53zM-11 -7 4 -8 5 6zM78 2 87 4 92 17zM256 20 268 23 270 34zM-16 5 -1 19 -10 18zM137 21 155 35 144 34zM499 60 510 59 518 74zM-10 18 6 31 -5 28zM33 21 46 23 50 38zM180 36 194 50 183 51zM518 74 534 89 527 85zM554 76 563 76 566 88zM-16 31 4 44 -7 43zM161 45 174 50 180 63zM206 53 220 64 211 64zM291 62 307 61 313 74zM549 85 561 102 554 98zM632 96 649 110 643 108zM115 53 131 68 121 66zM136 59 150 71 142 72zM180 63 190 65 194 77zM276 72 293 85 285 84zM335 79 348 90 340 93zM342 78 355 80 358 91zM342 78 358 91 348 90zM664 112 676 127 666 123zM121 66 131 68 133 83zM121 66 133 83 125 79zM240 82 258 93 244 92zM285 84 302 98 289 97zM572 117 579 115 583 131zM579 115 590 118 595 128zM72 75 86 90 76 86zM220 89 234 94 242 106zM312 98 322 104 327 112zM-14 78 -1 78 6 94zM99 92 112 106 101 104zM242 106 251 108 256 121zM327 112 346 129 336 129zM35 95 45 99 56 108zM79 101 97 115 84 111zM270 121 277 123 286 134zM132 117 150 132 139 131zM235 144 253 157 239 156zM245 143 263 159 253 157zM278 146 295 158 287 158zM291 146 302 146 309 161zM11 131 23 134 28 145zM165 146 173 148 178 161zM287 158 295 158 305 172zM245 169 261 183 256 180zM305 172 319 189 310 185zM155 170 167 172 170 187zM174 173 186 173 193 188zM221 175 238 189 226 191zM551 214 561 213 568 224zM61 171 75 189 68 185zM119 204 132 217 122 215zM171 208 191 222 179 223zM143 219 164 234 150 234zM122 243 138 258 130 254zM11 316 29 328 19 331zM497 365 510 379 503 379zM503 367 518 370 524 381zM503 367 524 381 510 379zM432 372 451 387 438 386zM225 376 243 388 233 387zM447 399 456 401 462 412zM417 407 433 422 425 424zM249 504 271 517 257 516zM620 579 634 580 636 590zM631 603 652 616 638 618zM234 600 250 615 237 611zM377 613 383 617 392 630zM527 669 536 669 544 683z'/><path fill='#6e706d' d='M34 -101 49 -87 38 -90zM41 -100 51 -101 58 -86zM38 -90 49 -87 56 -74zM49 -87 58 -86 66 -73zM72 -88 87 -72 77 -74zM632 -28 641 -26 649 -13zM56 -74 70 -60 58 -64zM133 -68 150 -51 136 -55zM6 -69 21 -52 8 -56zM35 -66 50 -63 56 -52zM81 -62 94 -59 99 -47zM150 -51 167 -39 155 -41zM425 -25 439 -10 431 -11zM531 -13 543 -9 547 4zM35 -52 47 -39 36 -39zM277 -28 293 -11 282 -16zM343 -19 357 -6 347 -6zM5 -42 23 -32 9 -31zM15 -41 28 -39 32 -27zM81 -38 96 -33 97 -21zM96 -33 104 -34 108 -22zM272 -14 282 -16 284 0zM282 -16 296 1 284 0zM533 14 544 11 550 26zM-12 -34 5 -20 -3 -20zM46 -27 58 -26 59 -13zM46 -27 59 -13 48 -13zM58 -26 66 -23 74 -12zM66 -23 77 -22 81 -9zM87 -23 104 -8 96 -12zM230 -9 245 -7 251 5zM230 -9 251 5 238 8zM450 13 467 27 457 27zM540 23 550 26 556 42zM626 34 644 50 635 50zM-17 -22 4 -8 -11 -7zM74 -12 81 -9 87 4zM81 -9 96 -12 101 3zM139 -6 148 -2 156 9zM216 2 224 2 230 20zM392 23 410 34 397 37zM457 27 467 27 475 45zM-20 -11 -6 7 -16 5zM35 -4 52 12 38 10zM46 -4 57 1 60 13zM167 11 183 24 170 21zM220 18 230 20 240 28zM373 34 390 49 378 44zM60 13 74 14 79 26zM74 14 93 26 79 26zM82 14 102 27 93 26zM149 21 159 23 167 38zM183 24 201 37 189 36zM593 65 609 80 597 78zM11 20 28 34 20 31zM233 43 243 42 252 55zM257 46 274 61 259 59zM528 73 540 76 549 85zM-5 28 6 31 15 42zM97 40 115 53 99 56zM116 41 128 46 136 59zM139 44 158 57 146 56zM153 48 161 45 170 62zM216 55 235 66 220 64zM446 75 463 91 453 90zM457 80 478 91 463 91zM559 88 566 88 573 104zM34 48 54 62 39 60zM44 48 63 62 54 62zM146 56 158 57 162 72zM324 77 335 79 340 93zM664 112 671 113 676 127zM95 66 110 78 103 79zM150 71 169 84 157 82zM171 74 187 75 192 85zM285 84 293 85 302 98zM440 99 457 114 440 112zM539 112 545 112 553 127zM-5 64 1 67 11 79zM1 67 20 81 11 79zM72 75 78 76 86 90zM244 92 261 105 251 108zM11 79 25 96 16 95zM20 81 35 95 25 96zM28 81 45 99 35 95zM65 84 76 86 79 101zM131 93 146 106 134 105zM261 105 274 106 277 123zM293 109 311 123 298 122zM340 116 356 131 346 129zM352 117 368 129 356 131zM683 150 699 165 684 166zM118 115 132 117 139 131zM241 129 256 142 245 143zM320 136 336 153 325 152zM361 145 381 158 369 157zM371 144 387 158 381 158zM493 154 509 172 502 171zM603 169 615 168 621 184zM71 125 85 141 76 135zM84 126 92 124 100 142zM105 128 117 129 118 143zM180 135 193 135 198 151zM193 135 201 138 210 153zM256 142 276 160 263 159zM574 179 589 179 596 192zM134 142 151 157 135 158zM173 148 194 162 178 161zM276 160 287 158 290 171zM162 159 174 173 167 172zM170 157 178 161 186 173zM237 167 245 169 256 180zM343 180 364 192 350 191zM25 156 41 173 30 170zM207 186 214 190 221 203zM-19 177 -12 176 -4 189zM-12 176 3 181 4 193zM156 197 166 198 171 208zM562 237 572 237 579 253zM562 237 579 253 570 250zM228 214 236 216 242 229zM236 216 246 218 251 230zM436 238 455 250 442 248zM643 257 663 275 651 270zM-9 201 9 216 -6 216zM584 265 602 281 592 278zM104 228 120 230 122 243zM226 238 244 256 236 253zM99 237 118 254 105 252zM643 297 658 308 645 310zM130 254 138 258 144 270zM296 272 313 285 301 284zM557 325 571 327 573 337zM612 328 629 343 620 341zM94 289 101 291 108 303zM522 331 534 335 534 348zM483 340 492 340 498 358zM524 348 541 362 530 358zM534 348 546 347 554 360zM559 349 576 365 566 363zM498 358 518 370 503 367zM510 354 526 368 518 370zM677 374 688 373 694 387zM19 320 33 316 38 331zM452 362 462 364 466 376zM482 365 503 379 488 377zM446 373 455 373 459 388zM488 377 509 391 495 394zM125 364 146 378 134 378zM356 388 368 392 377 402zM437 396 447 399 450 410zM346 436 367 454 354 451zM666 471 687 487 673 484zM541 495 552 498 558 511zM286 482 302 494 292 492zM617 553 636 568 629 567zM387 544 402 556 388 555zM636 568 656 581 645 580zM634 580 648 595 636 590zM223 559 237 563 245 576zM379 579 390 577 394 590zM622 602 631 603 638 618zM638 618 653 632 645 631zM383 617 394 617 405 629zM227 614 246 624 234 622zM234 622 247 640 239 636zM386 641 404 656 393 653zM637 678 651 695 638 692z'/><path fill='#6f716e' d='M261 -77 272 -76 281 -66zM417 -62 436 -48 420 -48zM627 -41 641 -26 632 -28zM638 -39 651 -24 641 -26zM-17 -97 -7 -96 0 -80zM49 -87 66 -73 56 -74zM127 -79 139 -80 144 -64zM127 -79 144 -64 133 -68zM281 -66 297 -49 288 -54zM413 -48 426 -36 415 -38zM8 -80 25 -65 17 -69zM56 -74 66 -73 70 -60zM66 -73 77 -74 81 -62zM66 -73 81 -62 70 -60zM629 -14 643 -3 630 -1zM50 -63 58 -64 66 -50zM128 -57 141 -43 131 -42zM150 -51 157 -53 167 -39zM521 -16 531 -13 538 -0zM-25 -60 -12 -57 -5 -43zM21 -52 36 -39 28 -39zM35 -52 41 -53 47 -39zM41 -53 63 -40 47 -39zM131 -42 151 -26 136 -30zM251 -32 272 -14 260 -18zM416 -11 435 -1 423 0zM28 -39 36 -39 46 -27zM47 -39 66 -23 58 -26zM63 -40 77 -22 66 -23zM124 -29 146 -16 131 -18zM151 -26 165 -17 156 -17zM260 -18 272 -14 274 -3zM488 8 499 10 505 22zM544 11 556 15 559 27zM-22 -32 -3 -20 -17 -22zM131 -18 148 -2 139 -6zM296 1 313 15 301 10zM308 -2 319 0 328 13zM308 -2 328 13 313 15zM505 22 520 33 511 33zM540 23 556 42 543 36zM-3 -20 10 -6 4 -8zM16 -19 28 -18 35 -4zM118 -8 128 -7 134 7zM183 0 200 13 188 15zM195 2 202 1 211 18zM202 1 216 2 220 18zM251 5 268 23 256 20zM537 36 552 50 539 49zM556 42 565 42 571 51zM57 1 69 1 74 14zM87 4 109 19 92 17zM112 4 128 19 114 17zM341 30 350 30 360 45zM388 35 397 37 402 48zM418 35 427 37 436 53zM427 37 443 41 446 51zM240 28 257 46 243 42zM251 30 268 44 257 46zM270 34 284 37 286 48zM468 54 487 71 476 68zM480 55 498 69 487 71zM-20 17 -5 28 -16 31zM93 26 104 43 97 40zM110 31 128 46 116 41zM180 36 189 36 194 50zM268 44 282 62 274 61zM278 45 291 62 282 62zM563 76 578 92 566 88zM6 31 20 31 26 44zM86 40 99 56 88 53zM153 48 170 62 158 57zM252 55 259 59 265 69zM291 62 313 74 298 76zM643 97 657 98 664 112zM-17 43 -7 43 -1 53zM4 44 15 42 19 59zM298 76 315 89 305 85zM335 79 342 78 348 90zM363 83 377 82 381 95zM561 102 573 104 579 115zM249 83 259 81 268 96zM340 93 352 103 347 104zM-16 63 -1 78 -14 78zM-5 64 11 79 -1 78zM15 67 28 81 20 81zM48 73 65 84 52 88zM56 73 72 75 76 86zM220 89 242 106 226 104zM234 94 251 108 242 106zM391 109 402 122 395 121zM65 84 79 101 69 98zM76 86 86 90 94 100zM282 107 298 122 287 123zM373 121 382 121 389 134zM402 122 419 135 413 137zM25 96 45 109 30 107zM79 101 94 100 97 115zM112 106 132 117 118 115zM210 114 231 129 216 125zM311 123 330 140 320 136zM132 117 142 119 150 132zM231 129 241 129 245 143zM320 136 330 140 336 153zM371 144 382 146 387 158zM603 169 621 184 611 179zM615 168 629 169 633 181zM629 169 634 169 644 185zM589 179 598 177 603 190zM11 131 28 145 16 142zM151 147 170 157 162 159zM217 151 237 167 226 166zM228 153 239 156 245 169zM263 159 278 171 272 170zM69 150 83 153 87 165zM106 152 114 153 122 166zM178 161 194 162 201 175zM194 162 210 174 201 175zM226 166 237 167 239 182zM290 171 310 185 295 187zM-1 156 11 157 16 171zM-1 156 16 171 5 168zM144 169 155 170 160 182zM144 169 160 182 148 184zM221 175 229 176 238 189zM295 187 310 185 311 198zM452 200 465 215 457 215zM71 173 84 173 92 190zM95 174 112 191 100 187zM578 228 588 229 594 239zM32 181 51 197 38 196zM54 186 71 197 62 196zM112 191 125 204 119 204zM264 208 276 207 284 222zM475 230 494 241 481 243zM20 195 34 206 26 205zM171 208 185 212 191 222zM185 212 194 213 198 224zM246 218 258 218 263 233zM559 248 570 250 572 262zM0 204 13 206 20 217zM623 283 636 283 643 297zM92 239 105 252 96 251zM99 237 111 242 118 254zM122 243 137 243 138 258zM138 258 149 256 158 267zM315 275 331 288 324 289zM92 265 103 262 106 276zM654 321 665 323 671 336zM654 321 671 336 655 335zM571 327 586 342 573 337zM78 284 94 289 95 302zM522 331 534 348 524 348zM563 339 573 337 583 349zM573 337 586 342 591 351zM573 337 591 351 583 349zM609 340 620 341 623 354zM284 320 299 333 289 331zM449 337 465 352 454 351zM502 345 515 344 521 357zM502 345 521 357 510 354zM82 314 93 312 99 328zM436 348 452 362 439 362zM665 373 680 388 672 384zM381 357 395 359 404 369zM388 371 405 382 396 383zM374 377 386 381 388 392zM438 386 456 401 447 399zM486 393 499 403 488 405zM481 400 488 405 494 414zM586 413 606 428 594 426zM263 417 280 430 274 430zM666 471 679 473 687 487zM586 477 596 478 599 490zM237 453 248 455 257 468zM495 478 506 491 497 492zM310 473 328 484 318 482zM594 503 615 513 601 516zM269 491 281 492 286 508zM275 507 292 518 278 516zM401 531 419 543 403 545zM175 522 184 521 189 531zM161 529 174 543 167 542zM230 552 250 565 237 563zM376 566 390 577 379 579zM622 602 638 618 626 614zM295 582 308 583 316 596zM187 594 198 598 205 609zM234 600 240 603 250 615zM396 643 414 657 404 656zM128 628 139 626 143 638zM229 636 239 636 242 651zM382 652 393 653 396 665z'/><path fill='#70726f' d='M7 -105 18 -105 25 -92zM18 -105 38 -90 25 -92zM66 -99 73 -96 84 -84zM129 -92 140 -91 148 -80zM129 -92 148 -80 139 -80zM272 -76 289 -62 281 -66zM528 -49 536 -49 542 -37zM-7 -96 8 -80 0 -80zM16 -94 30 -80 22 -80zM257 -69 270 -68 275 -51zM257 -69 275 -51 266 -53zM325 -59 337 -59 338 -44zM337 -59 348 -59 351 -44zM337 -59 351 -44 338 -44zM521 -39 535 -36 537 -23zM-23 -84 -11 -85 -6 -70zM87 -72 106 -56 94 -59zM525 -25 543 -9 531 -13zM537 -23 552 -12 543 -9zM629 -14 638 -16 643 -3zM638 -16 652 -1 643 -3zM-6 -70 8 -56 -1 -56zM17 -69 35 -52 21 -52zM70 -60 81 -62 89 -49zM117 -57 128 -57 131 -42zM136 -55 150 -51 155 -41zM136 -55 155 -41 141 -43zM258 -41 277 -28 263 -31zM378 -30 393 -27 396 -14zM425 -25 436 -23 439 -10zM630 -1 643 -3 651 10zM-1 -56 15 -41 5 -42zM74 -46 96 -33 81 -38zM89 -49 99 -47 104 -34zM89 -49 104 -34 96 -33zM131 -42 141 -43 151 -26zM218 -34 235 -17 224 -20zM-14 -44 3 -31 -12 -34zM5 -42 15 -41 23 -32zM151 -26 159 -29 165 -17zM217 -19 230 -9 222 -10zM224 -20 235 -17 245 -7zM378 -5 393 -2 394 8zM499 10 514 7 518 25zM87 -23 97 -21 104 -8zM120 -19 139 -6 128 -7zM146 -16 156 -17 162 -1zM255 -4 267 -6 271 9zM274 -3 284 0 289 12zM636 36 651 37 656 48zM651 37 662 35 663 49zM74 -12 87 4 78 2zM96 -12 112 4 101 3zM195 2 211 18 200 13zM216 2 230 20 220 18zM260 7 271 9 278 22zM379 20 392 23 397 37zM392 23 405 22 410 34zM405 22 414 24 418 35zM414 24 426 23 427 37zM426 23 433 24 443 41zM480 29 491 31 494 46zM491 31 500 33 509 47zM-20 -11 -11 -7 -6 7zM-11 -7 5 6 -6 7zM4 -8 16 7 5 6zM78 2 92 17 82 14zM101 3 112 4 114 17zM188 15 200 13 204 25zM410 34 428 50 415 51zM443 41 459 52 446 51zM494 46 510 59 499 60zM529 46 539 49 545 62zM539 49 557 63 545 62zM609 57 622 70 611 70zM5 6 16 7 22 20zM30 6 38 10 46 23zM30 6 46 23 33 21zM92 17 109 19 110 31zM92 17 110 31 102 27zM183 24 196 25 201 37zM204 25 214 28 219 42zM263 33 270 34 278 45zM490 57 499 60 505 73zM533 60 545 62 554 76zM576 66 593 65 597 78zM11 20 22 20 28 34zM476 68 487 71 492 81zM632 83 643 97 632 96zM-5 28 15 42 4 44zM20 31 28 34 34 48zM104 43 116 41 122 57zM225 54 238 53 245 70zM259 59 274 61 276 72zM348 65 363 83 355 80zM358 70 377 82 363 83zM479 80 492 81 499 95zM534 89 554 98 542 98zM559 88 573 104 561 102zM589 90 609 106 598 106zM600 95 618 106 609 106zM34 48 44 48 54 62zM99 56 115 53 121 66zM170 62 187 75 171 74zM257 69 273 85 259 81zM554 98 572 117 559 112zM618 106 629 111 633 119zM19 59 36 72 25 72zM28 60 39 60 48 73zM28 60 48 73 36 72zM108 66 125 79 110 78zM162 72 181 87 169 84zM273 85 289 97 281 94zM484 104 491 107 498 121zM572 117 583 131 577 129zM590 118 600 119 605 129zM169 84 181 87 184 98zM302 98 312 98 318 115zM322 104 332 101 340 116zM365 105 382 121 373 121zM411 110 418 112 427 125zM457 114 470 129 463 130zM539 123 553 127 557 138zM39 83 61 97 45 99zM52 88 69 98 61 97zM86 90 99 92 101 104zM86 90 101 104 94 100zM215 101 226 104 232 116zM340 116 352 117 356 131zM-8 91 6 94 12 106zM101 104 112 106 118 115zM389 134 401 134 404 149zM666 160 673 161 682 178zM286 134 302 146 291 146zM447 153 465 166 454 163zM615 168 633 181 621 184zM92 124 109 143 100 142zM267 147 287 158 276 160zM302 146 321 162 309 161zM348 154 354 152 361 168zM491 171 505 181 492 179zM165 146 178 161 170 157zM321 162 333 179 324 178zM69 150 87 165 77 161zM83 153 94 152 96 164zM114 153 131 167 122 166zM151 157 162 159 167 172zM205 163 216 165 221 175zM201 175 214 190 207 186zM5 168 24 179 13 179zM214 190 226 191 233 202zM444 214 461 228 450 227zM-12 176 4 193 -4 189zM156 197 171 208 158 208zM680 252 696 254 697 265zM51 197 62 196 67 212zM78 213 89 213 94 224zM113 213 129 231 120 230zM409 244 418 250 425 258zM409 244 425 258 416 258zM465 252 474 254 478 269zM474 254 488 256 494 270zM637 273 651 270 655 286zM94 224 111 242 99 237zM104 228 122 243 111 242zM681 287 691 286 696 303zM137 243 149 256 138 258zM144 245 162 257 149 256zM482 289 493 293 495 304zM581 324 589 326 596 340zM581 324 596 340 586 342zM627 330 636 334 645 345zM94 289 108 303 95 302zM8 293 28 307 18 304zM84 298 101 314 93 312zM176 307 190 322 183 320zM396 329 402 333 414 344zM458 337 470 339 480 353zM470 339 483 340 489 354zM572 351 583 349 587 366zM289 331 306 346 293 345zM472 363 482 365 488 377zM518 370 526 368 530 383zM651 385 657 383 663 396zM73 337 90 349 78 346zM455 373 466 376 475 389zM374 377 388 392 380 391zM438 386 451 387 456 401zM451 387 459 388 465 403zM486 393 495 394 499 403zM51 358 59 361 67 372zM465 403 481 400 484 413zM526 406 541 419 530 422zM389 420 401 420 406 431zM458 424 466 425 474 439zM325 435 340 439 340 448zM560 475 578 489 567 484zM248 455 264 469 257 468zM269 454 283 455 289 469zM362 462 371 468 378 478zM656 498 673 509 660 509zM680 496 693 513 683 511zM355 474 367 478 370 489zM409 481 426 497 416 497zM477 488 484 489 492 501zM640 505 658 520 647 517zM583 510 590 516 600 528zM258 490 275 507 265 502zM269 491 286 508 275 507zM162 492 180 507 167 504zM286 508 294 508 300 520zM549 533 567 548 557 549zM-23 500 -14 499 -7 515zM341 538 359 553 344 549zM387 544 397 544 402 556zM310 547 332 559 319 561zM388 555 402 556 407 566zM343 560 355 575 348 576zM384 566 403 579 390 577zM527 582 538 580 543 596zM636 590 648 595 653 605zM127 576 136 578 145 592zM346 600 364 615 351 614zM394 617 411 630 405 629zM137 605 158 618 142 618zM205 609 222 625 214 621zM633 656 651 667 642 668zM234 622 246 624 247 640zM343 637 352 638 362 650zM386 641 396 643 404 656zM195 631 210 648 198 644zM229 636 242 651 232 647zM370 651 382 652 389 667zM382 652 396 665 389 667z'/><path fill='#717370' d='M7 -105 25 -92 16 -94zM51 -101 72 -88 58 -86zM84 -98 99 -97 104 -81zM425 -64 435 -58 444 -49zM-7 -96 1 -93 8 -80zM58 -86 77 -74 66 -73zM-11 -85 6 -69 -6 -70zM8 -80 22 -80 25 -65zM77 -74 87 -72 94 -59zM328 -49 338 -44 347 -34zM426 -36 447 -21 436 -23zM6 -69 17 -69 21 -52zM58 -64 74 -46 66 -50zM94 -59 106 -56 109 -45zM128 -57 136 -55 141 -43zM223 -44 239 -32 233 -32zM238 -45 244 -43 251 -32zM321 -34 333 -33 343 -19zM333 -33 347 -34 353 -19zM333 -33 353 -19 343 -19zM436 -23 448 -8 439 -10zM521 -16 538 -0 527 1zM585 -7 599 -4 607 7zM619 -5 636 11 625 11zM141 -43 155 -41 159 -29zM141 -43 159 -29 151 -26zM239 -32 260 -18 245 -20zM277 -28 286 -26 293 -11zM517 -1 533 14 522 12zM-5 -43 9 -31 3 -31zM70 -38 87 -23 77 -22zM124 -29 136 -30 146 -16zM235 -17 245 -20 255 -4zM410 2 431 12 418 12zM423 0 435 -1 439 14zM3 -31 9 -31 16 -19zM77 -22 87 -23 96 -12zM77 -22 96 -12 81 -9zM487 18 496 22 500 33zM59 -13 74 -12 78 2zM96 -12 104 -8 112 4zM289 12 301 10 308 27zM328 13 341 30 333 26zM433 24 449 26 450 39zM480 29 494 46 482 46zM543 36 563 53 552 50zM4 -8 10 -6 16 7zM46 -4 60 13 52 12zM69 1 82 14 74 14zM341 30 360 45 347 44zM539 49 552 50 557 63zM552 50 563 53 569 65zM552 50 569 65 557 63zM-16 5 -6 7 -1 19zM109 19 123 29 110 31zM159 23 170 21 180 36zM263 33 278 45 268 44zM569 65 582 81 572 80zM576 66 597 78 582 81zM-1 19 11 20 20 31zM-1 19 20 31 6 31zM22 20 39 35 28 34zM56 24 72 37 61 35zM70 24 86 40 72 37zM278 45 286 48 291 62zM286 48 307 61 291 62zM563 76 572 80 578 92zM572 80 582 81 589 90zM582 81 600 95 589 90zM6 31 26 44 15 42zM61 35 82 52 69 52zM225 54 245 70 235 66zM238 53 252 55 257 69zM252 55 265 69 257 69zM446 75 457 80 463 91zM457 80 472 80 478 91zM527 85 542 98 531 101zM534 89 549 85 554 98zM549 85 559 88 561 102zM566 88 578 92 587 103zM578 92 598 106 587 103zM600 95 613 95 618 106zM613 95 623 94 629 111zM-17 43 -1 53 -17 53zM26 44 34 48 39 60zM265 69 276 72 285 84zM276 72 290 75 293 85zM355 80 363 83 373 95zM355 80 373 95 358 91zM389 82 406 99 394 94zM453 90 463 91 471 105zM685 116 695 116 702 130zM63 62 78 76 72 75zM95 66 108 66 110 78zM293 85 312 98 302 98zM325 88 347 104 332 101zM-16 63 -5 64 -1 78zM36 72 48 73 52 88zM36 72 52 88 39 83zM78 76 91 76 99 92zM91 76 107 90 99 92zM125 79 133 83 142 93zM157 82 169 84 172 96zM169 84 184 98 172 96zM268 96 281 94 282 107zM302 98 318 115 306 110zM379 108 395 121 382 121zM-14 78 6 94 -8 91zM-1 78 11 79 16 95zM99 92 107 90 112 106zM415 124 427 125 430 136zM435 124 454 140 447 138zM6 94 18 106 12 106zM101 104 118 115 108 116zM124 105 134 105 142 119zM336 129 348 141 340 142zM419 135 430 136 440 149zM45 109 59 121 50 124zM63 112 75 111 84 126zM97 115 117 129 105 128zM307 138 325 152 312 149zM28 120 42 134 34 131zM39 123 50 124 53 135zM105 128 118 143 109 143zM117 129 128 131 134 142zM193 135 210 153 198 151zM267 147 278 146 287 158zM53 135 69 150 60 149zM321 162 329 166 333 179zM194 162 205 163 210 174zM360 179 369 180 375 194zM-24 152 -13 153 -8 167zM25 156 35 157 41 173zM35 157 43 157 52 171zM56 162 67 160 71 173zM122 166 136 182 125 181zM186 173 207 186 193 188zM288 182 295 187 300 199zM288 182 300 199 293 195zM452 200 463 203 465 215zM-8 167 13 179 3 181zM30 170 41 173 47 181zM61 171 71 173 75 189zM104 177 118 179 124 193zM160 182 175 199 166 198zM269 193 284 210 276 207zM578 228 594 239 581 242zM679 240 687 238 696 254zM430 225 439 226 447 238zM553 238 570 250 559 248zM62 196 78 213 67 212zM185 212 198 224 191 222zM194 213 204 214 211 227zM422 236 442 248 432 250zM468 242 488 256 474 254zM570 250 579 253 584 265zM67 212 83 225 75 223zM78 213 94 224 83 225zM143 219 153 219 164 234zM223 229 230 226 238 243zM418 250 436 259 425 258zM455 250 468 263 457 264zM465 252 478 269 468 263zM94 224 104 228 111 242zM219 236 226 238 236 253zM249 244 258 243 266 254zM655 286 670 284 675 299zM670 284 685 300 675 299zM552 310 571 327 557 325zM673 325 686 324 691 338zM-22 265 -11 266 -8 278zM106 276 127 289 115 288zM553 334 572 351 559 349zM586 342 603 353 591 351zM596 340 609 340 612 353zM84 298 95 302 101 314zM315 324 336 338 323 337zM546 347 566 363 554 360zM93 312 101 314 109 326zM146 318 163 332 151 331zM161 318 168 322 172 334zM299 333 314 337 319 348zM445 347 454 351 462 364zM480 353 489 354 497 365zM489 354 498 358 503 367zM530 358 541 362 550 374zM607 368 628 379 613 382zM419 361 432 372 420 372zM452 362 466 376 455 373zM462 364 476 376 466 376zM518 370 530 383 524 381zM675 400 691 414 684 411zM240 368 261 379 246 379zM432 387 447 399 437 396zM225 376 237 378 243 388zM356 388 377 402 362 404zM621 417 637 431 630 431zM102 374 112 378 119 390zM290 408 303 410 310 422zM355 413 372 418 377 431zM355 413 377 431 363 427zM428 437 443 437 448 448zM519 442 533 459 523 456zM685 459 702 477 691 473zM303 435 323 447 312 448zM458 449 467 449 477 465zM632 468 644 471 650 484zM511 470 524 482 514 483zM263 456 269 454 277 466zM324 473 332 475 339 488zM531 494 550 506 534 510zM640 505 652 509 658 520zM394 490 402 495 411 508zM489 512 501 527 492 526zM641 553 655 558 656 570zM164 518 181 534 172 531zM521 567 538 580 527 582zM211 548 220 551 223 559zM384 566 397 569 403 579zM618 588 626 591 631 603zM636 590 653 605 645 604zM4 537 24 552 12 549zM230 573 245 576 251 589zM230 573 251 589 236 588zM368 602 382 601 383 617zM392 603 405 605 406 618zM632 627 645 631 650 645zM133 587 145 592 152 602zM277 606 291 617 284 615zM128 602 142 618 137 616zM372 627 386 641 374 640zM381 626 392 630 396 643zM526 643 538 656 529 655zM142 618 164 628 149 627zM139 626 157 643 143 638zM170 628 188 645 178 641zM305 646 324 660 312 658zM370 651 389 667 376 665z'/><path fill='#727471' d='M18 -105 34 -101 38 -90zM51 -101 66 -99 72 -88zM66 -99 84 -84 72 -88zM329 -73 342 -72 348 -59zM528 -49 542 -37 535 -36zM536 -49 551 -47 552 -36zM593 -43 601 -42 611 -32zM90 -84 104 -81 107 -68zM139 -80 148 -80 154 -64zM139 -80 154 -64 144 -64zM148 -80 165 -65 154 -64zM413 -48 420 -48 426 -36zM521 -39 537 -23 525 -25zM535 -36 550 -26 537 -23zM618 -30 638 -16 629 -14zM-11 -85 0 -80 6 -69zM0 -80 8 -80 17 -69zM22 -80 35 -66 25 -65zM30 -80 43 -79 50 -63zM77 -74 94 -59 81 -62zM252 -55 272 -40 258 -41zM288 -54 297 -49 299 -39zM288 -54 299 -39 291 -37zM376 -41 393 -27 378 -30zM415 -38 426 -36 436 -23zM525 -25 537 -23 543 -9zM596 -20 604 -16 607 -7zM-20 -73 -1 -56 -12 -57zM216 -46 233 -32 218 -34zM282 -42 298 -24 286 -26zM378 -30 396 -14 382 -17zM531 -13 547 4 538 -0zM585 -7 607 7 596 8zM652 -1 668 12 660 11zM119 -45 131 -42 136 -30zM119 -45 136 -30 124 -29zM218 -34 233 -32 235 -17zM233 -32 245 -20 235 -17zM318 -25 334 -10 326 -12zM373 -17 382 -17 393 -2zM431 -11 439 -10 446 2zM572 4 583 4 588 19zM613 10 625 11 633 21zM-5 -43 5 -42 9 -31zM81 -38 97 -21 87 -23zM245 -20 267 -6 255 -4zM326 -12 342 2 328 1zM588 19 601 19 603 33zM664 26 675 27 680 39zM-22 -32 -12 -34 -3 -20zM66 -23 81 -9 74 -12zM97 -21 108 -22 118 -8zM146 -16 162 -1 148 -2zM209 -8 222 -10 224 2zM222 -10 238 8 224 2zM431 12 449 26 433 24zM439 14 450 13 457 27zM439 14 457 27 449 26zM496 22 511 33 500 33zM531 22 543 36 537 36zM183 0 195 2 200 13zM335 14 347 17 350 30zM379 20 397 37 388 35zM449 26 462 43 450 39zM565 42 578 41 585 54zM112 4 121 5 128 19zM121 5 134 7 137 21zM278 22 292 34 284 37zM-6 7 5 6 11 20zM-6 7 11 20 -1 19zM270 34 286 48 278 45zM316 40 324 40 333 52zM324 40 345 55 333 52zM428 50 436 53 444 63zM524 60 533 60 540 76zM533 60 554 76 540 76zM601 71 618 81 609 80zM33 21 50 38 39 35zM102 27 110 31 116 41zM167 38 183 51 174 50zM311 51 329 66 313 64zM540 76 559 88 549 85zM597 78 609 80 613 95zM652 84 667 101 657 98zM-16 31 -5 28 4 44zM28 34 39 35 44 48zM86 40 97 40 99 56zM472 80 486 95 478 91zM527 85 534 89 542 98zM566 88 587 103 573 104zM667 101 677 101 685 116zM69 52 82 52 87 64zM235 66 249 83 240 82zM245 70 259 81 249 83zM313 74 324 77 325 88zM363 83 381 95 373 95zM377 82 389 82 394 94zM418 84 431 88 440 99zM431 88 448 101 440 99zM542 98 554 98 559 112zM542 98 559 112 545 112zM561 102 579 115 572 117zM609 106 625 121 611 121zM259 81 273 85 281 94zM340 93 348 90 352 103zM440 99 448 101 457 114zM484 104 498 121 485 119zM590 118 605 129 595 128zM48 73 56 73 65 84zM103 79 110 78 118 91zM258 93 274 106 261 105zM509 120 518 123 529 133zM11 79 20 81 25 96zM107 90 118 91 124 105zM504 132 518 146 507 148zM591 144 606 158 598 155zM25 96 35 95 45 109zM210 114 224 115 231 129zM245 120 256 121 264 134zM277 123 287 123 296 136zM378 131 389 134 395 147zM466 140 480 155 474 154zM645 158 661 171 646 174zM654 162 666 160 668 174zM654 162 668 174 661 171zM12 106 18 106 28 120zM12 106 28 120 17 121zM231 129 245 143 235 144zM253 131 267 147 256 142zM286 134 296 136 302 146zM404 149 423 160 409 162zM480 155 493 154 502 171zM507 160 513 158 519 172zM591 165 611 179 598 177zM39 123 53 135 42 134zM256 142 267 147 276 160zM302 146 312 149 321 162zM336 153 354 168 343 166zM369 157 387 170 371 169zM509 172 519 172 530 185zM611 179 621 184 629 194zM483 178 492 179 500 194zM128 156 135 158 144 169zM135 158 151 157 155 170zM237 167 256 180 239 182zM305 172 314 173 319 189zM632 208 651 221 640 223zM67 160 77 161 84 173zM131 167 148 184 136 182zM186 173 201 175 207 186zM331 189 339 188 347 202zM375 194 391 206 378 206zM30 170 47 181 32 181zM84 173 95 174 100 187zM238 189 245 191 252 204zM311 198 325 200 330 215zM457 215 475 230 461 228zM655 238 669 247 660 249zM667 238 679 240 680 252zM3 181 13 179 20 195zM32 181 47 181 51 197zM244 204 258 218 246 218zM264 208 284 222 272 220zM541 235 553 238 559 248zM594 239 614 253 603 256zM81 200 99 214 89 213zM92 203 108 201 113 213zM108 201 122 215 113 213zM119 204 125 204 132 217zM138 205 147 206 153 219zM99 214 113 213 120 230zM132 217 143 219 150 234zM285 236 296 235 303 250zM442 248 457 264 445 261zM627 271 637 273 648 285zM627 271 648 285 636 283zM141 229 156 247 144 245zM284 246 299 262 288 258zM294 244 303 250 310 259zM538 274 552 288 540 283zM1 230 18 245 5 242zM144 245 156 247 162 257zM266 254 276 255 282 271zM299 262 310 259 315 275zM375 268 387 270 393 282zM649 299 663 297 669 313zM663 297 675 299 676 310zM-5 241 5 242 13 254zM327 273 344 287 331 288zM627 304 634 306 639 320zM669 313 676 310 686 324zM13 254 28 256 28 270zM92 265 106 276 99 274zM103 262 118 277 106 276zM187 273 198 276 208 288zM301 284 315 300 308 299zM495 304 517 320 501 318zM565 312 572 312 581 324zM639 320 655 335 645 333zM-11 266 -1 263 2 280zM-1 263 11 265 12 280zM106 276 118 277 127 289zM546 322 563 339 553 334zM612 328 627 330 629 343zM636 334 651 346 645 345zM78 284 95 302 84 298zM409 321 429 337 416 334zM543 333 559 349 546 347zM586 342 596 340 603 353zM596 340 612 353 603 353zM8 293 19 294 28 307zM95 302 116 315 101 314zM-15 300 -4 304 0 313zM510 354 521 357 526 368zM530 358 550 374 539 373zM541 362 554 360 561 372zM623 369 640 384 628 379zM665 373 677 374 680 388zM688 373 703 390 694 387zM-6 326 7 329 10 339zM432 372 446 373 451 387zM503 379 510 379 517 396zM272 370 284 369 290 382zM328 376 344 377 349 387zM396 383 405 382 416 397zM396 383 416 397 403 393zM432 387 438 386 447 399zM495 394 513 408 499 403zM597 403 605 401 613 419zM647 408 658 408 666 424zM118 365 134 378 120 379zM416 397 422 394 429 408zM422 394 437 396 439 409zM531 406 542 409 549 421zM249 403 263 417 255 414zM372 418 378 414 385 430zM668 449 685 459 672 460zM675 447 693 462 685 459zM331 425 346 436 340 439zM443 437 451 436 458 449zM606 453 621 466 613 468zM312 436 325 435 332 449zM601 467 617 479 609 476zM340 448 354 451 362 462zM367 454 385 469 371 468zM617 479 630 481 634 495zM219 447 235 461 225 464zM470 473 479 479 484 489zM521 491 531 494 534 510zM541 495 558 511 550 506zM610 501 618 504 624 516zM17 452 36 466 23 467zM339 488 351 487 353 500zM525 507 541 523 528 518zM519 518 528 518 535 531zM265 502 275 507 278 516zM360 515 374 517 380 527zM384 515 401 531 389 532zM61 493 68 495 78 509zM408 531 426 548 419 543zM164 518 175 522 181 534zM376 542 388 555 378 553zM397 544 403 545 414 555zM573 561 586 573 575 574zM636 568 648 571 656 581zM324 548 343 560 332 559zM337 547 344 549 350 562zM620 579 636 590 626 591zM350 562 365 561 367 577zM376 566 384 566 390 577zM397 569 407 566 412 583zM397 569 412 583 403 579zM184 558 191 560 198 573zM223 559 245 576 230 573zM348 576 355 575 366 586zM379 579 394 590 387 588zM390 577 405 593 394 590zM144 566 159 578 152 577zM175 571 187 570 196 583zM198 573 209 571 215 585zM616 615 632 627 622 627zM136 578 152 577 153 593zM196 583 202 584 208 598zM225 586 236 588 240 603zM291 595 306 594 311 610zM346 600 359 598 364 615zM368 602 383 617 377 613zM382 601 392 603 394 617zM177 595 192 610 185 605zM198 598 216 609 205 609zM342 613 358 626 349 623zM618 638 633 656 621 652zM192 610 214 621 200 621zM227 614 237 611 246 624zM237 611 257 629 246 624zM381 626 396 643 386 641zM392 630 405 629 409 643zM137 616 142 618 149 627zM186 620 200 621 207 636zM200 621 214 621 219 634zM265 627 275 631 280 642zM275 631 290 631 292 643zM374 640 393 653 382 652zM120 623 135 637 125 640zM393 653 404 656 412 667zM527 669 544 683 528 680z'/><path fill='#737572' d='M-15 -106 -4 -106 1 -93zM-4 -106 7 -105 16 -94zM-4 -106 16 -94 1 -93zM99 -97 113 -81 104 -81zM231 -81 246 -66 233 -69zM342 -72 347 -70 354 -56zM425 -64 444 -49 436 -48zM84 -84 90 -84 101 -69zM148 -80 159 -75 165 -65zM212 -69 226 -71 231 -58zM436 -48 444 -49 453 -34zM154 -64 169 -52 157 -53zM231 -58 244 -43 238 -45zM252 -55 266 -53 272 -40zM305 -50 315 -49 321 -34zM328 -49 347 -34 333 -33zM338 -44 351 -44 355 -30zM338 -44 355 -30 347 -34zM386 -43 395 -39 401 -27zM-6 -70 6 -69 8 -56zM238 -45 251 -32 239 -32zM314 -34 329 -21 318 -25zM413 -25 425 -25 431 -11zM413 -25 431 -11 416 -11zM436 -23 447 -21 448 -8zM-12 -57 5 -42 -5 -43zM99 -47 116 -34 104 -34zM233 -32 239 -32 245 -20zM307 -25 326 -12 312 -12zM329 -21 343 -19 347 -6zM382 -17 400 -1 393 -2zM431 -11 446 2 435 -1zM527 1 538 -0 544 11zM547 4 566 16 556 15zM607 7 623 19 613 18zM-14 -44 -5 -43 3 -31zM70 -38 81 -38 87 -23zM96 -33 108 -22 97 -21zM136 -30 151 -26 156 -17zM312 -12 326 -12 328 1zM334 -10 347 -6 351 5zM334 -10 351 5 342 2zM579 17 588 19 594 31zM643 25 656 26 662 35zM643 25 662 35 651 37zM-12 -34 3 -31 5 -20zM3 -31 16 -19 5 -20zM97 -21 118 -8 104 -8zM120 -19 131 -18 139 -6zM177 -14 186 -14 195 2zM267 -6 274 -3 284 13zM474 20 487 18 491 31zM505 22 518 25 520 33zM651 37 663 49 656 48zM-3 -20 5 -20 10 -6zM81 -9 101 3 87 4zM313 15 328 13 333 26zM328 13 335 14 341 30zM357 17 373 34 366 31zM371 21 379 20 388 35zM491 31 509 47 494 46zM556 42 571 51 563 53zM87 4 101 3 109 19zM167 11 180 10 183 24zM350 30 366 31 367 44zM443 41 450 39 459 52zM450 39 462 43 468 54zM482 46 499 60 490 57zM516 48 529 46 533 60zM529 46 545 62 533 60zM593 54 611 70 601 71zM52 12 70 24 56 24zM128 19 137 21 144 34zM196 25 204 25 210 42zM302 39 316 40 323 54zM428 50 444 63 429 63zM499 60 518 74 505 73zM524 60 540 76 528 73zM656 76 664 73 676 89zM22 20 33 21 39 35zM56 24 70 24 72 37zM131 33 144 34 153 48zM144 34 155 35 161 45zM243 42 257 46 259 59zM311 51 323 54 329 66zM498 69 505 73 513 85zM498 69 513 85 504 85zM572 80 589 90 578 92zM20 31 34 48 26 44zM28 34 44 48 34 48zM39 35 50 38 56 50zM39 35 56 50 44 48zM72 37 88 53 82 52zM104 43 122 57 115 53zM274 61 282 62 290 75zM307 61 313 64 324 77zM381 68 397 85 389 82zM439 74 453 90 445 90zM578 92 589 90 598 106zM589 90 600 95 609 106zM677 101 692 103 695 116zM677 101 695 116 685 116zM4 44 19 59 9 54zM290 75 298 76 305 85zM522 96 539 112 525 112zM554 98 561 102 572 117zM587 103 598 106 600 119zM618 106 633 119 625 121zM671 113 685 116 688 126zM-17 53 -1 53 1 67zM39 60 54 62 56 73zM39 60 56 73 48 73zM54 62 63 62 72 75zM54 62 72 75 56 73zM249 83 268 96 258 93zM259 81 281 94 268 96zM381 95 400 109 391 109zM559 112 572 117 577 129zM559 112 577 129 565 128zM25 72 36 72 39 83zM234 94 244 92 251 108zM244 92 258 93 261 105zM418 112 431 113 435 124zM457 114 464 114 470 129zM529 125 549 136 536 134zM52 88 65 84 69 98zM131 93 142 93 146 106zM242 106 256 121 245 120zM318 115 336 129 326 126zM361 119 378 131 368 129zM415 124 430 136 419 135zM571 141 585 152 577 151zM61 97 69 98 75 111zM94 100 101 104 108 116zM112 106 124 105 132 117zM232 116 245 120 253 131zM478 141 493 154 480 155zM490 145 496 145 507 160zM507 148 518 146 525 161zM629 160 645 158 646 174zM629 160 646 174 634 169zM645 158 654 162 661 171zM-3 106 17 121 5 115zM30 107 50 124 39 123zM108 116 128 131 117 129zM142 119 151 118 156 133zM207 126 224 142 211 140zM253 131 264 134 267 147zM307 138 320 136 325 152zM414 147 429 151 436 162zM535 160 556 175 546 172zM591 165 603 169 611 179zM150 132 156 133 165 146zM150 132 165 146 151 147zM211 140 228 153 217 151zM291 146 309 161 295 158zM369 157 381 158 387 170zM409 162 430 175 415 173zM502 171 509 172 518 184zM23 134 34 131 39 146zM34 131 42 134 50 146zM393 171 404 172 412 185zM551 187 561 189 565 202zM3 140 16 142 25 156zM94 152 106 152 110 164zM94 152 110 164 96 164zM128 156 144 169 131 167zM245 169 259 168 261 183zM390 184 409 199 398 196zM399 184 412 185 420 199zM543 201 561 213 551 214zM565 202 585 215 573 213zM577 203 587 205 594 217zM67 160 84 173 71 173zM77 161 87 165 95 174zM409 199 420 199 424 212zM5 168 16 171 24 179zM424 212 436 212 439 226zM547 224 562 237 553 238zM175 199 194 213 185 212zM419 222 430 225 436 238zM527 232 546 250 537 248zM594 239 609 242 614 253zM609 242 618 243 623 258zM-18 188 -4 189 0 204zM-4 189 4 193 13 206zM4 193 26 205 13 206zM38 196 51 197 55 208zM204 214 223 229 211 227zM546 250 561 264 551 259zM654 259 670 276 663 275zM153 219 165 219 173 233zM165 219 179 223 181 234zM308 235 323 238 329 251zM-16 216 -6 216 1 230zM60 223 75 223 79 237zM129 231 144 245 137 243zM238 243 249 244 257 257zM284 246 294 244 299 262zM405 259 416 258 418 274zM436 259 445 261 455 276zM571 278 584 288 575 289zM613 278 630 294 620 294zM648 285 663 297 649 299zM670 284 681 287 685 300zM681 287 696 303 685 300zM15 228 30 246 18 245zM130 254 144 270 137 266zM414 283 424 285 432 300zM502 296 513 292 519 310zM627 304 639 320 629 321zM5 256 21 267 11 265zM232 278 251 294 241 292zM277 284 288 282 295 297zM466 302 478 302 482 316zM486 302 501 318 494 317zM609 316 619 317 627 330zM619 317 636 334 627 330zM-11 266 2 280 -8 278zM21 267 39 282 26 279zM99 274 115 288 101 291zM557 325 573 337 563 339zM571 327 581 324 586 342zM627 330 645 345 629 343zM636 334 645 333 651 346zM268 305 282 310 284 320zM268 305 284 320 274 321zM409 321 422 321 429 337zM553 334 563 339 572 351zM19 294 36 304 28 307zM95 302 108 303 116 315zM315 324 327 326 336 338zM396 329 414 344 400 345zM492 340 502 345 510 354zM524 348 534 348 541 362zM559 349 572 351 576 365zM659 359 668 362 677 374zM67 312 90 325 74 325zM414 344 430 360 419 361zM436 348 445 347 452 362zM480 353 497 365 482 365zM677 374 694 387 680 388zM419 361 430 360 432 372zM455 373 475 389 459 388zM688 399 703 413 691 414zM57 344 63 345 71 361zM230 363 246 379 237 378zM405 382 419 386 422 394zM550 398 565 411 558 412zM582 400 598 413 586 413zM647 408 666 424 657 420zM349 387 362 404 353 400zM380 391 388 392 398 404zM586 413 598 413 606 428zM613 419 630 431 618 429zM-21 360 -6 375 -13 373zM574 426 586 426 590 439zM606 428 618 429 625 443zM258 403 275 419 263 417zM270 404 285 417 275 419zM280 405 290 408 301 422zM378 414 389 420 399 431zM590 439 603 439 606 453zM275 419 285 417 295 431zM363 427 380 440 373 440zM377 431 385 430 392 443zM377 431 392 443 380 440zM399 431 406 431 414 447zM451 436 467 449 458 449zM615 454 626 456 632 468zM647 459 664 460 666 471zM672 460 691 473 679 473zM414 447 428 448 429 460zM436 447 448 448 450 462zM644 471 663 483 650 484zM679 473 691 473 697 487zM2 414 14 414 19 427zM290 445 299 444 307 457zM467 461 477 465 479 479zM467 461 479 479 470 473zM637 480 656 498 648 495zM230 452 237 453 245 464zM237 453 257 468 245 464zM248 455 263 456 264 469zM263 456 277 466 264 469zM341 460 355 474 346 476zM503 477 514 483 521 491zM556 484 576 501 566 498zM302 472 318 482 304 483zM332 475 346 476 351 487zM521 491 534 510 525 507zM583 500 594 503 601 516zM492 501 511 515 496 518zM217 498 236 511 226 514zM265 502 278 516 271 517zM275 507 286 508 292 518zM360 515 380 527 370 526zM450 522 467 536 453 538zM581 536 590 541 596 552zM581 536 596 552 586 550zM236 511 247 513 255 527zM257 516 271 517 272 531zM641 553 656 570 648 571zM-0 499 10 502 18 514zM184 521 202 535 189 531zM328 536 344 549 337 547zM419 543 426 548 436 559zM613 565 629 567 634 580zM359 553 368 553 376 566zM368 553 378 553 384 566zM368 553 384 566 376 566zM388 555 407 566 397 569zM503 564 513 569 514 578zM197 548 211 548 212 558zM618 588 631 603 622 602zM137 553 152 566 144 566zM367 577 379 579 387 588zM520 591 536 607 529 606zM198 573 215 585 202 584zM373 590 387 588 392 603zM373 590 392 603 382 601zM387 588 394 590 405 605zM529 606 542 622 534 620zM152 577 166 594 153 593zM196 583 208 598 198 598zM225 586 240 603 234 600zM236 588 256 603 240 603zM382 601 394 617 383 617zM133 587 152 602 137 605zM342 613 351 614 358 626zM562 635 575 633 579 649zM575 633 591 648 579 649zM185 605 200 621 186 620zM192 610 205 609 214 621zM349 623 362 636 352 638zM372 627 381 626 386 641zM633 656 645 654 651 667zM645 654 663 668 651 667zM-20 596 -8 598 -6 614zM123 615 137 616 139 626zM137 616 149 627 139 626zM142 618 158 618 164 628zM222 625 234 622 239 636zM374 640 386 641 393 653zM396 643 409 643 414 657zM128 628 143 638 135 637zM139 626 149 627 157 643zM207 636 219 648 210 648zM393 653 412 667 396 665zM559 673 568 671 576 683zM637 678 647 681 651 695z'/><path fill='#747673' d='M-15 -106 1 -93 -7 -96zM209 -82 216 -81 226 -71zM329 -73 348 -59 337 -59zM342 -72 354 -56 348 -59zM517 -51 528 -49 535 -36zM536 -49 552 -36 542 -37zM601 -42 617 -40 618 -30zM601 -42 618 -30 611 -32zM-17 -97 0 -80 -11 -85zM1 -93 22 -80 8 -80zM25 -92 43 -79 30 -80zM84 -84 101 -69 87 -72zM90 -84 107 -68 101 -69zM379 -54 391 -53 395 -39zM420 -48 436 -48 440 -37zM436 -48 453 -34 440 -37zM585 -31 604 -16 596 -20zM601 -33 611 -32 616 -17zM601 -33 616 -17 604 -16zM618 -30 632 -28 638 -16zM0 -80 17 -69 6 -69zM87 -72 101 -69 106 -56zM121 -67 133 -68 136 -55zM121 -67 136 -55 128 -57zM144 -64 157 -53 150 -51zM426 -36 440 -37 447 -21zM568 -19 581 -20 585 -7zM604 -16 616 -17 619 -5zM616 -17 629 -14 630 -1zM81 -62 99 -47 89 -49zM94 -59 109 -45 99 -47zM282 -42 291 -37 298 -24zM299 -39 314 -34 318 -25zM321 -34 343 -19 329 -21zM599 -4 607 -7 613 10zM652 -1 663 2 668 12zM-1 -56 8 -56 15 -41zM195 -38 217 -19 203 -24zM251 -32 263 -31 272 -14zM307 -25 318 -25 326 -12zM373 -17 393 -2 378 -5zM382 -17 396 -14 400 -1zM439 -10 455 5 446 2zM558 4 579 17 566 16zM660 11 675 27 664 26zM116 -34 124 -29 131 -18zM203 -24 222 -10 209 -8zM217 -19 224 -20 230 -9zM326 -12 334 -10 342 2zM455 5 474 20 459 17zM588 19 603 33 594 31zM296 1 308 -2 313 15zM394 8 406 12 414 24zM550 26 565 42 556 42zM559 27 578 41 565 42zM104 -8 121 5 112 4zM202 1 220 18 211 18zM284 13 289 12 300 25zM414 24 427 37 418 35zM520 33 539 49 529 46zM578 41 591 42 593 54zM612 45 621 48 631 60zM656 48 663 49 672 65zM69 1 78 2 82 14zM144 6 156 9 159 23zM211 18 227 29 214 28zM366 31 373 34 378 44zM516 48 533 60 524 60zM585 54 601 71 593 65zM672 65 691 77 676 75zM38 10 52 12 56 24zM38 10 56 24 46 23zM114 17 131 33 123 29zM196 25 210 42 201 37zM415 51 428 50 429 63zM446 51 459 52 464 67zM459 52 468 54 476 68zM459 52 476 68 464 67zM510 59 528 73 518 74zM545 62 557 63 563 76zM593 65 601 71 609 80zM622 70 642 83 632 83zM664 73 676 75 686 91zM46 23 56 24 61 35zM46 23 61 35 50 38zM70 24 79 26 86 40zM93 26 102 27 104 43zM102 27 116 41 104 43zM131 33 153 48 139 44zM243 42 259 59 252 55zM268 44 278 45 282 62zM345 55 352 57 358 70zM455 67 464 67 472 80zM505 73 518 74 527 85zM505 73 527 85 513 85zM528 73 549 85 534 89zM597 78 613 95 600 95zM642 83 652 84 657 98zM676 89 686 91 692 103zM61 35 72 37 82 52zM313 64 335 79 324 77zM368 68 389 82 377 82zM415 74 427 75 431 88zM415 74 431 88 418 84zM657 98 671 113 664 112zM-7 43 4 44 9 54zM-7 43 9 54 -1 53zM82 52 88 53 95 66zM88 53 99 56 108 66zM136 59 146 56 150 71zM290 75 305 85 293 85zM453 90 471 105 459 105zM499 95 513 109 501 110zM76 64 87 64 91 76zM87 64 103 79 91 76zM315 89 325 88 332 101zM315 89 332 101 322 104zM358 91 379 108 365 105zM545 112 559 112 565 128zM545 112 565 128 553 127zM145 85 161 97 154 98zM281 94 293 109 282 107zM352 103 373 121 361 119zM464 114 477 119 482 132zM477 119 492 134 482 132zM107 90 124 105 112 106zM282 107 293 109 298 122zM318 115 327 112 336 129zM435 124 450 128 454 140zM470 129 490 145 478 141zM482 132 496 145 490 145zM616 144 623 144 629 160zM670 148 684 166 673 161zM35 95 56 108 45 109zM124 105 142 119 132 117zM336 129 346 129 348 141zM544 149 559 164 548 162zM565 150 577 151 584 167zM622 157 634 169 629 169zM108 116 118 115 128 131zM118 115 139 131 128 131zM199 124 207 126 211 140zM493 154 507 160 509 172zM584 167 598 177 589 179zM-7 114 11 131 1 127zM92 124 105 128 109 143zM211 140 224 142 228 153zM381 158 387 158 393 171zM442 164 463 178 450 174zM491 171 502 171 505 181zM563 178 574 179 582 192zM563 178 582 192 569 188zM589 179 603 190 596 192zM1 127 11 131 16 142zM23 134 39 146 28 145zM42 134 60 149 50 146zM63 137 76 135 83 153zM118 143 135 158 128 156zM173 148 184 147 194 162zM184 147 205 163 194 162zM210 153 226 166 216 165zM239 156 253 157 259 168zM393 171 412 185 399 184zM582 192 596 192 598 206zM-7 140 3 140 11 157zM39 146 50 146 56 162zM83 153 96 164 87 165zM162 159 170 157 174 173zM205 163 221 175 210 174zM216 165 229 176 221 175zM456 191 474 203 463 203zM11 157 30 170 16 171zM77 161 95 174 84 173zM87 165 96 164 104 177zM229 176 239 182 245 191zM229 176 245 191 238 189zM295 187 311 198 300 199zM409 199 424 212 416 212zM496 208 505 206 511 220zM541 212 559 225 547 224zM41 173 52 171 54 186zM118 179 133 195 124 193zM125 181 136 182 144 194zM125 181 144 194 133 195zM170 187 181 184 190 198zM181 184 196 200 190 198zM226 191 238 189 244 204zM278 196 293 195 299 212zM278 196 299 212 284 210zM399 211 419 222 406 220zM424 212 439 226 430 225zM3 181 20 195 4 193zM210 203 221 203 228 214zM252 204 272 220 258 218zM361 218 375 218 379 232zM419 222 436 238 422 236zM430 225 447 238 436 238zM439 226 450 227 461 241zM572 237 581 242 588 252zM31 193 38 196 47 208zM92 203 113 213 99 214zM194 213 211 227 198 224zM272 220 284 222 285 236zM272 220 285 236 275 232zM305 225 323 238 308 235zM461 241 474 254 465 252zM468 242 481 243 488 256zM500 243 515 247 517 256zM515 247 522 246 529 257zM537 248 546 250 551 259zM559 248 572 262 561 264zM579 253 588 252 593 266zM636 259 643 257 651 270zM667 260 675 260 686 275zM-20 200 -6 216 -16 216zM47 208 55 208 60 223zM55 208 75 223 60 223zM89 213 99 214 104 228zM165 219 181 234 173 233zM179 223 193 237 181 234zM223 229 238 243 226 238zM296 235 315 248 303 250zM517 256 529 257 538 274zM617 271 636 283 623 283zM369 256 379 254 387 270zM369 256 387 270 375 268zM425 258 443 274 429 273zM571 278 581 278 584 288zM602 281 620 294 607 295zM655 286 675 299 663 297zM68 236 79 237 84 249zM362 267 382 280 371 279zM630 294 643 297 645 310zM643 297 649 299 658 308zM663 297 676 310 669 313zM675 299 685 300 691 315zM685 300 701 314 691 315zM38 244 59 258 47 258zM96 251 105 252 112 267zM351 276 367 289 357 290zM268 279 283 295 272 296zM478 302 486 302 494 317zM486 302 495 304 501 318zM21 267 28 270 39 282zM482 316 497 329 489 330zM600 327 620 341 609 340zM255 304 274 321 264 316zM282 310 290 309 296 322zM543 333 553 334 559 349zM19 294 33 294 36 304zM264 316 274 321 276 330zM284 320 296 322 299 333zM382 333 400 345 390 343zM449 337 458 337 465 352zM492 340 510 354 498 358zM637 359 656 372 639 371zM648 357 659 359 665 373zM2 301 19 320 11 316zM67 312 82 314 90 325zM134 316 146 318 151 331zM314 337 323 337 330 350zM445 347 462 364 452 362zM0 313 19 331 7 329zM273 342 285 343 288 357zM285 343 293 345 304 358zM561 372 578 387 563 389zM640 384 651 385 654 397zM640 384 654 397 645 395zM651 385 663 396 654 397zM657 383 675 400 663 396zM192 349 212 364 196 361zM202 349 213 348 218 364zM315 358 328 376 318 375zM322 361 336 364 344 377zM348 365 355 367 365 379zM415 372 432 387 419 386zM240 368 252 366 261 379zM475 389 486 393 488 405zM582 400 597 403 598 413zM237 378 246 379 256 392zM261 379 274 394 263 393zM416 397 429 408 417 407zM422 394 439 409 429 408zM465 403 484 413 471 413zM513 408 526 406 530 422zM531 406 549 421 541 419zM88 372 107 388 95 388zM211 385 221 389 229 402zM300 397 316 412 303 410zM333 402 343 399 345 412zM484 413 501 431 491 429zM594 426 610 442 603 439zM686 451 703 463 693 462zM241 414 255 414 263 430zM342 425 359 437 346 436zM428 437 448 448 436 447zM474 439 494 452 481 454zM508 445 523 456 511 457zM519 442 529 444 533 459zM-3 399 6 401 14 414zM19 405 30 403 34 418zM39 404 55 422 45 421zM215 425 232 440 221 439zM346 436 359 437 367 454zM359 437 373 440 377 454zM401 445 421 458 409 455zM414 447 429 460 421 458zM654 470 673 484 663 483zM679 473 697 487 687 487zM23 417 34 418 39 429zM477 465 495 478 479 479zM560 475 572 474 578 489zM687 487 703 498 688 500zM470 473 484 489 477 488zM567 484 583 500 576 501zM680 496 688 500 693 513zM264 469 286 482 272 482zM310 473 324 473 328 484zM355 474 370 489 363 487zM367 478 384 491 370 489zM462 489 484 502 470 499zM30 454 43 458 45 467zM293 482 304 483 314 497zM246 488 265 502 249 504zM476 511 492 526 480 524zM541 523 560 533 549 533zM607 527 623 540 615 538zM650 531 661 532 672 547zM661 532 682 547 672 547zM162 492 174 492 180 507zM394 517 408 531 401 531zM438 523 450 522 453 538zM450 522 462 525 467 536zM462 525 470 524 475 539zM513 529 532 542 520 542zM535 531 557 549 545 543zM660 545 674 562 661 558zM193 506 205 522 194 524zM320 524 341 538 328 536zM389 532 403 545 397 544zM532 542 546 558 541 555zM579 547 593 561 585 560zM586 550 607 566 593 561zM67 508 78 509 84 524zM341 538 349 536 359 553zM376 542 387 544 388 555zM426 548 437 545 444 559zM-7 515 8 512 11 529zM36 516 52 520 57 529zM36 516 57 529 45 529zM161 529 172 531 174 543zM290 546 301 543 308 557zM378 553 388 555 397 569zM197 548 212 558 204 561zM514 578 527 582 533 596zM-14 536 -3 553 -13 551zM107 549 124 565 112 560zM124 551 144 566 131 564zM137 553 146 552 152 566zM146 552 163 570 152 566zM204 561 212 558 220 571zM294 566 303 570 308 583zM303 570 310 570 322 586zM335 572 348 576 355 586zM367 577 387 588 373 590zM390 577 403 579 405 593zM568 596 581 610 574 609zM575 597 596 614 581 610zM-19 547 -13 551 -4 560zM340 585 355 586 359 598zM394 590 405 593 416 608zM515 604 529 606 534 620zM136 578 153 593 145 592zM281 593 291 595 297 608zM392 603 406 618 394 617zM567 622 583 635 575 633zM145 592 162 603 152 602zM177 595 187 594 192 610zM187 594 205 609 192 610zM222 601 237 611 227 614zM297 608 311 610 317 619zM351 614 372 627 358 626zM377 613 392 630 381 626zM394 617 406 618 411 630zM527 629 537 633 546 643zM527 629 546 643 533 646zM636 640 650 645 658 654zM170 608 185 605 186 620zM185 605 192 610 200 621zM334 624 349 623 352 638zM334 624 352 638 343 637zM349 623 358 626 362 636zM392 630 409 643 396 643zM514 642 526 643 529 655zM176 621 195 631 185 632zM186 620 207 636 195 631zM301 631 307 634 314 645zM505 655 521 654 527 669zM642 668 654 679 647 681zM170 628 185 632 188 645zM195 631 207 636 210 648zM239 636 247 640 254 651zM239 636 254 651 242 651z'/><path fill='#757774' d='M155 -90 164 -87 170 -75zM216 -81 233 -69 226 -71zM248 -77 270 -68 257 -69zM304 -75 318 -71 325 -59zM304 -75 325 -59 312 -60zM384 -68 399 -52 391 -53zM593 -43 611 -32 601 -33zM113 -81 127 -79 133 -68zM202 -71 217 -56 209 -59zM289 -62 299 -64 305 -50zM325 -59 338 -44 328 -49zM144 -64 154 -64 157 -53zM209 -59 217 -56 223 -44zM217 -56 238 -45 223 -44zM231 -58 242 -56 244 -43zM297 -49 305 -50 314 -34zM440 -37 453 -34 458 -19zM440 -37 458 -19 447 -21zM537 -23 550 -26 552 -12zM604 -16 619 -5 607 -7zM638 -16 649 -13 652 -1zM-20 -73 -6 -70 -1 -56zM180 -50 190 -48 195 -38zM190 -48 205 -47 210 -34zM205 -47 216 -46 218 -34zM291 -37 299 -39 307 -25zM74 -46 89 -49 96 -33zM195 -38 210 -34 217 -19zM239 -32 251 -32 260 -18zM286 -26 302 -14 293 -11zM318 -25 329 -21 334 -10zM329 -21 347 -6 334 -10zM343 -19 353 -19 357 -6zM495 -6 503 -5 514 7zM503 -5 517 -1 522 12zM503 -5 522 12 514 7zM547 4 558 4 566 16zM194 -25 203 -24 209 -8zM245 -20 260 -18 267 -6zM302 -14 319 0 308 -2zM312 -12 328 1 319 0zM410 2 423 0 431 12zM522 12 533 14 540 23zM522 12 540 23 531 22zM544 11 559 27 550 26zM579 17 594 31 582 28zM656 26 664 26 671 38zM196 -12 216 2 202 1zM245 -7 260 7 251 5zM274 -3 289 12 284 13zM284 0 296 1 301 10zM364 5 379 20 371 21zM394 8 414 24 405 22zM550 26 559 27 565 42zM559 27 571 28 578 41zM571 28 591 42 578 41zM594 31 603 33 612 45zM626 34 636 36 644 50zM671 38 687 54 675 50zM118 -8 134 7 121 5zM301 10 313 15 320 27zM347 17 357 17 366 31zM426 23 443 41 427 37zM433 24 450 39 443 41zM467 27 482 46 475 45zM537 36 543 36 552 50zM565 42 585 54 571 51zM612 45 631 60 616 56zM663 49 675 50 682 65zM675 50 687 54 694 68zM200 13 214 28 204 25zM320 27 334 39 324 40zM450 39 468 54 459 52zM563 53 571 51 576 66zM593 54 609 57 611 70zM5 6 22 20 11 20zM109 19 114 17 123 29zM114 17 128 19 131 33zM251 30 263 33 268 44zM324 40 334 39 345 55zM360 45 367 44 374 55zM557 63 569 65 572 80zM557 63 572 80 563 76zM601 71 611 70 618 81zM635 72 644 73 652 84zM676 75 691 77 695 89zM79 26 97 40 86 40zM406 61 418 61 427 75zM418 61 429 63 439 74zM444 63 455 67 457 80zM464 67 479 80 472 80zM518 74 528 73 534 89zM609 80 623 94 613 95zM642 83 657 98 643 97zM72 37 86 40 88 53zM259 59 276 72 265 69zM282 62 291 62 298 76zM358 70 368 68 377 82zM401 73 415 74 418 84zM401 73 418 84 408 85zM479 80 499 95 486 95zM513 85 531 101 522 96zM667 101 685 116 671 113zM245 70 257 69 259 81zM298 76 313 74 315 89zM313 74 325 88 315 89zM408 85 427 99 414 100zM431 88 445 90 448 101zM463 91 478 91 484 104zM509 98 522 96 525 112zM531 101 542 98 545 112zM87 64 95 66 103 79zM305 85 315 89 322 104zM348 90 358 91 365 105zM448 101 459 105 464 114zM501 110 518 123 509 120zM525 112 539 123 529 125zM539 112 553 127 539 123zM25 72 39 83 28 81zM110 78 125 79 131 93zM110 78 131 93 118 91zM400 109 411 110 415 124zM431 113 450 128 435 124zM539 123 557 138 549 136zM565 128 577 129 581 140zM327 112 340 116 346 129zM16 95 30 107 18 106zM45 99 61 97 63 112zM346 129 356 131 361 145zM430 136 447 153 440 149zM478 141 490 145 493 154zM490 145 507 160 493 154zM45 109 56 108 59 121zM97 115 108 116 117 129zM216 125 231 129 235 144zM395 147 404 149 409 162zM117 129 134 142 118 143zM128 131 139 142 134 142zM139 131 150 132 151 147zM201 138 217 151 210 153zM224 142 235 144 239 156zM224 142 239 156 228 153zM387 158 401 159 404 172zM409 162 423 160 430 175zM423 160 436 162 441 175zM436 162 442 164 450 174zM436 162 450 174 441 175zM442 164 454 163 463 178zM502 171 518 184 505 181zM519 172 530 171 536 185zM598 177 616 193 603 190zM611 179 629 194 616 193zM76 135 94 152 83 153zM85 141 106 152 94 152zM184 147 198 151 205 163zM253 157 263 159 272 170zM371 169 390 184 377 181zM404 172 415 173 425 187zM463 178 478 191 464 191zM472 177 483 178 487 192zM472 177 487 192 478 191zM518 184 530 185 535 199zM536 185 555 199 543 201zM551 187 565 202 555 199zM629 194 636 194 646 210zM-19 139 -7 140 -1 156zM3 140 25 156 11 157zM60 149 77 161 67 160zM106 152 122 166 110 164zM377 181 390 184 398 196zM512 194 529 211 517 208zM535 199 551 214 541 212zM543 201 555 199 561 213zM587 205 598 206 604 215zM-13 153 -1 156 5 168zM110 164 122 166 125 181zM110 164 125 181 118 179zM122 166 131 167 136 182zM174 173 193 188 181 184zM210 174 226 191 214 190zM319 189 338 202 325 200zM339 188 350 191 355 206zM386 194 399 211 391 206zM439 198 457 215 444 214zM463 203 474 203 477 218zM496 208 511 220 503 219zM615 219 630 218 630 232zM630 218 640 223 645 232zM630 218 645 232 630 232zM378 206 397 220 383 220zM391 206 406 220 397 220zM416 212 424 212 430 225zM436 212 444 214 450 227zM568 224 578 228 581 242zM568 224 581 242 572 237zM599 230 618 243 609 242zM667 238 680 252 669 247zM13 179 31 193 20 195zM75 189 92 190 92 203zM100 187 112 191 119 204zM100 187 119 204 108 201zM318 212 339 226 326 226zM485 232 499 232 500 243zM553 238 562 237 570 250zM572 237 588 252 579 253zM631 243 643 257 636 259zM647 249 667 260 654 259zM20 195 31 193 34 206zM81 200 92 203 99 214zM228 214 242 229 230 226zM284 222 294 223 296 235zM436 238 447 238 455 250zM570 250 584 265 572 262zM588 252 607 269 593 266zM603 256 617 271 607 269zM654 259 667 260 670 276zM211 227 226 238 219 236zM251 230 263 233 273 243zM251 230 273 243 258 243zM308 235 329 251 315 248zM418 250 432 250 436 259zM593 266 613 278 602 281zM52 221 68 236 57 234zM445 261 457 264 467 275zM-12 227 5 242 -5 241zM57 234 73 249 60 246zM137 243 144 245 149 256zM156 247 167 247 171 261zM521 283 537 298 523 295zM552 288 565 289 569 301zM584 288 596 293 603 304zM675 299 691 315 676 310zM55 246 60 246 68 258zM73 249 84 249 92 265zM105 252 118 254 121 268zM351 276 362 276 367 289zM482 289 495 304 486 302zM493 293 506 306 495 304zM502 296 519 310 506 306zM556 298 572 312 565 312zM634 306 645 310 654 321zM81 263 99 274 87 276zM168 269 188 284 175 283zM187 273 208 288 194 287zM220 279 241 292 228 292zM454 300 466 302 473 317zM565 312 581 324 571 327zM609 316 627 330 612 328zM40 272 51 272 56 285zM40 272 56 285 45 284zM141 278 151 280 155 297zM283 295 299 311 290 309zM494 317 501 318 513 332zM523 322 534 322 543 333zM546 322 557 325 563 339zM589 326 600 327 609 340zM589 326 609 340 596 340zM600 327 612 328 620 341zM655 335 671 336 673 350zM655 335 673 350 662 346zM671 336 679 338 685 349zM26 279 39 282 40 293zM475 326 492 340 483 340zM489 330 502 345 492 340zM497 329 515 344 502 345zM534 335 543 333 546 347zM534 335 546 347 534 348zM-21 286 -11 287 -4 304zM77 300 84 298 93 312zM108 303 117 304 125 314zM515 344 530 358 521 357zM679 361 697 377 688 373zM2 301 18 304 19 320zM134 316 151 331 144 328zM146 318 161 318 163 332zM498 358 510 354 518 370zM576 365 587 366 596 380zM623 369 629 368 640 384zM11 316 19 320 29 328zM293 345 306 346 315 358zM395 359 406 358 415 372zM550 374 563 389 555 386zM573 377 580 376 590 388zM580 376 599 389 590 388zM657 383 672 384 675 400zM336 364 349 378 344 377zM420 372 438 386 432 387zM578 387 590 388 597 403zM610 390 627 404 617 402zM537 398 558 412 542 409zM561 401 578 411 565 411zM572 400 586 413 578 411zM36 356 53 370 44 372zM59 361 71 361 76 374zM138 365 148 370 155 383zM304 385 314 383 317 396zM447 399 462 412 450 410zM526 406 531 406 541 419zM-1 363 14 368 15 379zM102 374 119 390 107 388zM200 387 211 385 216 401zM309 397 328 409 316 412zM377 402 389 420 378 414zM484 413 494 414 501 431zM508 416 517 417 524 432zM564 421 574 426 578 439zM606 428 625 443 610 442zM448 425 466 436 451 436zM466 425 480 429 487 441zM625 443 636 456 626 456zM635 445 641 445 647 459zM654 447 672 460 664 460zM146 404 156 408 160 417zM209 410 227 425 215 425zM263 417 275 419 280 430zM342 425 351 429 359 437zM351 429 363 427 373 440zM563 450 579 461 568 461zM19 405 34 418 23 417zM428 448 436 447 444 459zM448 448 467 461 450 462zM533 459 544 461 551 470zM-8 413 7 426 -3 427zM332 449 346 465 341 460zM551 470 560 475 567 484zM609 476 617 479 626 491zM609 476 626 491 611 492zM630 481 648 495 634 495zM230 452 245 464 235 461zM371 468 385 478 378 478zM395 470 409 481 399 479zM457 474 477 488 462 489zM495 478 503 477 506 491zM503 477 521 491 506 491zM578 489 592 488 594 503zM634 495 652 509 640 505zM656 498 665 499 673 509zM665 499 680 496 683 511zM37 445 53 455 43 458zM277 466 293 482 286 482zM324 473 339 488 328 484zM399 479 416 497 402 495zM409 481 418 482 426 497zM531 494 541 495 550 506zM10 453 23 467 14 466zM253 477 259 476 269 491zM351 487 363 487 364 501zM525 507 534 510 541 523zM567 513 583 510 589 523zM583 510 600 528 589 523zM217 498 229 501 236 511zM229 501 242 502 247 513zM318 511 329 510 335 525zM524 530 535 531 545 543zM549 533 560 533 567 548zM646 543 660 545 661 558zM138 503 155 517 140 517zM313 522 328 536 319 533zM335 525 346 525 349 536zM447 537 460 548 449 547zM508 543 529 558 514 553zM557 549 573 561 559 558zM298 532 310 547 301 543zM349 536 368 553 359 553zM514 553 529 558 530 570zM585 560 596 574 586 573zM215 534 230 552 220 551zM310 547 324 548 332 559zM324 548 337 547 343 560zM337 547 350 562 343 560zM402 556 414 555 417 569zM563 575 575 574 585 587zM575 574 586 573 592 589zM645 580 662 597 648 595zM63 533 83 547 72 548zM211 548 223 559 212 558zM242 549 251 553 258 563zM343 560 350 562 355 575zM350 562 367 577 355 575zM527 582 543 596 533 596zM561 583 575 597 568 596zM124 551 137 553 144 566zM191 560 204 561 209 571zM191 560 209 571 198 573zM322 572 340 585 331 587zM403 579 417 592 405 593zM509 591 529 606 515 604zM533 596 543 596 552 607zM124 565 136 578 127 576zM131 564 152 577 136 578zM187 570 198 573 202 584zM209 571 225 586 215 585zM220 571 236 588 225 586zM286 582 295 582 306 594zM295 582 316 596 306 594zM340 585 359 598 346 600zM355 586 368 602 359 598zM574 609 581 610 591 624zM-4 560 14 578 2 576zM127 576 145 592 133 587zM181 582 198 598 187 594zM236 588 251 589 256 603zM291 595 311 610 297 608zM512 619 527 629 516 631zM124 586 133 587 137 605zM145 592 153 593 162 603zM311 610 321 609 324 621zM516 631 527 629 533 646zM575 633 583 635 591 648zM636 640 658 654 645 654zM49 594 65 607 58 607zM84 595 97 595 101 608zM162 603 176 621 164 619zM291 617 307 618 307 634zM307 618 317 619 321 633zM307 618 321 633 307 634zM317 619 324 621 333 635zM533 646 554 660 538 656zM222 625 239 636 229 636zM265 627 280 642 270 640zM290 631 301 631 305 646zM307 634 326 647 314 645zM333 635 350 647 338 645zM352 638 370 651 362 650zM521 654 529 655 536 669zM529 655 538 656 546 671zM149 627 164 628 169 641zM149 627 169 641 157 643zM207 636 219 634 219 648zM259 637 270 640 276 653zM292 643 312 658 299 654zM314 645 326 647 332 657zM568 671 583 688 576 683zM614 675 629 693 617 689z'/><path fill='#767875' d='M73 -96 90 -84 84 -84zM84 -98 104 -81 90 -84zM117 -93 129 -92 139 -80zM117 -93 139 -80 127 -79zM231 -81 240 -83 246 -66zM293 -74 312 -60 299 -64zM318 -71 337 -59 325 -59zM384 -68 393 -63 399 -52zM435 -58 455 -46 444 -49zM617 -40 632 -28 618 -30zM638 -39 647 -36 651 -24zM1 -93 16 -94 22 -80zM226 -71 233 -69 242 -56zM226 -71 242 -56 231 -58zM233 -69 252 -55 242 -56zM299 -64 312 -60 315 -49zM299 -64 315 -49 305 -50zM312 -60 328 -49 315 -49zM391 -53 403 -36 395 -39zM542 -37 563 -20 550 -26zM641 -26 651 -24 657 -14zM641 -26 657 -14 649 -13zM101 -69 117 -57 106 -56zM185 -62 205 -47 190 -48zM315 -49 333 -33 321 -34zM386 -43 401 -27 393 -27zM403 -36 415 -38 425 -25zM563 -20 578 -10 563 -9zM596 -20 607 -7 599 -4zM216 -46 223 -44 233 -32zM223 -44 238 -45 239 -32zM291 -37 307 -25 298 -24zM299 -39 318 -25 307 -25zM314 -34 321 -34 329 -21zM347 -34 355 -30 360 -19zM347 -34 360 -19 353 -19zM368 -29 378 -30 382 -17zM393 -27 409 -13 396 -14zM512 -13 527 1 517 -1zM543 -9 552 -12 558 4zM543 -9 558 4 547 4zM563 -9 578 -10 583 4zM607 -7 625 11 613 10zM155 -41 169 -24 159 -29zM167 -39 184 -27 169 -24zM298 -24 312 -12 302 -14zM353 -19 371 -5 357 -6zM409 -13 416 -11 423 0zM409 -13 423 0 410 2zM465 -8 474 -5 480 5zM527 1 544 11 533 14zM596 8 607 7 613 18zM607 7 613 10 623 19zM159 -29 177 -14 165 -17zM194 -25 209 -8 196 -12zM347 -6 357 -6 364 5zM371 -5 378 -5 387 10zM371 -5 387 10 376 6zM499 10 518 25 505 22zM514 7 522 12 531 22zM656 26 671 38 662 35zM664 26 680 39 671 38zM156 -17 172 -2 162 -1zM186 -14 202 1 195 2zM209 -8 224 2 216 2zM284 0 301 10 289 12zM328 1 347 17 335 14zM351 5 371 21 357 17zM406 12 418 12 426 23zM450 13 459 17 467 27zM571 28 582 28 591 42zM139 -6 156 9 144 6zM289 12 308 27 300 25zM371 21 388 35 373 34zM500 33 516 48 509 47zM621 48 635 50 640 59zM635 50 644 50 649 61zM656 48 672 65 659 63zM134 7 144 6 149 21zM144 6 159 23 149 21zM211 18 220 18 227 29zM300 25 308 27 316 40zM397 37 415 51 402 48zM475 45 482 46 490 57zM482 46 494 46 499 60zM52 12 60 13 70 24zM128 19 144 34 131 33zM137 21 149 21 155 35zM149 21 167 38 155 35zM159 23 180 36 167 38zM170 21 189 36 180 36zM284 37 299 47 286 48zM292 34 311 51 299 47zM367 44 387 57 374 55zM545 62 563 76 554 76zM611 70 622 70 632 83zM635 72 652 84 642 83zM110 31 123 29 128 46zM257 46 268 44 274 61zM299 47 313 64 307 61zM333 52 348 65 340 65zM352 57 366 55 368 68zM406 61 427 75 415 74zM476 68 492 81 479 80zM487 71 498 69 504 85zM487 71 504 85 492 81zM307 61 324 77 313 74zM368 68 381 68 389 82zM391 70 401 73 408 85zM391 70 408 85 397 85zM623 94 632 96 643 108zM56 50 69 52 76 64zM69 52 87 64 76 64zM82 52 95 66 87 64zM122 57 136 59 142 72zM122 57 142 72 131 68zM418 84 440 99 427 99zM463 91 484 104 471 105zM573 104 587 103 590 118zM587 103 600 119 590 118zM598 106 611 121 600 119zM-1 53 9 54 15 67zM-1 53 15 67 1 67zM63 62 76 64 78 76zM358 91 373 95 379 108zM394 94 406 99 411 110zM501 110 513 109 518 123zM258 93 268 96 274 106zM347 104 352 103 361 119zM400 109 415 124 402 122zM411 110 427 125 415 124zM477 119 485 119 492 134zM485 119 498 121 504 132zM509 120 529 133 515 133zM529 125 539 123 549 136zM20 81 28 81 35 95zM76 86 94 100 79 101zM142 93 159 106 146 106zM482 132 492 134 496 145zM16 95 25 96 30 107zM326 126 340 142 330 140zM466 140 478 141 480 155zM496 145 507 148 513 158zM507 148 525 161 513 158zM598 155 606 158 615 168zM-10 104 -3 106 5 115zM-3 106 12 106 17 121zM75 111 84 111 92 124zM75 111 92 124 84 126zM84 111 97 115 105 128zM382 146 401 159 387 158zM414 147 436 162 423 160zM525 161 546 172 530 171zM634 169 646 174 652 187zM28 120 39 123 42 134zM84 126 100 142 85 141zM201 138 211 140 217 151zM336 153 348 154 354 168zM354 152 369 157 371 169zM509 172 530 185 518 184zM556 175 569 188 561 189zM574 179 596 192 582 192zM598 177 611 179 616 193zM76 135 85 141 94 152zM85 141 100 142 106 152zM134 142 139 142 151 157zM253 157 272 170 259 168zM287 158 305 172 290 171zM309 161 321 162 324 178zM354 168 361 168 369 180zM530 185 543 201 535 199zM596 192 610 205 598 206zM-19 139 -1 156 -13 153zM28 145 43 157 35 157zM259 168 276 181 261 183zM290 171 305 172 310 185zM314 173 331 189 319 189zM343 180 360 179 364 192zM523 196 541 212 529 211zM646 210 652 213 657 225zM56 162 71 173 61 171zM87 165 104 177 95 174zM96 164 118 179 104 177zM131 167 144 169 148 184zM331 189 347 202 338 202zM386 194 398 196 399 211zM430 199 444 214 436 212zM52 171 68 185 54 186zM160 182 170 187 175 199zM170 187 190 198 175 199zM226 191 244 204 233 202zM258 192 269 193 276 207zM269 193 278 196 284 210zM609 231 631 243 618 243zM75 189 92 203 81 200zM196 200 210 203 217 213zM310 209 326 226 315 225zM318 212 330 215 339 226zM660 249 669 247 675 260zM680 252 697 265 690 265zM51 197 67 212 55 208zM62 196 71 197 78 213zM125 204 143 219 132 217zM147 206 158 208 165 219zM158 208 171 208 179 223zM217 213 230 226 223 229zM481 243 494 241 496 257zM481 243 496 257 488 256zM-9 201 0 204 9 216zM34 206 47 208 52 221zM113 213 122 215 129 231zM153 219 173 233 164 234zM179 223 191 222 193 237zM211 227 223 229 226 238zM275 232 294 244 284 246zM584 265 593 266 602 281zM617 271 627 271 636 283zM637 273 655 286 648 285zM-6 216 9 216 15 228zM249 244 266 254 257 257zM258 243 273 243 276 255zM273 243 284 246 288 258zM379 254 392 260 401 271zM425 258 436 259 443 274zM478 269 498 283 487 280zM559 277 575 289 565 289zM1 230 15 228 18 245zM68 236 84 249 73 249zM156 247 171 261 162 257zM213 249 221 250 230 267zM375 268 393 282 382 280zM575 289 593 303 582 301zM584 288 603 304 593 303zM30 246 47 258 36 258zM582 301 600 315 587 316zM28 256 36 258 40 272zM432 300 447 314 437 311zM444 299 462 314 447 314zM478 302 494 317 482 316zM519 310 528 311 534 322zM528 311 546 322 534 322zM665 323 673 325 679 338zM-1 263 12 280 2 280zM272 296 290 309 282 310zM380 305 393 306 401 318zM645 333 662 346 651 346zM-18 274 -2 290 -11 287zM-8 278 2 280 8 293zM203 299 218 313 208 314zM212 299 225 302 232 313zM282 310 296 322 284 320zM662 346 679 361 668 362zM673 350 685 349 689 362zM108 303 125 314 116 315zM187 312 195 312 200 322zM-4 304 2 301 11 316zM18 304 33 316 19 320zM36 304 56 322 45 320zM101 314 116 315 119 330zM125 314 144 328 129 327zM214 324 229 341 216 338zM235 328 247 330 254 339zM235 328 254 339 239 339zM370 340 377 343 381 357zM400 345 414 344 419 361zM400 345 419 361 406 358zM414 344 425 347 430 360zM425 347 436 348 439 362zM629 368 639 371 651 385zM656 372 672 384 657 383zM-25 315 -13 312 -6 326zM129 327 144 328 150 345zM195 337 213 348 202 349zM285 343 304 358 288 357zM341 353 351 353 355 367zM375 354 388 371 378 365zM381 357 404 369 388 371zM406 358 420 372 415 372zM-17 326 -6 326 2 338zM73 337 81 337 90 349zM81 337 92 337 96 352zM388 371 404 369 405 382zM446 373 459 388 451 387zM10 339 25 357 17 353zM46 343 59 361 51 358zM318 375 339 387 324 384zM386 381 403 393 388 392zM405 382 422 394 416 397zM237 378 256 392 243 388zM304 385 317 396 309 397zM314 383 324 384 333 402zM481 400 494 414 484 413zM513 408 530 422 517 417zM578 411 594 426 586 426zM633 420 643 422 648 435zM288 396 303 410 290 408zM300 397 309 397 316 412zM450 410 462 412 466 425zM564 421 578 439 567 435zM594 426 606 428 610 442zM258 403 270 404 275 419zM270 404 280 405 285 417zM280 405 301 422 285 417zM328 409 337 414 342 425zM389 420 406 431 399 431zM458 424 474 439 466 436zM-1 391 19 405 6 401zM255 414 263 417 274 430zM301 422 310 422 312 436zM318 421 331 425 340 439zM318 421 340 439 325 435zM443 437 458 449 448 448zM529 444 543 448 544 461zM615 454 632 468 621 466zM274 430 290 445 275 441zM428 448 444 459 429 460zM494 452 511 470 496 464zM544 461 554 462 560 475zM554 462 572 474 560 475zM654 470 666 471 673 484zM275 441 293 460 283 455zM323 447 332 449 341 460zM340 448 362 462 346 465zM429 460 450 475 438 475zM511 470 520 469 524 482zM520 469 532 468 538 483zM572 474 592 488 578 489zM617 479 634 495 626 491zM630 481 637 480 648 495zM650 484 663 483 665 499zM663 483 680 496 665 499zM293 460 310 473 302 472zM314 461 327 458 332 475zM362 462 378 478 367 478zM403 470 417 472 418 482zM457 474 470 473 477 488zM479 479 495 478 497 492zM514 483 531 494 521 491zM538 483 552 498 541 495zM567 484 578 489 583 500zM37 445 46 445 53 455zM367 478 378 478 384 491zM610 501 624 516 615 513zM630 503 640 505 647 517zM660 509 681 524 671 524zM194 473 211 487 204 484zM259 476 272 482 281 492zM272 482 292 492 281 492zM286 482 293 482 302 494zM558 511 572 525 563 524zM211 487 229 501 217 498zM258 490 269 491 275 507zM411 508 425 522 416 521zM511 515 519 518 524 530zM640 529 660 545 646 543zM152 490 162 492 167 504zM348 515 370 526 355 525zM560 533 571 535 579 547zM634 542 646 543 655 558zM124 502 140 517 128 514zM247 513 257 516 261 528zM320 524 335 525 341 538zM420 533 436 533 437 545zM557 549 567 548 573 561zM96 509 117 527 103 523zM155 517 172 531 161 529zM514 553 530 570 521 567zM529 558 541 555 543 570zM559 558 575 574 563 575zM-15 513 -7 515 2 526zM-15 513 2 526 -12 522zM222 534 242 549 230 552zM290 546 308 557 296 557zM301 543 310 547 319 561zM575 574 592 589 585 587zM108 539 124 551 115 548zM220 551 230 552 237 563zM272 556 288 554 294 566zM296 557 308 557 310 570zM308 557 319 561 322 572zM365 561 379 579 367 577zM407 566 423 581 412 583zM503 577 514 578 520 591zM572 585 585 587 588 599zM585 587 592 589 598 599zM-3 539 12 549 -3 553zM107 549 115 548 124 565zM237 563 255 575 245 576zM272 566 278 568 286 582zM278 568 295 582 286 582zM348 576 366 586 355 586zM403 579 412 583 417 592zM555 596 568 596 574 609zM-13 551 -3 553 8 565zM90 558 97 560 107 572zM144 566 152 566 159 578zM263 580 276 582 281 593zM322 586 336 599 323 595zM366 586 373 590 382 601zM366 586 382 601 368 602zM515 604 534 620 523 618zM560 611 579 625 567 622zM574 609 591 624 579 625zM581 610 598 628 591 624zM171 580 187 594 177 595zM202 584 215 585 222 601zM215 585 234 600 222 601zM268 590 285 604 277 606zM323 595 342 613 331 610zM336 599 346 600 351 614zM359 598 377 613 364 615zM488 616 498 615 507 628zM523 618 537 633 527 629zM567 622 579 625 583 635zM591 624 608 638 594 635zM664 635 679 633 686 645zM222 601 234 600 237 611zM240 603 261 615 250 615zM285 604 297 608 307 618zM128 602 137 605 142 618zM205 609 216 609 222 625zM237 611 250 615 257 629zM271 618 284 615 290 631zM546 643 556 648 561 659zM566 645 579 649 584 661zM566 645 584 661 572 661zM48 607 58 607 64 621zM214 621 229 636 219 634zM275 631 292 643 280 642zM290 631 305 646 292 643zM301 631 314 645 305 646zM321 633 333 635 338 645zM343 637 362 650 350 647zM572 661 584 661 588 675zM219 634 229 636 232 647zM219 634 232 647 219 648zM259 637 276 653 268 651zM270 640 280 642 291 657zM270 640 291 657 276 653zM280 642 292 643 299 654zM292 643 305 646 312 658zM314 645 332 657 324 660zM350 647 362 650 368 661zM503 665 522 682 508 680zM568 671 580 673 583 688zM580 673 588 675 596 687zM588 675 601 676 609 689z'/><path fill='#777976' d='M73 -96 84 -98 90 -84zM195 -87 212 -69 202 -71zM293 -74 304 -75 312 -60zM318 -71 329 -73 337 -59zM370 -68 384 -68 391 -53zM393 -63 408 -63 413 -48zM408 -63 417 -62 420 -48zM491 -54 506 -51 511 -42zM517 -51 535 -36 521 -39zM551 -47 559 -46 567 -32zM617 -40 627 -41 632 -28zM202 -71 212 -69 217 -56zM348 -59 354 -56 365 -43zM499 -41 514 -29 504 -31zM209 -59 223 -44 216 -46zM217 -56 231 -58 238 -45zM297 -49 314 -34 299 -39zM305 -50 321 -34 314 -34zM315 -49 328 -49 333 -33zM376 -41 386 -43 393 -27zM493 -28 512 -13 499 -18zM514 -29 525 -25 531 -13zM649 -13 657 -14 663 2zM649 -13 663 2 652 -1zM106 -56 117 -57 119 -45zM157 -53 169 -52 177 -39zM205 -47 218 -34 210 -34zM447 -21 458 -19 465 -8zM578 -10 596 8 583 4zM643 -3 660 11 651 10zM99 -47 109 -45 116 -34zM155 -41 167 -39 169 -24zM286 -26 298 -24 302 -14zM298 -24 307 -25 312 -12zM439 -10 448 -8 455 5zM495 -6 514 7 499 10zM116 -34 131 -18 120 -19zM203 -24 217 -19 222 -10zM293 -11 308 -2 296 1zM400 -1 410 2 418 12zM556 15 566 16 571 28zM186 -14 196 -12 202 1zM196 -12 209 -8 216 2zM245 -7 255 -4 260 7zM328 1 342 2 347 17zM406 12 426 23 414 24zM459 17 474 20 480 29zM518 25 531 22 537 36zM582 28 597 44 591 42zM671 38 680 39 687 54zM148 -2 162 -1 167 11zM284 13 300 25 290 21zM313 15 333 26 320 27zM449 26 457 27 462 43zM597 44 612 45 616 56zM597 44 616 56 609 57zM200 13 211 18 214 28zM268 23 278 22 284 37zM300 25 316 40 302 39zM308 27 320 27 324 40zM366 31 378 44 367 44zM475 45 490 57 480 55zM509 47 524 60 510 59zM631 60 640 59 644 73zM659 63 672 65 676 75zM292 34 302 39 311 51zM347 44 360 45 366 55zM360 45 374 55 366 55zM367 44 378 44 387 57zM390 49 402 48 406 61zM402 48 415 51 418 61zM436 53 455 67 444 63zM446 51 464 67 455 67zM569 65 576 66 582 81zM656 76 676 89 659 88zM664 73 686 91 676 89zM299 47 311 51 313 64zM323 54 340 65 329 66zM345 55 358 70 348 65zM429 63 444 63 446 75zM444 63 457 80 446 75zM455 67 472 80 457 80zM540 76 554 76 559 88zM582 81 597 78 600 95zM609 80 618 81 623 94zM618 81 632 83 632 96zM659 88 677 101 667 101zM686 91 700 104 692 103zM397 85 408 85 414 100zM445 90 459 105 448 101zM509 98 525 112 513 109zM643 108 649 110 658 126zM76 64 91 76 78 76zM108 66 121 66 125 79zM162 72 171 74 181 87zM273 85 285 84 289 97zM305 85 322 104 312 98zM348 90 365 105 352 103zM373 95 381 95 391 109zM448 101 464 114 457 114zM491 107 501 110 509 120zM645 125 661 136 655 134zM658 126 666 123 672 136zM125 79 142 93 131 93zM268 96 282 107 274 106zM289 97 302 98 306 110zM322 104 340 116 327 112zM379 108 391 109 395 121zM431 113 440 112 450 128zM440 112 457 114 463 130zM464 114 482 132 470 129zM518 123 529 125 536 134zM553 127 565 128 571 141zM-1 78 16 95 6 94zM118 91 131 93 134 105zM251 108 270 121 256 121zM274 106 282 107 287 123zM402 122 415 124 419 135zM427 125 447 138 430 136zM450 128 463 130 466 140zM529 133 536 134 544 149zM-19 91 -8 91 -3 106zM298 122 320 136 307 138zM378 131 395 147 382 146zM413 137 419 135 429 151zM454 140 466 140 474 154zM496 145 513 158 507 160zM533 148 548 162 535 160zM577 151 585 152 591 165zM585 152 598 155 603 169zM606 158 622 157 629 169zM606 158 629 169 615 168zM622 157 629 160 634 169zM-25 102 -10 104 -7 114zM-10 104 5 115 -7 114zM18 106 30 107 39 123zM361 145 371 144 381 158zM447 153 462 151 465 166zM507 160 519 172 509 172zM513 158 530 171 519 172zM525 161 535 160 546 172zM559 164 573 167 574 179zM661 171 668 174 676 187zM17 121 28 120 34 131zM381 158 393 171 387 170zM465 166 476 168 483 178zM-13 128 3 140 -7 140zM217 151 228 153 237 167zM263 159 276 160 278 171zM309 161 324 178 314 173zM430 175 441 175 446 187zM114 153 128 156 131 167zM278 171 295 187 288 182zM456 191 464 191 474 203zM478 191 496 208 482 204zM535 199 543 201 551 214zM555 199 573 213 561 213zM577 203 594 217 585 215zM-13 153 5 168 -8 167zM11 157 25 156 30 170zM96 164 110 164 118 179zM256 180 269 193 258 192zM276 181 293 195 278 196zM310 185 319 189 325 200zM350 191 368 207 355 206zM505 206 520 219 511 220zM541 212 551 214 559 225zM604 215 621 232 609 231zM214 190 233 202 221 203zM258 192 276 207 264 208zM293 195 300 199 310 209zM391 206 399 211 406 220zM457 215 465 215 475 230zM511 220 527 232 519 231zM559 225 568 224 572 237zM588 229 599 230 609 242zM609 231 621 232 631 243zM112 191 124 193 125 204zM210 203 228 214 217 213zM361 218 379 232 370 228zM475 230 485 232 494 241zM485 232 500 243 494 241zM581 242 603 256 588 252zM647 249 660 249 667 260zM669 247 680 252 690 265zM-18 188 0 204 -9 201zM31 193 47 208 34 206zM108 201 119 204 122 215zM158 208 179 223 165 219zM217 213 228 214 230 226zM415 237 432 250 418 250zM461 241 468 242 474 254zM537 248 551 259 543 262zM546 250 559 248 561 264zM579 253 593 266 584 265zM603 256 614 253 617 271zM-20 200 -9 201 -6 216zM67 212 78 213 83 225zM89 213 104 228 94 224zM242 229 258 243 249 244zM323 238 333 238 338 251zM389 246 405 259 392 260zM396 248 416 258 405 259zM474 254 494 270 478 269zM488 256 500 267 494 270zM593 266 607 269 613 278zM607 269 617 271 623 283zM686 275 699 289 691 286zM-6 216 15 228 1 230zM436 259 455 276 443 274zM613 278 623 283 630 294zM79 237 92 239 96 251zM236 253 244 256 251 266zM343 264 355 266 362 276zM343 264 362 276 351 276zM401 271 414 283 406 284zM410 271 418 274 424 285zM521 283 529 286 537 298zM607 295 620 294 627 304zM620 294 630 294 634 306zM630 294 645 310 634 306zM685 300 696 303 701 314zM-16 241 -5 241 5 256zM-16 241 5 256 -6 252zM60 246 73 249 81 263zM84 249 96 251 103 262zM327 273 340 278 344 287zM340 278 351 276 357 290zM362 276 371 279 380 295zM546 300 565 312 552 310zM556 298 569 301 572 312zM634 306 654 321 639 320zM676 310 691 315 699 324zM28 256 40 272 28 270zM168 269 181 272 188 284zM246 279 254 279 262 295zM454 300 473 317 462 314zM466 302 482 316 473 317zM506 306 519 310 523 322zM572 312 589 326 581 324zM587 316 600 327 589 326zM665 323 679 338 671 336zM51 272 63 270 72 286zM118 277 131 277 134 291zM141 278 155 297 145 293zM251 294 262 295 268 305zM437 311 447 314 455 324zM473 317 482 316 489 330zM645 333 655 335 662 346zM26 279 40 293 33 294zM101 291 117 304 108 303zM115 288 127 289 129 304zM203 299 212 299 218 313zM466 326 475 326 483 340zM673 350 689 362 679 361zM685 349 694 352 705 364zM63 298 77 300 82 314zM117 304 134 316 125 314zM176 307 187 312 190 322zM382 333 396 329 400 345zM470 339 489 354 480 353zM583 349 591 351 600 366zM-4 304 11 316 0 313zM82 314 99 328 90 325zM93 312 109 326 99 328zM116 315 129 327 119 330zM299 333 319 348 306 346zM454 351 465 352 472 363zM656 372 665 373 672 384zM-13 312 0 313 7 329zM99 328 117 339 105 339zM341 353 355 367 348 365zM126 340 143 353 132 354zM304 358 318 375 311 371zM315 358 322 361 328 376zM578 387 597 403 582 400zM46 343 57 344 59 361zM284 369 294 370 304 385zM294 370 311 371 314 383zM318 375 328 376 339 387zM419 386 432 387 437 396zM475 389 488 405 481 400zM561 401 572 400 578 411zM658 408 672 408 675 426zM51 358 67 372 53 370zM246 379 263 393 256 392zM380 391 398 404 387 406zM388 392 403 393 407 409zM403 393 417 407 407 409zM456 401 465 403 471 413zM456 401 471 413 462 412zM621 417 633 420 637 431zM-10 363 9 379 -6 375zM53 370 67 372 70 387zM309 397 317 396 328 409zM429 408 439 409 448 425zM439 409 458 424 448 425zM450 410 466 425 458 424zM494 414 508 416 515 431zM530 422 541 419 543 434zM586 426 594 426 603 439zM648 435 658 433 668 449zM680 437 701 451 686 451zM316 412 331 425 318 421zM328 409 342 425 331 425zM372 418 385 430 377 431zM401 420 413 420 418 431zM413 420 428 437 418 431zM543 434 563 450 549 448zM675 447 686 451 693 462zM10 392 22 391 30 403zM235 413 250 428 240 426zM331 425 342 425 346 436zM418 431 436 447 428 448zM549 448 568 461 554 462zM647 459 666 471 654 470zM664 460 672 460 679 473zM203 422 221 439 210 439zM325 435 340 448 332 449zM359 437 377 454 367 454zM533 459 551 470 544 470zM568 461 579 461 586 477zM601 467 613 468 617 479zM632 468 650 484 637 480zM644 471 654 470 663 483zM264 444 283 455 269 454zM290 445 307 457 293 460zM385 455 403 470 395 470zM409 455 426 473 417 472zM477 465 487 463 495 478zM487 463 496 464 503 477zM487 463 503 477 495 478zM586 477 599 490 592 488zM182 447 198 460 187 459zM269 454 289 469 277 466zM417 472 426 473 431 486zM426 473 444 483 431 486zM665 499 683 511 673 509zM26 440 43 458 30 454zM158 456 175 468 162 467zM187 459 204 471 194 473zM198 460 210 461 216 475zM277 466 289 469 293 482zM346 476 355 474 363 487zM552 498 566 498 567 513zM576 501 590 516 583 510zM583 500 601 516 590 516zM630 503 647 517 637 516zM652 509 660 509 671 524zM17 452 30 454 36 466zM128 466 148 481 133 476zM384 491 401 508 389 504zM492 501 503 503 511 515zM503 503 513 505 519 518zM292 492 308 510 294 508zM528 518 549 533 535 531zM541 523 551 523 560 533zM551 523 571 535 560 533zM563 524 581 536 571 535zM589 523 602 537 590 541zM607 527 616 527 623 540zM207 500 226 514 211 511zM394 517 407 518 408 531zM407 518 416 521 420 533zM615 538 633 557 617 553zM660 545 672 547 674 562zM49 492 67 508 53 508zM145 503 156 507 164 518zM247 513 261 528 255 527zM370 526 380 527 387 544zM408 531 420 533 426 548zM420 533 437 545 426 548zM453 538 467 536 472 552zM617 553 633 557 636 568zM175 522 189 531 181 534zM228 523 241 528 249 539zM228 523 249 539 233 537zM298 532 307 534 310 547zM307 534 324 548 310 547zM328 536 341 538 344 549zM349 536 363 538 368 553zM397 544 414 555 402 556zM502 554 521 567 513 569zM529 558 543 570 530 570zM573 561 585 560 586 573zM613 565 634 580 620 579zM-7 515 11 529 2 526zM52 520 59 521 63 533zM181 534 197 548 184 546zM481 563 489 566 497 576zM553 573 572 585 561 583zM57 529 72 548 63 545zM108 539 120 537 124 551zM120 537 137 553 124 551zM220 551 237 563 223 559zM242 549 258 563 250 565zM319 561 332 559 335 572zM503 577 520 591 509 591zM561 583 572 585 575 597zM572 585 588 599 575 597zM585 587 598 599 588 599zM679 598 701 610 688 610zM146 552 159 553 163 570zM184 558 198 573 187 570zM237 563 250 565 255 575zM272 566 286 582 276 582zM335 572 355 586 340 585zM509 591 520 591 529 606zM520 591 533 596 536 607zM588 599 603 613 596 614zM666 607 679 621 669 622zM80 559 90 558 94 571zM124 565 131 564 136 578zM131 564 144 566 152 577zM209 571 220 571 225 586zM276 582 291 595 281 593zM387 588 405 605 392 603zM508 603 515 604 523 618zM529 606 536 607 542 622zM616 615 626 614 632 627zM-14 561 2 576 -8 573zM38 568 53 566 55 583zM258 588 277 606 264 601zM268 590 281 593 285 604zM306 594 321 609 311 610zM316 596 323 595 331 610zM559 621 567 622 575 633zM645 631 653 632 659 645zM240 603 256 603 261 615zM285 604 307 618 291 617zM311 610 324 621 317 619zM507 628 526 643 514 642zM583 635 594 635 602 653zM583 635 602 653 591 648zM-7 585 7 589 13 600zM137 605 152 602 158 618zM152 602 164 619 158 618zM170 608 186 620 176 621zM284 615 301 631 290 631zM503 639 521 654 505 655zM579 649 591 648 597 664zM579 649 597 664 584 661zM164 619 185 632 170 628zM176 621 186 620 195 631zM200 621 219 634 207 636zM214 621 222 625 229 636zM561 659 572 661 580 673zM642 668 651 667 654 679zM185 632 195 631 198 644zM185 632 198 644 188 645zM305 646 314 645 324 660zM326 647 342 660 332 657zM338 645 350 647 355 663zM338 645 355 663 342 660zM350 647 368 661 355 663zM559 673 576 683 566 686zM647 681 663 696 651 695z'/><path fill='#787a77' d='M408 -63 420 -48 413 -48zM435 -58 450 -57 455 -46zM457 -57 480 -43 467 -47zM582 -46 601 -33 585 -31zM72 -88 84 -84 87 -72zM178 -73 194 -71 194 -61zM212 -69 231 -58 217 -56zM233 -69 246 -66 252 -55zM246 -66 266 -53 252 -55zM289 -62 305 -50 297 -49zM312 -60 325 -59 328 -49zM379 -54 395 -39 386 -43zM391 -53 399 -52 403 -36zM399 -52 413 -48 415 -38zM444 -49 455 -46 461 -32zM444 -49 461 -32 453 -34zM499 -41 511 -42 514 -29zM585 -31 601 -33 604 -16zM611 -32 618 -30 629 -14zM611 -32 629 -14 616 -17zM107 -68 128 -57 117 -57zM154 -64 165 -65 169 -52zM351 -44 365 -43 368 -29zM581 -20 599 -4 585 -7zM616 -17 630 -1 619 -5zM157 -53 177 -39 167 -39zM169 -52 180 -50 189 -39zM190 -48 210 -34 195 -38zM244 -43 263 -31 251 -32zM401 -27 413 -25 416 -11zM447 -21 465 -8 448 -8zM499 -18 512 -13 517 -1zM499 -18 517 -1 503 -5zM599 -4 613 10 607 7zM630 -1 651 10 636 11zM643 -3 652 -1 660 11zM109 -45 119 -45 124 -29zM109 -45 124 -29 116 -34zM210 -34 218 -34 224 -20zM465 -8 480 5 465 4zM572 4 588 19 579 17zM583 4 596 8 601 19zM636 11 651 10 656 26zM104 -34 116 -34 120 -19zM104 -34 120 -19 108 -22zM293 -11 302 -14 308 -2zM302 -14 312 -12 319 0zM357 -6 371 -5 376 6zM435 -1 446 2 450 13zM465 4 487 18 474 20zM556 15 571 28 559 27zM633 21 651 37 636 36zM156 -17 165 -17 172 -2zM177 -14 195 2 183 0zM351 5 364 5 371 21zM387 10 405 22 392 23zM487 18 500 33 491 31zM531 22 540 23 543 36zM615 31 635 50 621 48zM335 14 350 30 341 30zM357 17 371 21 373 34zM675 50 694 68 682 65zM134 7 149 21 137 21zM156 9 170 21 159 23zM290 21 300 25 302 39zM308 27 324 40 316 40zM563 53 576 66 569 65zM585 54 593 54 601 71zM682 65 702 78 691 77zM347 44 366 55 352 57zM378 44 390 49 396 58zM390 49 406 61 396 58zM402 48 418 61 406 61zM436 53 446 51 455 67zM611 70 632 83 618 81zM644 73 659 88 652 84zM333 52 345 55 348 65zM418 61 439 74 427 75zM632 83 642 83 643 97zM659 88 676 89 677 101zM676 89 692 103 677 101zM50 38 69 52 56 50zM329 66 340 65 342 78zM513 85 527 85 531 101zM632 96 643 97 649 110zM15 42 28 60 19 59zM257 69 265 69 273 85zM389 82 397 85 406 99zM408 85 418 84 427 99zM445 90 453 90 459 105zM499 95 509 98 513 109zM573 104 590 118 579 115zM649 110 664 112 666 123zM649 110 666 123 658 126zM685 116 702 130 688 126zM459 105 477 119 464 114zM525 112 539 112 539 123zM332 101 347 104 352 117zM485 119 504 132 492 134zM498 121 515 133 504 132zM518 123 536 134 529 133zM118 91 134 105 124 105zM142 93 154 98 159 106zM306 110 318 115 326 126zM306 110 326 126 311 123zM382 121 395 121 401 134zM463 130 478 141 466 140zM492 134 507 148 496 145zM61 97 75 111 63 112zM94 100 108 116 97 115zM356 131 371 144 361 145zM413 137 429 151 414 147zM419 135 440 149 429 151zM454 140 474 154 462 151zM216 125 235 144 224 142zM264 134 278 146 267 147zM330 140 340 142 348 154zM462 151 476 168 465 166zM474 154 491 171 476 168zM535 160 548 162 556 175zM629 169 644 185 633 181zM387 158 404 172 393 171zM401 159 409 162 415 173zM423 160 441 175 430 175zM-13 128 1 127 3 140zM53 135 63 137 69 150zM109 143 128 156 114 153zM228 153 245 169 237 167zM329 166 343 166 343 180zM329 166 343 180 333 179zM371 169 387 170 390 184zM387 170 399 184 390 184zM492 179 505 181 512 194zM536 185 551 187 555 199zM569 188 587 205 577 203zM667 200 680 201 684 212zM16 142 28 145 35 157zM39 146 56 162 43 157zM135 158 155 170 144 169zM151 157 167 172 155 170zM314 173 324 178 331 189zM360 179 375 194 364 192zM433 190 446 187 452 200zM523 196 535 199 541 212zM555 199 565 202 573 213zM646 210 657 225 651 221zM678 212 695 229 685 227zM684 212 698 217 702 228zM375 194 386 194 391 206zM398 196 409 199 416 212zM474 203 482 204 490 217zM505 206 517 208 520 219zM573 213 588 229 578 228zM585 215 594 217 599 230zM594 217 609 231 599 230zM651 221 667 238 655 238zM245 191 258 192 264 208zM416 212 430 225 419 222zM436 212 450 227 439 226zM520 219 531 225 541 235zM655 238 667 238 669 247zM13 179 24 179 31 193zM24 179 38 196 31 193zM92 190 100 187 108 201zM166 198 175 199 185 212zM190 198 204 214 194 213zM196 200 217 213 204 214zM252 204 264 208 272 220zM299 212 315 225 305 225zM330 215 346 228 339 226zM383 220 397 220 402 232zM370 228 379 232 389 246zM494 241 500 243 506 256zM494 241 506 256 496 257zM500 243 517 256 506 256zM614 253 623 258 627 271zM623 258 636 259 637 273zM675 260 696 278 686 275zM0 204 20 217 9 216zM34 206 52 221 39 221zM99 214 120 230 104 228zM191 222 198 224 206 238zM230 226 242 229 249 244zM285 236 303 250 294 244zM496 257 506 256 516 267zM496 257 516 267 500 267zM651 270 663 275 670 284zM670 276 686 275 691 286zM30 217 44 233 37 233zM60 223 79 237 68 236zM141 229 150 234 156 247zM226 238 238 243 244 256zM273 243 288 258 276 255zM358 253 375 268 362 267zM405 259 418 274 410 271zM416 258 425 258 429 273zM416 258 429 273 418 274zM623 283 643 297 630 294zM648 285 655 286 663 297zM15 228 26 230 30 246zM57 234 68 236 73 249zM79 237 96 251 84 249zM244 256 257 257 264 268zM288 258 307 274 296 272zM443 274 455 276 458 288zM498 283 513 292 502 296zM552 288 569 301 556 298zM-5 241 13 254 5 256zM38 244 55 246 59 258zM96 251 112 267 103 262zM296 272 307 274 313 285zM315 275 327 273 331 288zM340 278 357 290 344 287zM458 288 478 302 466 302zM470 288 482 289 486 302zM470 288 486 302 478 302zM537 298 552 310 539 312zM569 301 582 301 587 316zM569 301 587 316 572 312zM611 305 627 304 629 321zM658 308 669 313 673 325zM676 310 699 324 686 324zM59 258 73 272 63 270zM288 282 308 299 295 297zM444 299 454 300 462 314zM506 306 523 322 517 320zM552 310 565 312 571 327zM28 270 40 272 45 284zM151 280 162 285 167 297zM188 284 194 287 203 299zM208 288 218 290 225 302zM517 320 534 335 522 331zM523 322 543 333 534 335zM-18 274 -8 278 -2 290zM-8 278 8 293 -2 290zM2 280 12 280 19 294zM2 280 19 294 8 293zM39 282 55 298 40 293zM101 291 115 288 117 304zM212 299 232 313 218 313zM290 309 299 311 306 322zM356 317 365 315 370 328zM387 319 402 333 396 329zM455 324 470 339 458 337zM475 326 489 330 492 340zM489 330 497 329 502 345zM513 332 522 331 524 348zM629 343 645 345 648 357zM-11 287 -2 290 2 301zM63 298 82 314 67 312zM77 300 93 312 82 314zM129 304 142 307 146 318zM251 318 266 332 260 332zM264 316 276 330 266 332zM274 321 289 331 276 330zM306 322 323 337 314 337zM591 351 607 368 600 366zM603 353 612 353 623 369zM603 353 623 369 607 368zM612 353 623 354 629 368zM648 357 665 373 656 372zM-15 300 0 313 -13 312zM161 318 172 334 163 332zM223 328 239 339 229 341zM289 331 299 333 306 346zM343 339 354 340 362 351zM377 343 390 343 395 359zM390 343 400 345 406 358zM-13 312 7 329 -6 326zM109 326 119 330 126 340zM109 326 126 340 117 339zM119 330 129 327 140 342zM195 337 206 337 213 348zM263 343 273 342 277 359zM395 359 415 372 404 369zM430 360 439 362 446 373zM462 364 472 363 476 376zM596 380 610 390 599 389zM29 328 46 343 30 344zM156 346 178 359 164 358zM192 349 202 349 212 364zM404 369 415 372 419 386zM420 372 432 372 438 386zM563 389 582 400 572 400zM63 345 82 362 71 361zM196 361 213 374 207 376zM252 366 261 369 268 379zM495 394 509 391 513 408zM597 403 613 419 598 413zM617 402 633 420 621 417zM-6 349 3 351 14 368zM17 353 33 367 21 366zM59 361 76 374 67 372zM213 374 233 387 221 389zM261 379 268 379 274 394zM290 382 304 385 309 397zM349 387 356 388 362 404zM368 392 380 391 387 406zM499 403 517 417 508 416zM558 412 574 426 564 421zM598 413 613 419 618 429zM598 413 618 429 606 428zM657 420 666 424 671 436zM657 420 671 436 658 433zM666 424 675 426 680 437zM-1 363 15 379 9 379zM53 370 70 387 59 383zM243 388 256 392 258 403zM288 396 300 397 303 410zM317 396 337 414 328 409zM471 413 484 413 491 429zM549 421 564 421 567 435zM574 426 590 439 578 439zM648 435 668 449 654 447zM658 433 671 436 675 447zM49 380 59 383 68 397zM171 393 183 397 190 407zM290 408 310 422 301 422zM425 424 433 422 443 437zM433 422 451 436 443 437zM559 436 571 450 563 450zM635 445 647 459 636 456zM209 410 218 412 227 425zM218 412 240 426 227 425zM235 413 241 414 250 428zM241 414 263 430 250 428zM563 450 571 450 579 461zM215 425 227 425 232 440zM227 425 240 426 246 442zM280 430 295 431 299 444zM312 436 332 449 323 447zM340 439 354 451 340 448zM373 440 385 455 377 454zM436 447 450 462 444 459zM579 461 596 478 586 477zM593 464 601 467 609 476zM593 464 609 476 596 478zM613 468 621 466 630 481zM198 434 219 447 208 449zM385 455 399 455 403 470zM421 458 429 460 438 475zM421 458 438 475 426 473zM551 470 567 484 556 484zM596 478 611 492 599 490zM663 483 673 484 680 496zM371 468 385 469 385 478zM395 470 403 470 409 481zM546 485 556 484 566 498zM546 485 566 498 552 498zM556 484 567 484 576 501zM578 489 594 503 583 500zM592 488 610 501 594 503zM92 449 106 463 95 459zM346 476 363 487 351 487zM378 478 385 478 394 490zM673 509 683 511 690 524zM683 511 693 513 701 526zM253 477 269 491 258 490zM328 484 339 488 344 501zM339 488 353 500 344 501zM402 495 424 510 411 508zM416 497 432 511 424 510zM567 513 589 523 572 525zM590 516 607 527 600 528zM637 516 647 517 650 531zM647 517 661 532 650 531zM45 467 58 470 64 483zM179 482 193 484 193 496zM225 487 233 486 242 502zM281 492 294 508 286 508zM401 508 411 508 416 521zM424 510 438 523 425 522zM476 511 489 512 492 526zM551 523 563 524 571 535zM572 525 589 523 590 541zM572 525 590 541 581 536zM616 527 628 529 634 542zM54 483 64 483 68 495zM142 492 152 490 156 507zM152 490 167 504 156 507zM174 492 182 498 193 506zM207 500 217 498 226 514zM242 502 249 504 257 516zM470 524 480 524 490 539zM571 535 586 550 579 547zM602 537 615 538 617 553zM634 542 655 558 641 553zM4 490 19 502 10 502zM138 503 145 503 155 517zM193 506 200 509 205 522zM236 511 255 527 241 528zM278 516 292 518 298 532zM335 525 349 536 341 538zM346 525 355 525 363 538zM355 525 376 542 363 538zM545 543 557 549 559 558zM596 552 611 552 613 565zM661 558 674 562 680 572zM53 508 72 520 59 521zM184 521 194 524 202 535zM319 533 337 547 324 548zM559 558 573 561 575 574zM585 560 593 561 596 574zM672 569 690 587 675 584zM72 520 90 534 74 532zM145 531 161 529 167 542zM215 534 222 534 230 552zM256 539 268 540 272 556zM359 553 376 566 365 561zM521 567 530 570 538 580zM530 570 543 570 547 581zM553 573 563 575 572 585zM586 573 604 590 592 589zM-12 522 2 526 4 537zM120 537 133 538 137 553zM167 542 184 558 171 558zM288 554 296 557 303 570zM296 557 310 570 303 570zM662 597 673 595 677 609zM115 548 124 551 131 564zM294 566 308 583 295 582zM310 570 322 572 331 587zM310 570 331 587 322 586zM488 588 508 603 494 602zM533 596 552 607 536 607zM575 597 588 599 596 614zM598 599 611 601 616 615zM645 604 653 605 662 619zM645 604 662 619 652 616zM-19 547 -4 560 -14 561zM90 558 107 572 94 571zM175 571 196 583 181 582zM187 570 202 584 196 583zM220 571 230 573 236 588zM245 576 258 588 251 589zM308 583 322 586 323 595zM308 583 323 595 316 596zM355 586 366 586 368 602zM394 590 416 608 405 605zM508 603 523 618 512 619zM560 611 574 609 579 625zM638 618 652 616 653 632zM652 616 664 635 653 632zM-14 561 -4 560 2 576zM8 565 17 565 25 578zM8 565 25 578 14 578zM26 565 38 568 44 579zM171 580 181 582 187 594zM181 582 196 583 198 598zM258 588 268 590 277 606zM336 599 351 614 342 613zM512 619 523 618 527 629zM523 618 534 620 537 633zM579 625 591 624 594 635zM579 625 594 635 583 635zM112 586 124 586 128 602zM124 586 137 605 128 602zM153 593 170 608 162 603zM166 594 177 595 185 605zM166 594 185 605 170 608zM198 598 208 598 216 609zM264 601 284 615 271 618zM297 608 317 619 307 618zM331 610 342 613 349 623zM331 610 349 623 334 624zM364 615 377 613 381 626zM383 617 405 629 392 630zM507 628 516 631 526 643zM562 635 579 649 566 645zM37 594 49 594 58 607zM271 618 290 631 275 631zM291 617 307 634 301 631zM317 619 333 635 321 633zM514 642 529 655 521 654zM556 648 572 661 561 659zM591 648 602 653 604 665zM645 654 658 654 663 668zM3 600 13 600 21 614zM48 607 64 621 53 617zM89 611 101 608 107 622zM123 615 139 626 128 628zM164 619 176 621 185 632zM352 638 362 636 370 651zM362 636 382 652 370 651zM497 650 505 655 515 668zM521 654 536 669 527 669zM529 655 546 671 536 669zM554 660 568 671 559 673zM561 659 580 673 568 671zM572 661 588 675 580 673zM584 661 601 676 588 675zM-6 614 15 627 4 625zM5 613 21 614 24 629zM503 665 515 668 522 682zM515 668 528 680 522 682zM580 673 596 687 583 688z'/><path fill='#797b78' d='M140 -91 159 -75 148 -80zM209 -82 226 -71 212 -69zM572 -46 585 -31 576 -34zM582 -46 593 -43 601 -33zM104 -81 121 -67 107 -68zM194 -71 202 -71 209 -59zM246 -66 257 -69 266 -53zM366 -54 379 -54 386 -43zM399 -52 415 -38 403 -36zM455 -46 467 -47 471 -33zM567 -32 576 -34 581 -20zM567 -32 581 -20 568 -19zM101 -69 107 -68 117 -57zM107 -68 121 -67 128 -57zM165 -65 180 -50 169 -52zM365 -43 376 -41 378 -30zM403 -36 425 -25 413 -25zM493 -28 504 -31 512 -13zM514 -29 531 -13 521 -16zM581 -20 596 -20 599 -4zM244 -43 258 -41 263 -31zM368 -29 382 -17 373 -17zM563 -9 583 4 572 4zM578 -10 585 -7 596 8zM607 -7 619 -5 625 11zM210 -34 224 -20 217 -19zM353 -19 360 -19 371 -5zM360 -19 373 -17 378 -5zM448 -8 465 -8 465 4zM448 -8 465 4 455 5zM596 8 613 18 601 19zM613 10 633 21 623 19zM625 11 636 11 643 25zM625 11 643 25 633 21zM159 -29 169 -24 177 -14zM184 -27 194 -25 196 -12zM357 -6 376 6 364 5zM480 5 496 22 487 18zM108 -22 128 -7 118 -8zM165 -17 183 0 172 -2zM376 6 387 10 392 23zM162 -1 180 10 167 11zM301 10 320 27 308 27zM457 27 475 45 462 43zM511 33 520 33 529 46zM591 42 609 57 593 54zM121 5 137 21 128 19zM156 9 167 11 170 21zM320 27 333 26 334 39zM397 37 410 34 415 51zM462 43 475 45 480 55zM509 47 516 48 524 60zM571 51 585 54 593 65zM571 51 593 65 576 66zM609 57 616 56 622 70zM631 60 644 73 635 72zM284 37 292 34 299 47zM316 40 333 52 323 54zM676 75 695 89 686 91zM464 67 476 68 479 80zM618 81 632 96 623 94zM652 84 659 88 667 101zM50 38 61 35 69 52zM613 95 629 111 618 106zM643 97 664 112 649 110zM56 50 76 64 63 62zM88 53 108 66 95 66zM397 85 414 100 406 99zM486 95 499 95 501 110zM406 99 418 112 411 110zM414 100 431 113 418 112zM471 105 484 104 485 119zM513 109 525 112 529 125zM600 119 621 132 605 129zM645 125 658 126 661 136zM658 126 672 136 661 136zM145 85 157 82 161 97zM332 101 352 117 340 116zM347 104 361 119 352 117zM605 129 623 144 616 144zM601 141 622 157 606 158zM683 150 689 154 699 165zM69 98 84 111 75 111zM224 115 232 116 241 129zM232 116 253 131 241 129zM326 126 336 129 340 142zM368 129 382 146 371 144zM389 134 404 149 395 147zM401 134 413 137 414 147zM401 134 414 147 404 149zM533 148 544 149 548 162zM544 149 554 149 559 164zM84 111 105 128 92 124zM264 134 276 134 278 146zM276 134 286 134 291 146zM340 142 354 152 348 154zM382 146 395 147 401 159zM429 151 442 164 436 162zM480 155 502 171 491 171zM513 158 525 161 530 171zM5 115 17 121 23 134zM5 115 23 134 11 131zM17 121 34 131 23 134zM454 163 472 177 463 178zM476 168 491 171 492 179zM530 171 551 187 536 185zM100 142 114 153 106 152zM109 143 118 143 128 156zM198 151 216 165 205 163zM239 156 259 168 245 169zM343 166 354 168 360 179zM354 168 369 180 360 179zM415 173 430 175 433 190zM415 173 433 190 425 187zM483 178 500 194 487 192zM530 185 536 185 543 201zM603 190 616 193 622 207zM616 193 632 208 622 207zM636 194 652 213 646 210zM667 200 684 212 678 212zM-7 140 11 157 -1 156zM16 142 35 157 25 156zM28 145 39 146 43 157zM60 149 69 150 77 161zM216 165 226 166 229 176zM464 191 478 191 482 204zM464 191 482 204 474 203zM487 192 505 206 496 208zM632 208 646 210 651 221zM652 213 662 209 668 224zM662 209 678 212 685 227zM261 183 276 181 278 196zM276 181 288 182 293 195zM319 189 331 189 338 202zM339 188 355 206 347 202zM420 199 430 199 436 212zM463 203 477 218 465 215zM529 211 547 224 531 225zM561 213 578 228 568 224zM585 215 599 230 588 229zM604 215 615 219 621 232zM651 221 657 225 667 238zM41 173 54 186 47 181zM118 179 125 181 133 195zM193 188 207 186 210 203zM245 191 264 208 252 204zM325 200 338 202 340 212zM588 229 609 242 594 239zM621 232 639 247 631 243zM630 232 647 249 639 247zM276 207 284 210 294 223zM284 210 299 212 305 225zM383 220 402 232 391 233zM-4 189 13 206 0 204zM315 225 326 226 333 238zM326 226 339 226 345 242zM326 226 345 242 333 238zM339 226 354 239 345 242zM370 228 389 246 375 245zM422 236 436 238 442 248zM515 247 529 257 517 256zM588 252 603 256 607 269zM623 258 637 273 627 271zM636 259 651 270 637 273zM675 260 690 265 696 278zM26 205 39 221 30 217zM122 215 141 229 129 231zM242 229 251 230 258 243zM375 245 392 260 379 254zM488 256 496 257 500 267zM506 256 522 272 516 267zM572 262 584 265 592 278zM670 276 691 286 681 287zM83 225 99 237 92 239zM379 254 401 271 387 270zM392 260 405 259 410 271zM592 278 602 281 607 295zM26 230 37 233 38 244zM92 239 99 237 105 252zM257 257 274 267 264 268zM401 271 410 271 414 283zM410 271 424 285 414 283zM429 273 450 290 437 287zM443 274 458 288 450 290zM455 276 467 275 470 288zM455 276 470 288 458 288zM467 275 475 277 482 289zM649 299 669 313 658 308zM138 258 158 267 144 270zM406 284 419 299 410 295zM513 292 523 295 528 311zM611 305 629 321 619 317zM158 267 175 283 162 285zM181 272 194 287 188 284zM268 279 277 284 283 295zM288 282 301 284 308 299zM539 312 552 310 557 325zM619 317 629 321 636 334zM673 325 691 338 679 338zM686 324 703 340 691 338zM11 265 21 267 26 279zM87 276 101 291 94 289zM218 290 234 305 225 302zM228 292 245 305 234 305zM241 292 255 304 245 305zM308 299 323 313 314 310zM371 304 387 319 377 316zM482 316 494 317 497 329zM501 318 522 331 513 332zM517 320 523 322 534 335zM534 322 553 334 543 333zM191 298 203 299 208 314zM234 305 251 318 243 315zM255 304 268 305 274 321zM343 314 356 317 363 328zM365 315 382 333 370 328zM401 318 416 334 402 333zM422 321 434 324 436 339zM629 343 648 357 637 359zM645 345 651 346 659 359zM274 321 284 320 289 331zM327 326 337 327 343 339zM363 328 370 328 377 343zM429 337 445 347 436 348zM436 339 454 351 445 347zM483 340 498 358 489 354zM515 344 524 348 530 358zM637 359 648 357 656 372zM659 359 677 374 665 373zM668 362 679 361 688 373zM668 362 688 373 677 374zM679 361 689 362 697 377zM125 314 134 316 144 328zM465 352 482 365 472 363zM541 362 561 372 550 374zM629 368 651 385 640 384zM0 313 11 316 19 331zM19 320 38 331 29 328zM56 322 63 321 73 337zM151 331 168 345 156 346zM263 343 277 359 269 355zM375 354 381 357 388 371zM550 374 561 372 563 389zM580 376 596 380 599 389zM606 380 613 382 621 391zM105 339 117 339 118 352zM202 349 218 364 212 364zM249 355 259 354 261 369zM259 354 272 370 261 369zM503 379 517 396 509 391zM645 395 654 397 658 408zM645 395 658 408 647 408zM675 400 688 399 691 414zM63 345 78 346 82 362zM151 358 164 358 172 370zM212 364 218 364 225 376zM261 369 281 380 268 379zM328 376 349 387 339 387zM71 361 82 362 88 372zM71 361 88 372 76 374zM246 379 261 379 263 393zM314 383 333 402 317 396zM368 392 387 406 377 402zM403 393 416 397 417 407zM542 409 558 412 564 421zM542 409 564 421 549 421zM688 425 703 436 691 436zM-10 363 -1 363 9 379zM67 372 76 374 82 383zM362 404 378 414 372 418zM508 416 524 432 515 431zM39 381 49 380 56 394zM160 394 178 409 166 408zM183 397 192 395 197 411zM316 412 328 409 331 425zM401 420 418 431 406 431zM413 420 425 424 428 437zM448 425 458 424 466 436zM491 429 501 431 508 445zM491 429 508 445 499 444zM533 435 549 448 543 448zM590 439 606 453 594 451zM255 414 274 430 263 430zM301 422 312 436 303 435zM351 429 373 440 359 437zM363 427 377 431 380 440zM385 430 399 431 401 445zM418 431 428 437 436 447zM582 450 601 467 593 464zM636 456 647 459 654 470zM664 460 679 473 666 471zM160 417 179 434 169 433zM380 440 392 443 399 455zM448 448 458 449 467 461zM467 449 487 463 477 465zM500 452 511 457 520 469zM511 457 523 456 532 468zM613 468 630 481 617 479zM89 426 99 425 109 437zM99 425 114 426 116 439zM232 440 248 455 237 453zM255 441 264 444 269 454zM255 441 269 454 263 456zM275 441 290 445 293 460zM323 447 341 460 327 458zM367 454 377 454 385 469zM429 460 444 459 450 475zM544 470 556 484 546 485zM572 474 586 477 592 488zM637 480 650 484 656 498zM673 484 688 500 680 496zM208 449 225 464 210 461zM307 457 324 473 310 473zM438 475 450 475 453 488zM514 483 524 482 531 494zM538 483 546 485 552 498zM599 490 618 504 610 501zM611 492 626 491 630 503zM611 492 630 503 618 504zM626 491 634 495 640 505zM235 461 245 464 253 477zM257 468 264 469 272 482zM302 472 310 473 318 482zM462 489 477 488 484 502zM660 509 673 509 681 524zM63 460 72 459 78 472zM175 468 187 469 193 484zM230 476 238 477 246 488zM259 476 281 492 269 491zM272 482 286 482 292 492zM461 499 470 499 476 511zM624 516 637 516 640 529zM624 516 640 529 628 529zM647 517 658 520 661 532zM58 470 72 469 76 485zM179 482 193 496 182 498zM225 487 242 502 229 501zM233 486 249 504 242 502zM281 492 292 492 294 508zM302 494 318 511 308 510zM335 498 348 515 342 511zM389 504 401 508 407 518zM511 515 524 530 513 529zM563 524 572 525 581 536zM129 492 145 503 138 503zM286 508 300 520 292 518zM294 508 313 522 300 520zM308 510 320 524 313 522zM425 522 447 537 436 533zM623 540 634 542 641 553zM16 492 30 504 19 502zM35 492 53 508 42 506zM79 495 96 509 84 512zM91 496 110 510 96 509zM145 503 164 518 155 517zM200 509 218 524 205 522zM226 514 236 511 241 528zM271 517 278 516 287 529zM346 525 363 538 349 536zM436 533 447 537 449 547zM447 537 453 538 460 548zM490 539 501 542 502 554zM508 543 520 542 529 558zM520 542 532 542 541 555zM545 543 559 558 546 558zM586 550 596 552 607 566zM110 510 120 513 124 527zM110 510 124 527 117 527zM120 513 128 514 135 529zM272 531 287 529 290 546zM287 529 298 532 301 543zM287 529 301 543 290 546zM307 534 319 533 324 548zM403 545 419 543 424 559zM403 545 424 559 414 555zM680 572 697 585 690 587zM8 512 20 528 11 529zM27 516 45 529 35 531zM135 529 145 531 151 540zM189 531 202 535 211 548zM233 537 249 539 251 553zM402 556 417 569 407 566zM530 570 547 581 538 580zM563 575 585 587 572 585zM586 573 596 574 604 590zM-25 522 -12 522 -3 539zM20 528 35 531 40 543zM35 531 45 529 51 543zM74 532 91 546 83 547zM96 538 115 548 107 549zM514 578 533 596 520 591zM673 595 679 598 688 610zM679 598 695 596 701 610zM4 537 18 541 24 552zM26 541 42 554 32 556zM115 548 131 564 124 565zM171 558 184 558 187 570zM204 561 220 571 209 571zM303 570 322 586 308 583zM355 575 373 590 366 586zM446 582 454 588 465 601zM488 588 502 590 508 603zM588 599 598 599 603 613zM666 607 677 609 679 621zM677 609 693 622 679 621zM-13 551 8 565 -4 560zM-3 553 12 549 17 565zM42 554 64 570 53 566zM152 566 163 570 171 580zM163 570 181 582 171 580zM245 576 255 575 258 588zM263 580 281 593 268 590zM276 582 286 582 291 595zM286 582 306 594 291 595zM322 586 331 587 336 599zM536 607 559 621 542 622zM152 577 159 578 166 594zM202 584 222 601 208 598zM215 585 225 586 234 600zM281 593 297 608 285 604zM306 594 316 596 321 609zM498 615 512 619 516 631zM534 620 542 622 551 634zM534 620 551 634 537 633zM591 624 598 628 608 638zM645 631 659 645 650 645zM653 632 664 635 669 646zM-21 573 -7 585 -15 586zM44 579 55 583 63 596zM79 585 90 586 97 595zM90 586 97 586 106 598zM208 598 222 601 227 614zM208 598 227 614 216 609zM256 603 271 618 261 615zM264 601 277 606 284 615zM277 606 285 604 291 617zM321 609 334 624 324 621zM516 631 533 646 526 643zM551 634 562 635 566 645zM669 646 691 662 679 659zM686 645 694 648 697 663zM-7 585 13 600 3 600zM7 589 15 588 22 601zM7 589 22 601 13 600zM97 595 112 613 101 608zM119 600 128 602 137 616zM152 602 162 603 164 619zM261 615 271 618 275 631zM284 615 291 617 301 631zM405 629 419 643 409 643zM445 635 463 647 451 649zM556 648 566 645 572 661zM591 648 604 665 597 664zM602 653 620 666 604 665zM658 654 669 658 675 673zM679 659 691 662 697 674zM-8 598 5 613 -6 614zM13 600 22 601 31 616zM35 602 53 617 41 615zM89 611 107 622 96 624zM246 624 257 629 259 637zM246 624 259 637 247 640zM307 634 321 633 326 647zM321 633 338 645 326 647zM333 635 343 637 350 647zM362 636 374 640 382 652zM663 668 675 673 681 684zM31 616 41 615 44 628zM53 617 70 629 55 631zM96 624 115 639 101 634zM107 622 125 640 115 639zM164 628 170 628 178 641zM280 642 299 654 291 657zM326 647 338 645 342 660zM481 665 493 665 499 677z'/><path fill='#7a7c79' d='M99 -97 107 -97 113 -81zM140 -91 155 -90 159 -75zM216 -81 231 -81 233 -69zM240 -83 257 -69 246 -66zM450 -57 457 -57 467 -47zM450 -57 467 -47 455 -46zM491 -54 511 -42 499 -41zM559 -46 572 -46 576 -34zM113 -81 133 -68 121 -67zM170 -75 185 -62 176 -65zM366 -54 386 -43 376 -41zM511 -42 525 -25 514 -29zM576 -34 596 -20 581 -20zM194 -61 209 -59 216 -46zM461 -32 478 -18 469 -19zM563 -20 568 -19 578 -10zM106 -56 119 -45 109 -45zM393 -27 401 -27 409 -13zM458 -19 469 -19 474 -5zM469 -19 478 -18 482 -3zM177 -39 194 -25 184 -27zM189 -39 195 -38 203 -24zM538 -0 547 4 556 15zM538 -0 556 15 544 11zM558 4 572 4 579 17zM169 -24 186 -14 177 -14zM378 -5 394 8 387 10zM423 0 439 14 431 12zM435 -1 450 13 439 14zM514 7 531 22 518 25zM165 -17 177 -14 183 0zM376 6 392 23 379 20zM431 12 439 14 449 26zM603 33 621 48 612 45zM662 35 671 38 675 50zM148 -2 167 11 156 9zM578 41 593 54 585 54zM644 50 659 63 649 61zM278 22 290 21 292 34zM462 43 480 55 468 54zM649 61 659 63 664 73zM170 21 183 24 189 36zM415 51 429 63 418 61zM510 59 524 60 528 73zM329 66 342 78 335 79zM439 74 446 75 453 90zM522 96 531 101 539 112zM598 106 609 106 611 121zM-17 53 1 67 -5 64zM325 88 340 93 347 104zM427 99 440 99 440 112zM491 107 509 120 498 121zM513 109 529 125 518 123zM600 119 611 121 621 132zM633 119 655 134 643 135zM133 83 145 85 154 98zM157 82 172 96 161 97zM281 94 289 97 293 109zM391 109 400 109 402 122zM440 112 463 130 450 128zM498 121 509 120 515 133zM605 129 621 132 623 144zM643 135 655 134 656 149zM261 105 277 123 270 121zM373 121 389 134 378 131zM470 129 482 132 490 145zM529 133 544 149 533 148zM557 138 571 141 577 151zM670 148 683 150 684 166zM430 136 447 138 447 153zM554 149 565 150 573 167zM577 151 591 165 584 167zM585 152 603 169 591 165zM199 124 211 140 201 138zM276 134 291 146 278 146zM474 154 480 155 491 171zM548 162 563 178 556 175zM584 167 591 165 598 177zM646 174 665 186 652 187zM-7 114 5 115 11 131zM50 124 59 121 63 137zM71 125 84 126 85 141zM401 159 415 173 404 172zM454 163 465 166 472 177zM556 175 563 178 569 188zM633 181 644 185 646 199zM-24 129 -13 128 -7 140zM1 127 16 142 3 140zM63 137 83 153 69 150zM100 142 109 143 114 153zM198 151 210 153 216 165zM295 158 309 161 314 173zM387 170 393 171 399 184zM441 175 450 174 456 191zM463 178 472 177 478 191zM561 189 577 203 565 202zM596 192 603 190 610 205zM603 190 622 207 610 205zM680 201 695 203 698 217zM50 146 60 149 67 160zM50 146 67 160 56 162zM390 184 399 184 409 199zM399 184 420 199 409 199zM425 187 433 190 439 198zM487 192 500 194 505 206zM500 194 512 194 517 208zM500 194 517 208 505 206zM512 194 523 196 529 211zM565 202 577 203 585 215zM622 207 632 208 640 223zM662 209 685 227 668 224zM239 182 256 180 258 192zM310 185 325 200 311 198zM482 204 496 208 503 219zM529 211 541 212 547 224zM615 219 630 232 621 232zM668 224 687 238 679 240zM685 227 700 237 687 238zM181 184 193 188 196 200zM300 199 311 198 318 212zM311 198 330 215 318 212zM338 202 352 214 340 212zM399 211 416 212 419 222zM444 214 457 215 461 228zM520 219 541 235 527 232zM679 240 696 254 680 252zM24 179 32 181 38 196zM92 190 108 201 92 203zM233 202 246 218 236 216zM244 204 252 204 258 218zM276 207 294 223 284 222zM340 212 357 230 346 228zM375 218 391 233 379 232zM669 247 690 265 675 260zM4 193 20 195 26 205zM204 214 217 213 223 229zM402 232 415 237 418 250zM667 260 686 275 670 276zM13 206 30 217 20 217zM47 208 60 223 52 221zM230 226 249 244 238 243zM263 233 275 232 284 246zM296 235 308 235 315 248zM375 245 389 246 392 260zM442 248 455 250 457 264zM529 257 543 262 548 272zM551 259 571 278 559 277zM572 262 592 278 581 278zM607 269 623 283 613 278zM663 275 681 287 670 284zM686 275 696 278 699 289zM-16 216 1 230 -12 227zM9 216 20 217 26 230zM20 217 37 233 26 230zM150 234 164 234 167 247zM150 234 167 247 156 247zM173 233 187 249 179 248zM206 238 221 250 213 249zM238 243 257 257 244 256zM258 243 276 255 266 254zM315 248 329 251 332 263zM315 248 332 263 319 263zM445 261 467 275 455 276zM478 269 494 270 498 283zM516 267 529 286 521 283zM538 274 548 272 552 288zM548 272 559 277 565 289zM592 278 607 295 596 293zM602 281 613 278 620 294zM-18 224 -5 241 -16 241zM-12 227 1 230 5 242zM26 230 38 244 30 246zM257 257 266 254 274 267zM332 263 351 276 340 278zM355 266 362 267 371 279zM540 283 552 288 556 298zM5 242 18 245 28 256zM183 260 198 276 187 273zM237 266 251 266 254 279zM237 266 254 279 246 279zM264 268 274 267 277 284zM307 274 315 275 324 289zM523 295 537 298 539 312zM523 295 539 312 528 311zM669 313 686 324 673 325zM36 258 47 258 51 272zM68 258 81 263 87 276zM68 258 87 276 73 272zM112 267 121 268 131 277zM220 279 232 278 241 292zM232 278 246 279 251 294zM246 279 262 295 251 294zM277 284 295 297 283 295zM301 284 313 285 315 300zM389 292 400 295 402 306zM495 304 506 306 517 320zM572 312 587 316 589 326zM639 320 654 321 655 335zM11 265 26 279 12 280zM28 270 45 284 39 282zM73 272 87 276 94 289zM175 283 191 298 179 299zM208 288 225 302 212 299zM218 290 228 292 234 305zM228 292 241 292 245 305zM418 309 425 310 434 324zM447 314 466 326 455 324zM462 314 473 317 475 326zM473 317 489 330 475 326zM679 338 691 338 694 352zM72 286 84 298 77 300zM127 289 142 307 129 304zM191 298 208 314 195 312zM299 311 314 310 315 324zM299 311 315 324 306 322zM332 311 348 329 337 327zM343 314 363 328 348 329zM377 316 396 329 382 333zM387 319 401 318 402 333zM466 326 483 340 470 339zM497 329 513 332 515 344zM645 345 659 359 648 357zM662 346 673 350 679 361zM685 349 705 364 689 362zM117 304 129 304 134 316zM187 312 200 322 190 322zM243 315 251 318 260 332zM243 315 260 332 247 330zM251 318 264 316 266 332zM370 328 382 333 390 343zM402 333 416 334 425 347zM402 333 425 347 414 344zM223 328 235 328 239 339zM247 330 263 343 254 339zM390 343 406 358 395 359zM465 352 480 353 482 365zM600 366 613 382 606 380zM90 325 105 339 92 337zM206 337 216 338 223 353zM206 337 223 353 213 348zM293 345 315 358 304 358zM351 353 365 366 355 367zM561 372 573 377 578 387zM7 329 19 331 23 343zM105 339 118 352 109 350zM168 345 182 344 188 358zM237 352 252 366 240 368zM322 361 344 377 328 376zM404 369 419 386 405 382zM510 379 524 381 527 395zM555 386 563 389 572 400zM621 391 629 392 637 405zM10 339 23 343 25 357zM78 346 96 360 82 362zM151 358 172 370 158 368zM272 370 290 382 281 380zM365 379 380 391 368 392zM386 381 396 383 403 393zM537 398 550 398 558 412zM550 398 561 401 565 411zM617 402 627 404 633 420zM-16 352 -1 363 -10 363zM36 356 51 358 53 370zM125 364 138 365 146 378zM213 374 225 376 233 387zM558 412 565 411 574 426zM565 411 586 426 574 426zM675 426 688 425 691 436zM-21 360 -10 363 -6 375zM21 366 33 367 39 381zM233 387 249 403 238 404zM317 396 333 402 337 414zM343 399 353 400 355 413zM343 399 355 413 345 412zM353 400 362 404 372 418zM471 413 491 429 480 429zM9 379 22 391 10 392zM29 381 43 395 32 394zM303 410 316 412 318 421zM337 414 345 412 351 429zM345 412 355 413 363 427zM345 412 363 427 351 429zM480 429 499 444 487 441zM578 439 594 451 582 450zM668 449 675 447 685 459zM-22 389 -12 388 -3 399zM10 392 30 403 19 405zM32 394 43 395 52 408zM43 395 56 394 60 409zM43 395 60 409 52 408zM156 408 166 408 173 420zM385 430 401 445 392 443zM487 441 499 444 500 452zM594 451 613 468 601 467zM606 453 615 454 621 466zM672 460 685 459 691 473zM685 459 693 462 702 477zM6 401 23 417 14 414zM30 403 39 404 45 421zM193 421 203 422 210 439zM240 426 250 428 255 441zM240 426 255 441 246 442zM250 428 263 430 264 444zM373 440 380 440 385 455zM401 445 414 447 421 458zM458 449 477 465 467 461zM494 452 500 452 511 470zM500 452 520 469 511 470zM554 462 568 461 572 474zM579 461 593 464 596 478zM-19 412 -8 413 -3 427zM89 426 109 437 96 437zM299 444 312 448 314 461zM312 448 327 458 314 461zM332 449 340 448 346 465zM377 454 385 455 395 470zM399 455 409 455 417 472zM444 459 450 462 457 474zM444 459 457 474 450 475zM520 469 538 483 524 482zM39 429 55 445 46 445zM51 430 70 448 55 445zM327 458 341 460 346 476zM426 473 438 475 444 483zM450 475 457 474 462 489zM524 482 538 483 541 495zM648 495 656 498 660 509zM14 438 26 440 30 454zM55 445 70 448 72 459zM187 459 198 460 204 471zM210 461 225 464 230 476zM289 469 302 472 304 483zM453 488 462 489 470 499zM477 488 492 501 484 502zM484 489 497 492 503 503zM497 492 506 491 513 505zM618 504 630 503 637 516zM652 509 671 524 658 520zM30 454 45 467 36 466zM72 459 84 461 90 471zM143 464 151 466 160 481zM175 468 193 484 179 482zM238 477 258 490 246 488zM328 484 344 501 335 498zM351 487 364 501 353 500zM384 491 394 490 401 508zM615 513 624 516 628 529zM637 516 650 531 640 529zM204 484 211 487 217 498zM246 488 258 490 265 502zM389 504 407 518 394 517zM411 508 424 510 425 522zM600 528 615 538 602 537zM640 529 650 531 660 545zM676 534 683 537 690 549zM683 537 694 535 705 548zM40 479 61 493 49 492zM64 483 79 495 68 495zM76 485 91 496 79 495zM193 496 207 500 211 511zM229 501 247 513 236 511zM242 502 257 516 247 513zM374 517 384 515 389 532zM374 517 389 532 380 527zM492 526 501 527 508 543zM535 531 549 533 557 549zM560 533 579 547 567 548zM16 492 28 490 30 504zM200 509 211 511 218 524zM292 518 300 520 307 534zM292 518 307 534 298 532zM436 533 449 547 437 545zM520 542 541 555 529 558zM611 552 617 553 629 567zM655 558 661 558 672 569zM655 558 672 569 656 570zM674 562 692 575 680 572zM-23 500 -7 515 -15 513zM155 517 164 518 172 531zM593 561 607 566 607 576zM648 571 664 582 656 581zM680 572 692 575 697 585zM72 520 84 524 90 534zM117 527 133 538 120 537zM124 527 145 538 133 538zM181 534 189 531 197 548zM268 540 278 542 288 554zM344 549 365 561 350 562zM503 564 514 578 503 577zM543 570 561 583 547 581zM596 574 607 576 618 588zM11 529 20 528 26 541zM45 529 63 545 51 543zM57 529 63 533 72 548zM174 543 184 546 191 560zM272 556 294 566 278 568zM308 557 322 572 310 570zM365 561 376 566 379 579zM450 574 463 575 468 587zM484 576 497 576 502 590zM484 576 502 590 488 588zM497 576 509 591 502 590zM538 580 555 596 543 596zM547 581 561 583 568 596zM-14 536 -3 539 -3 553zM171 558 187 570 175 571zM258 563 276 582 263 580zM322 572 335 572 340 585zM355 575 367 577 373 590zM502 590 515 604 508 603zM568 596 575 597 581 610zM653 605 669 622 662 619zM12 549 24 552 26 565zM112 560 124 565 127 576zM443 598 454 600 459 612zM465 601 479 614 466 614zM552 607 567 622 559 621zM669 622 679 621 689 635zM53 566 65 584 55 583zM82 569 94 571 97 586zM82 569 97 586 90 586zM115 573 133 587 124 586zM159 578 177 595 166 594zM316 596 331 610 321 609zM359 598 368 602 377 613zM405 605 420 621 406 618zM444 612 459 612 460 626zM479 614 488 616 496 627zM498 615 516 631 507 628zM679 633 694 648 686 645zM-8 573 7 589 -7 585zM14 578 25 578 28 590zM321 609 331 610 334 624zM351 614 364 615 372 627zM406 618 427 633 411 630zM486 628 503 639 490 639zM551 634 566 645 556 648zM594 635 608 638 611 654zM659 645 669 646 679 659zM686 645 697 663 691 662zM324 621 343 637 333 635zM405 629 411 630 419 643zM490 639 505 655 497 650zM526 643 533 646 538 656zM611 654 621 652 630 665zM-8 598 3 600 5 613zM112 613 128 628 120 623zM158 618 164 619 170 628zM554 660 561 659 568 671zM584 661 597 664 601 676zM597 664 604 665 614 675zM651 667 670 684 654 679zM663 668 681 684 670 684zM-6 614 5 613 15 627zM5 613 24 629 15 627zM31 616 44 628 35 628zM41 615 55 631 44 628zM120 623 128 628 135 637zM247 640 268 651 254 651zM362 650 376 665 368 661zM481 665 499 677 483 674zM515 668 527 669 528 680zM647 681 654 679 663 696z'/><path fill='#7b7d7a' d='M188 -85 195 -87 202 -71zM188 -85 202 -71 194 -71zM195 -87 209 -82 212 -69zM240 -83 248 -77 257 -69zM347 -70 366 -54 354 -56zM370 -68 391 -53 379 -54zM506 -51 517 -51 521 -39zM559 -46 576 -34 567 -32zM170 -75 178 -73 185 -62zM178 -73 194 -61 185 -62zM194 -71 209 -59 194 -61zM348 -59 365 -43 351 -44zM354 -56 376 -41 365 -43zM542 -37 552 -36 563 -20zM176 -65 185 -62 190 -48zM194 -61 216 -46 205 -47zM242 -56 252 -55 258 -41zM395 -39 413 -25 401 -27zM504 -31 514 -29 521 -16zM568 -19 585 -7 578 -10zM180 -50 195 -38 189 -39zM469 -19 482 -3 474 -5zM512 -13 521 -16 527 1zM189 -39 203 -24 194 -25zM583 4 601 19 588 19zM393 -2 400 -1 406 12zM566 16 582 28 571 28zM108 -22 120 -19 128 -7zM418 12 431 12 433 24zM582 28 594 31 597 44zM662 35 675 50 663 49zM591 42 597 44 609 57zM621 48 640 59 631 60zM188 15 204 25 196 25zM410 34 418 35 428 50zM640 59 649 61 656 76zM672 65 682 65 691 77zM682 65 694 68 702 78zM334 39 347 44 352 57zM378 44 396 58 387 57zM323 54 333 52 340 65zM396 58 415 74 401 73zM429 63 446 75 439 74zM313 64 329 66 335 79zM348 65 358 70 363 83zM381 68 391 70 397 85zM427 75 445 90 431 88zM492 81 509 98 499 95zM504 85 513 85 522 96zM623 94 643 108 629 111zM657 98 667 101 671 113zM377 82 394 94 381 95zM478 91 491 107 484 104zM629 111 643 108 645 125zM373 95 391 109 379 108zM394 94 411 110 400 109zM414 100 427 99 431 113zM633 119 645 125 655 134zM103 79 118 91 107 90zM365 105 379 108 382 121zM621 132 638 148 623 144zM274 106 287 123 277 123zM395 121 402 122 413 137zM395 121 413 137 401 134zM536 134 549 136 554 149zM581 140 598 155 585 152zM601 141 616 144 622 157zM638 148 654 162 645 158zM224 115 241 129 231 129zM277 123 296 136 286 134zM287 123 298 122 307 138zM447 138 454 140 462 151zM565 150 584 167 573 167zM440 149 454 163 442 164zM548 162 559 164 563 178zM559 164 574 179 563 178zM661 171 676 187 665 186zM50 124 63 137 53 135zM59 121 76 135 63 137zM312 149 325 152 329 166zM348 154 361 168 354 168zM465 166 483 178 472 177zM34 131 50 146 39 146zM210 153 217 151 226 166zM343 166 360 179 343 180zM404 172 425 187 412 185zM450 174 464 191 456 191zM569 188 582 192 587 205zM646 199 662 209 652 213zM662 197 678 212 662 209zM278 171 290 171 295 187zM324 178 339 188 331 189zM377 181 398 196 386 194zM412 185 430 199 420 199zM610 205 622 207 630 218zM622 207 640 223 630 218zM678 212 684 212 695 229zM684 212 702 228 695 229zM239 182 258 192 245 191zM350 191 364 192 368 207zM439 198 452 200 457 215zM474 203 490 217 477 218zM561 213 573 213 578 228zM573 213 585 215 588 229zM52 171 61 171 68 185zM193 188 210 203 196 200zM293 195 310 209 299 212zM300 199 318 212 310 209zM325 200 340 212 330 215zM338 202 347 202 352 214zM355 206 375 218 361 218zM465 215 477 218 485 232zM477 218 490 217 499 232zM621 232 630 232 639 247zM630 232 645 232 647 249zM645 232 655 238 660 249zM190 198 196 200 204 214zM221 203 236 216 228 214zM330 215 340 212 346 228zM352 214 370 228 357 230zM450 227 468 242 461 241zM461 228 481 243 468 242zM527 232 541 235 546 250zM609 242 623 258 614 253zM38 196 55 208 47 208zM71 197 81 200 89 213zM71 197 89 213 78 213zM258 218 272 220 275 232zM346 228 357 230 362 242zM614 253 627 271 617 271zM643 257 654 259 663 275zM55 208 67 212 75 223zM122 215 132 217 141 229zM198 224 211 227 219 236zM333 238 345 242 349 252zM345 242 358 253 349 252zM389 246 396 248 405 259zM543 262 551 259 559 277zM561 264 572 262 581 278zM9 216 26 230 15 228zM39 221 52 221 57 234zM75 223 83 225 92 239zM358 253 369 256 375 268zM392 260 410 271 401 271zM457 264 468 263 475 277zM500 267 516 267 521 283zM500 267 521 283 508 281zM516 267 522 272 529 286zM522 272 540 283 529 286zM44 233 57 234 60 246zM200 250 217 265 206 261zM236 253 251 266 237 266zM429 273 443 274 450 290zM487 280 498 283 502 296zM498 283 508 281 513 292zM508 281 521 283 523 295zM529 286 546 300 537 298zM540 283 556 298 546 300zM607 295 627 304 611 305zM620 294 634 306 627 304zM84 249 103 262 92 265zM307 274 324 289 313 285zM537 298 546 300 552 310zM582 301 593 303 600 315zM-6 252 11 265 -1 263zM5 256 13 254 21 267zM112 267 131 277 118 277zM313 285 328 299 315 300zM331 288 344 287 353 303zM410 295 425 310 418 309zM519 310 534 322 523 322zM528 311 539 312 546 322zM600 315 609 316 612 328zM600 315 612 328 600 327zM629 321 639 320 645 333zM629 321 645 333 636 334zM63 270 73 272 78 284zM73 272 94 289 78 284zM251 294 268 305 255 304zM283 295 295 297 299 311zM425 310 446 327 434 324zM671 336 685 349 673 350zM45 284 63 298 55 298zM56 285 72 286 77 300zM72 286 78 284 84 298zM225 302 234 305 243 315zM245 305 264 316 251 318zM290 309 306 322 296 322zM609 340 623 354 612 353zM651 346 668 362 659 359zM33 294 40 293 50 310zM142 307 161 318 146 318zM306 322 315 324 323 337zM363 328 377 343 370 340zM572 351 587 366 576 365zM18 304 28 307 33 316zM50 310 59 310 63 321zM200 322 216 338 206 337zM314 337 330 350 319 348zM370 340 381 357 375 354zM576 365 596 380 580 376zM45 320 56 322 58 331zM74 325 92 337 81 337zM151 331 163 332 168 345zM273 342 288 357 277 359zM351 353 362 351 365 366zM439 362 455 373 446 373zM-17 326 2 338 -14 340zM-6 326 10 339 2 338zM19 331 30 344 23 343zM58 331 73 337 78 346zM213 348 223 353 230 363zM223 353 240 368 230 363zM336 364 348 365 349 378zM355 367 365 366 374 377zM563 389 578 387 582 400zM590 388 599 389 605 401zM599 389 617 402 605 401zM610 390 621 391 627 404zM663 396 684 411 672 408zM-14 340 3 351 -6 349zM30 344 46 343 51 358zM118 352 132 354 138 365zM178 359 188 358 194 372zM196 361 212 364 213 374zM212 364 225 376 213 374zM252 366 268 379 261 379zM261 369 272 370 281 380zM419 386 437 396 422 394zM509 391 526 406 513 408zM527 395 537 398 542 409zM605 401 621 417 613 419zM672 408 684 411 688 425zM684 411 696 425 688 425zM105 364 120 379 112 378zM118 365 125 364 134 378zM388 392 407 409 398 404zM565 411 578 411 586 426zM578 411 586 413 594 426zM643 422 657 420 658 433zM675 426 691 436 680 437zM44 372 59 383 49 380zM88 372 102 374 107 388zM233 387 243 388 249 403zM243 388 258 403 249 403zM256 392 270 404 258 403zM274 394 290 408 280 405zM333 402 345 412 337 414zM353 400 372 418 355 413zM377 402 387 406 389 420zM462 412 480 429 466 425zM541 419 549 421 559 436zM637 431 654 447 641 445zM-6 375 10 392 -1 391zM39 381 56 394 43 395zM82 383 95 388 103 399zM95 388 107 388 109 401zM515 431 524 432 529 444zM524 432 543 448 529 444zM603 439 610 442 615 454zM32 394 52 408 39 404zM56 394 68 397 70 408zM146 404 160 417 150 416zM218 412 235 413 240 426zM451 436 466 436 467 449zM466 436 481 454 467 449zM626 456 644 471 632 468zM-15 402 2 414 -8 413zM6 401 19 405 23 417zM274 430 280 430 290 445zM467 449 481 454 487 463zM511 457 532 468 520 469zM544 461 560 475 551 470zM568 461 586 477 572 474zM621 466 637 480 630 481zM23 417 39 429 31 431zM221 439 237 453 230 452zM377 454 395 470 385 469zM409 455 421 458 426 473zM450 462 470 473 457 474zM596 478 609 476 611 492zM673 484 687 487 688 500zM74 434 85 435 92 449zM116 439 126 439 136 451zM196 447 208 449 210 461zM219 447 230 452 235 461zM307 457 314 461 324 473zM314 461 332 475 324 473zM438 475 453 488 444 483zM450 475 462 489 453 488zM479 479 497 492 484 489zM524 482 541 495 531 494zM592 488 599 490 610 501zM634 495 648 495 652 509zM14 438 30 454 17 452zM46 445 63 460 53 455zM92 449 101 452 106 463zM121 451 143 464 128 466zM147 453 158 456 162 467zM158 456 166 458 175 468zM166 458 181 459 187 469zM181 459 194 473 187 469zM245 464 257 468 259 476zM257 468 272 482 259 476zM378 478 394 490 384 491zM418 482 431 486 437 499zM506 491 525 507 513 505zM618 504 637 516 624 516zM-11 449 -2 450 1 465zM43 458 58 470 45 467zM53 455 72 469 58 470zM363 487 370 489 376 501zM416 497 426 497 432 511zM503 503 519 518 511 515zM534 510 550 506 551 523zM681 524 690 524 694 535zM45 467 64 483 54 483zM58 470 76 485 64 483zM114 476 122 476 129 492zM233 486 246 488 249 504zM600 528 607 527 615 538zM308 510 318 511 320 524zM342 511 355 525 346 525zM438 523 453 538 447 537zM462 525 475 539 467 536zM480 524 501 542 490 539zM590 541 602 537 611 552zM672 547 682 547 686 563zM682 547 697 561 686 563zM4 490 16 492 19 502zM167 504 184 521 175 522zM180 507 194 524 184 521zM226 514 241 528 228 523zM257 516 272 531 261 528zM313 522 320 524 328 536zM401 531 408 531 419 543zM532 542 545 543 546 558zM567 548 579 547 585 560zM567 548 585 560 573 561zM-14 499 8 512 -7 515zM19 502 30 504 36 516zM218 524 233 537 222 534zM419 543 436 559 424 559zM496 554 502 554 513 569zM541 555 546 558 553 573zM546 558 559 558 563 575zM648 571 656 570 664 582zM656 570 675 584 664 582zM135 529 151 540 145 538zM172 531 184 546 174 543zM202 535 220 551 211 548zM233 537 251 553 242 549zM249 539 267 551 251 553zM256 539 272 556 267 551zM278 542 290 546 296 557zM278 542 296 557 288 554zM513 569 521 567 527 582zM656 581 664 582 673 595zM664 582 679 598 673 595zM20 528 40 543 26 541zM145 538 151 540 159 553zM407 566 417 569 423 581zM592 589 611 601 598 599zM604 590 618 588 622 602zM40 543 51 543 58 556zM83 547 91 546 97 560zM91 546 107 549 112 560zM159 553 171 558 175 571zM212 558 223 559 230 573zM278 568 294 566 295 582zM446 582 465 601 454 600zM481 586 488 588 494 602zM97 560 115 573 107 572zM331 587 340 585 346 600zM454 600 466 614 459 612zM552 607 560 611 567 622zM652 616 662 619 664 635zM662 619 669 622 679 633zM662 619 679 633 664 635zM669 622 689 635 679 633zM679 621 697 637 689 635zM38 568 55 583 44 579zM53 566 64 570 65 584zM488 616 507 628 496 627zM598 628 609 628 618 638zM609 628 622 627 629 642zM679 633 689 635 694 648zM-8 573 2 576 7 589zM2 576 14 578 15 588zM14 578 28 590 15 588zM33 580 44 579 49 594zM90 586 106 598 97 595zM153 593 166 594 170 608zM364 615 381 626 372 627zM443 622 459 636 445 635zM486 628 496 627 503 639zM496 627 507 628 514 642zM537 633 551 634 556 648zM669 646 686 645 691 662zM15 588 28 590 35 602zM49 594 63 596 65 607zM84 595 101 608 89 611zM216 609 227 614 234 622zM250 615 265 627 257 629zM324 621 334 624 343 637zM358 626 372 627 374 640zM358 626 374 640 362 636zM503 639 514 642 521 654zM658 654 675 673 663 668zM679 659 697 674 685 673zM-20 596 -6 614 -13 610zM3 600 21 614 5 613zM13 600 31 616 21 614zM158 618 170 628 164 628zM257 629 265 627 270 640zM257 629 270 640 259 637zM463 647 481 665 467 660zM505 655 527 669 515 668zM538 656 559 673 546 671zM604 665 620 666 626 680zM685 673 697 674 703 685zM-13 610 -6 614 4 625zM41 615 53 617 55 631zM164 628 178 641 169 641zM404 656 421 667 412 667zM447 661 461 660 463 673zM493 665 508 680 499 677zM536 669 546 671 551 685zM546 671 566 686 551 685zM614 675 626 680 629 693zM654 679 673 694 663 696zM670 684 683 699 673 694z'/><path fill='#7c7e7b' d='M155 -90 170 -75 159 -75zM164 -87 178 -73 170 -75zM347 -70 361 -70 366 -54zM572 -46 582 -46 585 -31zM159 -75 170 -75 176 -65zM467 -47 480 -43 484 -30zM467 -47 484 -30 471 -33zM511 -42 521 -39 525 -25zM165 -65 176 -65 180 -50zM185 -62 194 -61 205 -47zM351 -44 368 -29 355 -30zM395 -39 403 -36 413 -25zM453 -34 461 -32 469 -19zM504 -31 521 -16 512 -13zM117 -57 131 -42 119 -45zM355 -30 373 -17 360 -19zM552 -12 572 4 558 4zM177 -39 189 -39 194 -25zM396 -14 409 -13 410 2zM396 -14 410 2 400 -1zM636 11 656 26 643 25zM347 -6 364 5 351 5zM393 -2 406 12 394 8zM400 -1 418 12 406 12zM601 19 613 18 615 31zM601 19 615 31 603 33zM613 18 626 34 615 31zM342 2 351 5 357 17zM342 2 357 17 347 17zM459 17 480 29 467 27zM594 31 612 45 597 44zM104 -8 118 -8 121 5zM162 -1 172 -2 180 10zM663 49 682 65 672 65zM57 1 74 14 60 13zM333 26 347 44 334 39zM350 30 367 44 360 45zM388 35 402 48 390 49zM649 61 664 73 656 76zM622 70 635 72 642 83zM352 57 368 68 358 70zM366 55 374 55 381 68zM387 57 396 58 401 73zM274 61 290 75 276 72zM340 65 348 65 355 80zM492 81 504 85 509 98zM504 85 522 96 509 98zM671 113 688 126 676 127zM381 95 394 94 400 109zM406 99 414 100 418 112zM459 105 471 105 477 119zM133 83 154 98 142 93zM352 103 365 105 373 121zM595 128 616 144 601 141zM621 132 628 131 638 148zM463 130 470 129 478 141zM549 136 565 150 554 149zM45 99 63 112 56 108zM69 98 79 101 84 111zM346 129 361 145 348 141zM554 149 573 167 559 164zM598 155 615 168 603 169zM18 106 39 123 28 120zM63 112 84 126 71 125zM207 126 216 125 224 142zM462 151 474 154 476 168zM-17 114 -7 114 1 127zM139 131 151 147 139 142zM312 149 329 166 321 162zM325 152 343 166 329 166zM354 152 371 169 361 168zM530 171 546 172 551 187zM546 172 556 175 561 189zM665 186 676 187 680 201zM676 187 695 203 680 201zM430 175 446 187 433 190zM518 184 535 199 523 196zM324 178 333 179 339 188zM412 185 425 187 430 199zM425 187 439 198 430 199zM433 190 452 200 439 198zM478 191 487 192 496 208zM256 180 261 183 269 193zM364 192 375 194 378 206zM398 196 416 212 399 211zM482 204 503 219 490 217zM657 225 668 224 679 240zM238 189 252 204 244 204zM347 202 361 218 352 214zM355 206 368 207 375 218zM490 217 503 219 506 231zM645 232 660 249 647 249zM233 202 244 204 246 218zM284 210 305 225 294 223zM375 218 383 220 391 233zM397 220 406 220 415 237zM406 220 422 236 415 237zM450 227 461 228 468 242zM499 232 515 247 500 243zM581 242 594 239 603 256zM618 243 636 259 623 258zM639 247 647 249 654 259zM138 205 153 219 143 219zM284 222 296 235 285 236zM305 225 315 225 323 238zM402 232 418 250 409 244zM415 237 422 236 432 250zM447 238 461 241 465 252zM198 224 219 236 206 238zM263 233 284 246 273 243zM333 238 349 252 338 251zM354 239 362 242 369 256zM432 250 445 261 436 259zM517 256 538 274 522 272zM551 259 561 264 571 278zM561 264 581 278 571 278zM39 221 57 234 44 233zM164 234 179 248 167 247zM303 250 319 263 310 259zM349 252 362 267 355 266zM457 264 475 277 467 275zM559 277 571 278 575 289zM44 233 60 246 55 246zM167 247 183 260 171 261zM288 258 299 262 307 274zM299 262 315 275 307 274zM355 266 371 279 362 276zM362 267 375 268 382 280zM467 275 482 289 470 288zM575 289 584 288 593 303zM596 293 607 295 611 305zM55 246 68 258 59 258zM60 246 81 263 68 258zM73 249 92 265 81 263zM230 267 246 279 232 278zM264 268 277 284 268 279zM274 267 282 271 288 282zM371 279 382 280 389 292zM414 283 432 300 419 299zM546 300 556 298 565 312zM603 304 619 317 609 316zM658 308 673 325 665 323zM36 258 51 272 40 272zM87 276 99 274 101 291zM188 284 203 299 191 298zM336 303 353 303 356 317zM380 305 401 318 387 319zM534 322 546 322 553 334zM12 280 33 294 19 294zM115 288 129 304 117 304zM134 291 145 293 151 308zM167 297 187 312 176 307zM234 305 245 305 251 318zM245 305 255 304 264 316zM401 318 409 321 416 334zM455 324 466 326 470 339zM620 341 629 343 637 359zM40 293 55 298 59 310zM55 298 63 298 67 312zM195 312 214 324 200 322zM218 313 232 313 235 328zM218 313 235 328 223 328zM232 313 243 315 247 330zM327 326 343 339 336 338zM28 307 45 320 33 316zM168 322 183 320 184 334zM200 322 214 324 216 338zM260 332 266 332 273 342zM425 347 439 362 430 360zM454 351 472 363 462 364zM566 363 580 376 573 377zM639 371 656 372 657 383zM33 316 45 320 51 335zM74 325 90 325 92 337zM90 325 99 328 105 339zM216 338 229 341 237 352zM216 338 237 352 223 353zM526 368 539 373 546 387zM526 368 546 387 530 383zM573 377 590 388 578 387zM58 331 78 346 63 345zM156 346 168 345 178 359zM237 352 249 355 252 366zM269 355 284 369 272 370zM348 365 365 379 349 378zM415 372 420 372 432 387zM590 388 605 401 597 403zM621 391 637 405 627 404zM663 396 675 400 684 411zM-24 338 -14 340 -6 349zM109 350 118 352 125 364zM164 358 178 359 184 370zM218 364 230 363 237 378zM311 371 318 375 324 384zM517 396 527 395 531 406zM627 404 637 405 643 422zM637 405 647 408 657 420zM637 405 657 420 643 422zM672 408 688 425 675 426zM-6 349 14 368 -1 363zM268 379 288 396 274 394zM290 382 309 397 300 397zM488 405 499 403 508 416zM488 405 508 416 494 414zM499 403 513 408 517 417zM633 420 648 435 637 431zM112 378 120 379 130 392zM187 385 200 387 205 399zM187 385 205 399 192 395zM263 393 280 405 270 404zM362 404 377 402 378 414zM530 422 543 434 533 435zM541 419 559 436 543 434zM586 426 603 439 590 439zM618 429 630 431 635 445zM637 431 648 435 654 447zM671 436 680 437 686 451zM15 379 29 381 32 394zM49 380 68 397 56 394zM130 392 146 404 131 405zM229 402 241 414 235 413zM249 403 258 403 263 417zM303 410 318 421 310 422zM337 414 351 429 342 425zM501 431 515 431 519 442zM501 431 519 442 508 445zM533 435 543 434 549 448zM543 434 559 436 563 450zM578 439 590 439 594 451zM-12 388 -1 391 6 401zM-1 391 10 392 19 405zM310 422 325 435 312 436zM466 436 474 439 481 454zM474 439 487 441 494 452zM52 408 60 409 65 423zM303 435 312 436 323 447zM481 454 496 464 487 463zM523 456 533 459 544 470zM523 456 544 470 532 468zM264 444 275 441 283 455zM450 462 467 461 470 473zM544 470 551 470 556 484zM196 447 210 461 198 460zM293 460 307 457 310 473zM403 470 418 482 409 481zM626 491 640 505 630 503zM26 440 37 445 43 458zM235 461 253 477 238 477zM399 479 409 481 416 497zM418 482 437 499 426 497zM506 491 521 491 525 507zM566 498 576 501 583 510zM566 498 583 510 567 513zM673 509 690 524 681 524zM43 458 53 455 58 470zM204 471 216 475 225 487zM204 471 225 487 211 487zM590 516 601 516 607 527zM671 524 681 524 683 537zM-7 461 1 465 10 479zM292 492 302 494 308 510zM432 511 443 510 450 522zM489 512 496 518 501 527zM616 527 634 542 623 540zM97 487 112 502 104 500zM193 496 211 511 200 509zM342 511 348 515 355 525zM384 515 394 517 401 531zM425 522 438 523 447 537zM492 526 508 543 501 542zM501 527 513 529 520 542zM513 529 524 530 532 542zM623 540 641 553 633 557zM682 547 690 549 697 561zM68 495 84 512 78 509zM104 500 112 502 120 513zM124 502 138 503 140 517zM355 525 370 526 376 542zM579 547 586 550 593 561zM596 552 613 565 607 566zM661 558 680 572 672 569zM10 502 27 516 18 514zM19 502 36 516 27 516zM67 508 84 524 72 520zM194 524 215 534 202 535zM205 522 218 524 222 534zM496 554 513 569 503 564zM593 561 607 576 596 574zM672 569 680 572 690 587zM8 512 18 514 20 528zM18 514 27 516 35 531zM145 531 167 542 151 540zM189 531 211 548 197 548zM444 559 457 560 463 575zM513 569 527 582 514 578zM645 580 656 581 662 597zM664 582 675 584 679 598zM675 584 690 587 695 596zM-25 522 -3 539 -14 536zM-12 522 4 537 -3 539zM11 529 26 541 18 541zM35 531 51 543 40 543zM63 533 74 532 83 547zM96 538 108 539 115 548zM133 538 145 538 146 552zM133 538 146 552 137 553zM145 538 159 553 146 552zM151 540 171 558 159 553zM174 543 191 560 184 558zM184 546 204 561 191 560zM230 552 242 549 250 565zM267 551 278 568 272 566zM288 554 303 570 294 566zM319 561 335 572 322 572zM547 581 568 596 555 596zM592 589 604 590 611 601zM648 595 666 607 653 605zM26 541 40 543 42 554zM72 548 90 558 80 559zM91 546 112 560 97 560zM212 558 230 573 220 571zM481 586 494 602 482 599zM502 590 509 591 515 604zM543 596 555 596 560 611zM611 601 622 602 626 614zM653 605 666 607 669 622zM-3 553 17 565 8 565zM58 556 70 572 64 570zM80 559 94 571 82 569zM97 560 112 560 115 573zM152 566 171 580 159 578zM331 587 346 600 336 599zM482 599 494 602 498 615zM494 602 508 603 512 619zM596 614 603 613 609 628zM17 565 26 565 33 580zM251 589 258 588 264 601zM323 595 336 599 342 613zM466 614 486 628 474 625zM479 614 496 627 486 628zM542 622 559 621 562 635zM559 621 575 633 562 635zM664 635 686 645 669 646zM-21 573 -8 573 -7 585zM256 603 264 601 271 618zM443 622 454 623 459 636zM496 627 514 642 503 639zM659 645 679 659 669 658zM-15 586 -7 585 3 600zM-15 586 3 600 -8 598zM28 590 37 594 48 607zM28 590 48 607 35 602zM216 609 234 622 222 625zM411 630 427 633 434 643zM427 633 439 634 445 646zM479 640 497 650 485 650zM669 658 679 659 685 673zM669 658 685 673 675 673zM112 613 123 615 128 628zM445 646 461 660 447 661zM451 649 463 647 467 660zM485 650 497 650 503 665zM497 650 515 668 503 665zM82 619 96 624 101 634zM96 624 107 622 115 639zM461 660 467 660 478 675zM588 675 609 689 596 687zM654 679 670 684 673 694zM670 684 681 684 683 699z'/><path fill='#7d7f7c' d='M248 -77 261 -77 270 -68zM361 -70 370 -68 379 -54zM393 -63 413 -48 399 -52zM104 -81 113 -81 121 -67zM159 -75 176 -65 165 -65zM487 -41 499 -41 504 -31zM552 -36 567 -32 568 -19zM576 -34 585 -31 596 -20zM176 -65 190 -48 180 -50zM365 -43 378 -30 368 -29zM453 -34 469 -19 458 -19zM461 -32 471 -33 478 -18zM491 -18 503 -5 495 -6zM552 -12 563 -9 572 4zM167 -39 177 -39 184 -27zM360 -19 378 -5 371 -5zM651 10 660 11 664 26zM660 11 668 12 675 27zM480 5 488 8 496 22zM613 18 623 19 626 34zM623 19 636 36 626 34zM364 5 376 6 379 20zM418 12 433 24 426 23zM496 22 505 22 511 33zM615 31 626 34 635 50zM172 -2 183 0 188 15zM500 33 511 33 516 48zM635 50 649 61 640 59zM659 63 676 75 664 73zM387 57 401 73 391 70zM340 65 355 80 342 78zM427 75 439 74 445 90zM472 80 479 80 486 95zM486 95 501 110 491 107zM609 106 618 106 625 121zM643 108 658 126 645 125zM611 121 625 121 628 131zM625 121 643 135 628 131zM676 127 694 139 683 140zM418 112 435 124 427 125zM565 128 581 140 571 141zM661 136 672 136 683 150zM661 136 683 150 670 148zM427 125 435 124 447 138zM450 128 466 140 454 140zM504 132 515 133 518 146zM515 133 529 133 533 148zM581 140 591 144 598 155zM623 144 638 148 645 158zM518 146 533 148 535 160zM518 146 535 160 525 161zM666 160 682 178 668 174zM673 161 684 166 690 175zM684 166 705 181 690 175zM330 140 348 154 336 153zM-17 114 1 127 -13 128zM59 121 71 125 76 135zM644 185 652 187 662 197zM42 134 53 135 60 149zM118 143 134 142 135 158zM295 158 314 173 305 172zM361 168 377 181 369 180zM441 175 456 191 446 187zM450 174 463 178 464 191zM561 189 569 188 577 203zM582 192 598 206 587 205zM616 193 629 194 632 208zM680 201 698 217 684 212zM272 170 288 182 276 181zM333 179 350 191 339 188zM652 213 668 224 657 225zM517 208 529 211 531 225zM551 214 568 224 559 225zM594 217 604 215 609 231zM104 177 124 193 112 191zM368 207 378 206 383 220zM477 218 499 232 485 232zM599 230 609 231 618 243zM221 203 233 202 236 216zM340 212 352 214 357 230zM461 228 475 230 481 243zM618 243 631 243 636 259zM639 247 654 259 643 257zM660 249 675 260 667 260zM147 206 165 219 153 219zM246 218 263 233 251 230zM357 230 370 228 375 245zM357 230 375 245 362 242zM379 232 391 233 396 248zM379 232 396 248 389 246zM522 246 537 248 543 262zM522 246 543 262 529 257zM26 205 34 206 39 221zM323 238 338 251 329 251zM345 242 354 239 358 253zM354 239 369 256 358 253zM432 250 442 248 445 261zM52 221 60 223 68 236zM75 223 92 239 79 237zM193 237 206 238 213 249zM219 236 236 253 221 250zM303 250 315 248 319 263zM468 263 478 269 487 280zM468 263 487 280 475 277zM636 283 649 299 643 297zM37 233 44 233 55 246zM187 249 200 250 206 261zM221 250 236 253 237 266zM276 255 288 258 296 272zM387 270 406 284 393 282zM418 274 429 273 437 287zM418 274 437 287 424 285zM475 277 493 293 482 289zM508 281 523 295 513 292zM529 286 540 283 546 300zM565 289 582 301 569 301zM30 246 38 244 47 258zM183 260 196 259 198 276zM217 265 230 267 232 278zM424 285 444 299 432 300zM437 287 450 290 454 300zM593 303 603 304 609 316zM645 310 665 323 654 321zM-19 251 -1 263 -11 266zM-6 252 5 256 11 265zM47 258 63 270 51 272zM59 258 68 258 73 272zM121 268 137 266 141 278zM198 276 214 276 218 290zM254 279 272 296 262 295zM313 285 324 289 328 299zM324 289 331 288 336 303zM331 288 353 303 336 303zM389 292 402 306 393 306zM539 312 557 325 546 322zM587 316 600 315 600 327zM63 270 78 284 72 286zM241 292 251 294 255 304zM262 295 272 296 282 310zM295 297 308 299 314 310zM328 299 336 303 343 314zM328 299 343 314 332 311zM418 309 434 324 422 321zM425 310 437 311 446 327zM447 314 462 314 466 326zM494 317 513 332 497 329zM501 318 517 320 522 331zM39 282 45 284 55 298zM155 297 167 297 176 307zM422 321 436 339 429 337zM434 324 449 337 436 339zM195 312 208 314 214 324zM208 314 223 328 214 324zM337 327 354 340 343 339zM370 328 390 343 377 343zM429 337 436 339 445 347zM436 339 449 337 454 351zM36 304 50 310 56 322zM168 322 184 334 172 334zM266 332 276 330 285 343zM336 338 351 353 341 353zM354 340 370 340 375 354zM554 360 566 363 573 377zM607 368 623 369 628 379zM63 321 74 325 81 337zM119 330 140 342 126 340zM129 327 150 345 140 342zM229 341 239 339 249 355zM306 346 322 361 315 358zM362 351 375 354 378 365zM672 384 680 388 688 399zM19 331 29 328 30 344zM38 331 51 335 57 344zM51 335 63 345 57 344zM81 337 96 352 90 349zM92 337 105 339 109 350zM140 342 151 358 143 353zM150 345 164 358 151 358zM168 345 188 358 178 359zM182 344 192 349 196 361zM213 348 230 363 218 364zM223 353 237 352 240 368zM269 355 277 359 284 369zM378 365 396 383 386 381zM530 383 550 398 537 398zM546 387 555 386 561 401zM23 343 30 344 36 356zM57 344 71 361 59 361zM78 346 90 349 96 360zM118 352 138 365 125 364zM132 354 143 353 148 370zM143 353 151 358 158 368zM509 391 517 396 526 406zM572 400 582 400 586 413zM17 353 25 357 33 367zM194 372 211 385 200 387zM324 384 339 387 343 399zM339 387 353 400 343 399zM613 419 621 417 630 431zM666 424 680 437 671 436zM44 372 53 370 59 383zM67 372 82 383 70 387zM112 378 130 392 119 390zM263 393 274 394 280 405zM274 394 288 396 290 408zM429 408 448 425 433 422zM494 414 515 431 501 431zM549 421 567 435 559 436zM-13 373 -6 375 -1 391zM-13 373 -1 391 -12 388zM59 383 70 387 76 400zM95 388 109 401 103 399zM171 393 190 407 178 409zM238 404 249 403 255 414zM238 404 255 414 241 414zM480 429 491 429 499 444zM559 436 567 435 571 450zM625 443 635 445 636 456zM654 447 668 449 672 460zM-12 388 6 401 -3 399zM22 391 32 394 39 404zM68 397 76 400 87 409zM68 397 87 409 70 408zM91 400 108 413 96 414zM156 408 173 420 160 417zM275 419 295 431 280 430zM499 444 508 445 511 457zM529 444 544 461 533 459zM571 450 582 450 593 464zM582 450 594 451 601 467zM-15 402 -3 399 2 414zM-3 399 14 414 2 414zM173 420 182 423 191 436zM182 423 193 421 198 434zM203 422 215 425 221 439zM263 430 274 430 275 441zM263 430 275 441 264 444zM295 431 312 448 299 444zM340 439 346 436 354 451zM380 440 399 455 385 455zM392 443 409 455 399 455zM481 454 494 452 496 464zM2 414 19 427 7 426zM14 414 31 431 19 427zM144 430 157 433 163 446zM191 436 198 434 208 449zM191 436 208 449 196 447zM210 439 230 452 219 447zM246 442 255 441 263 456zM312 448 323 447 327 458zM39 429 51 430 55 445zM65 435 77 446 70 448zM96 437 109 437 110 453zM109 437 121 451 110 453zM116 439 136 451 121 451zM385 469 395 470 399 479zM385 469 399 479 385 478zM599 490 611 492 618 504zM101 452 118 465 106 463zM110 453 128 466 118 465zM385 478 402 495 394 490zM431 486 447 498 437 499zM444 483 453 488 461 499zM453 488 470 499 461 499zM552 498 567 513 558 511zM594 503 610 501 615 513zM683 511 701 526 690 524zM63 460 78 472 72 469zM128 466 143 464 148 481zM143 464 160 481 148 481zM151 466 162 467 169 481zM151 466 169 481 160 481zM230 476 246 488 233 486zM484 502 492 501 496 518zM484 502 496 518 489 512zM681 524 694 535 683 537zM23 467 36 466 40 479zM23 467 40 479 29 478zM114 476 129 492 119 490zM122 476 133 476 142 492zM193 484 204 484 207 500zM204 484 217 498 207 500zM211 487 225 487 229 501zM314 497 324 498 329 510zM335 498 344 501 348 515zM401 508 416 521 407 518zM424 510 432 511 438 523zM464 512 480 524 470 524zM528 518 541 523 549 533zM589 523 600 528 602 537zM676 534 690 549 682 547zM40 479 54 483 61 493zM76 485 86 484 91 496zM86 484 104 500 91 496zM142 492 156 507 145 503zM174 492 193 506 180 507zM416 521 425 522 436 533zM571 535 581 536 586 550zM590 541 611 552 596 552zM-20 485 -0 499 -14 499zM49 492 61 493 67 508zM79 495 91 496 96 509zM180 507 193 506 194 524zM380 527 397 544 387 544zM467 536 475 539 480 551zM686 563 703 573 692 575zM84 512 103 523 92 525zM140 517 155 517 161 529zM218 524 228 523 233 537zM363 538 378 553 368 553zM546 558 563 575 553 573zM656 570 672 569 675 584zM59 521 74 532 63 533zM84 524 92 525 96 538zM84 524 96 538 90 534zM103 523 117 527 120 537zM172 531 181 534 184 546zM222 534 233 537 242 549zM249 539 256 539 267 551zM268 540 288 554 272 556zM489 566 503 564 503 577zM489 566 503 577 497 576zM656 581 673 595 662 597zM45 529 57 529 63 545zM90 534 107 549 91 546zM151 540 167 542 171 558zM167 542 174 543 184 558zM332 559 343 560 348 576zM332 559 348 576 335 572zM463 575 481 586 468 587zM648 595 662 597 666 607zM662 597 677 609 666 607zM51 543 67 555 58 556zM63 545 72 548 80 559zM83 547 97 560 90 558zM250 565 263 580 255 575zM258 563 272 566 276 582zM555 596 574 609 560 611zM598 599 616 615 603 613zM677 609 688 610 693 622zM12 549 26 565 17 565zM32 556 53 566 38 568zM255 575 263 580 268 590zM443 598 459 612 444 612zM454 600 465 601 466 614zM465 601 472 598 479 614zM581 610 596 614 598 628zM679 621 693 622 697 637zM17 565 33 580 25 578zM26 565 44 579 33 580zM94 571 112 586 97 586zM115 573 127 576 133 587zM251 589 264 601 256 603zM444 612 460 626 454 623zM459 612 466 614 474 625zM542 622 562 635 551 634zM609 628 629 642 618 638zM33 580 49 594 37 594zM79 585 97 595 84 595zM97 586 112 586 119 600zM454 623 460 626 471 636zM608 638 618 638 621 652zM650 645 659 645 669 658zM650 645 669 658 658 654zM37 594 58 607 48 607zM73 595 84 595 89 611zM106 598 119 600 123 615zM106 598 123 615 112 613zM119 600 137 616 123 615zM162 603 170 608 176 621zM445 635 459 636 463 647zM459 636 474 649 463 647zM479 640 490 639 497 650zM533 646 546 643 554 660zM546 643 561 659 554 660zM611 654 630 665 620 666zM463 647 474 649 481 665zM675 673 685 673 689 685zM-13 610 4 625 -7 622zM21 614 35 628 24 629zM107 622 120 623 125 640zM247 640 259 637 268 651zM404 656 414 657 421 667zM447 661 463 673 455 671zM461 660 478 675 463 673zM493 665 503 665 508 680zM536 669 551 685 544 683zM546 671 559 673 566 686zM681 684 689 685 693 699z'/><path fill='#7e807d' d='M107 -97 117 -93 127 -79zM107 -97 127 -79 113 -81zM164 -87 172 -89 178 -73zM172 -89 188 -85 194 -71zM361 -70 379 -54 366 -54zM471 -55 487 -41 480 -43zM551 -47 567 -32 552 -36zM455 -46 471 -33 461 -32zM242 -56 258 -41 244 -43zM550 -26 563 -20 563 -9zM169 -52 189 -39 177 -39zM401 -27 416 -11 409 -13zM458 -19 474 -5 465 -8zM491 -18 499 -18 503 -5zM482 -3 499 10 488 8zM651 10 664 26 656 26zM169 -24 184 -27 186 -14zM184 -27 196 -12 186 -14zM465 4 480 5 487 18zM172 -2 188 15 180 10zM467 27 480 29 482 46zM616 56 631 60 635 72zM616 56 635 72 622 70zM374 55 391 70 381 68zM478 91 486 95 491 107zM427 99 440 112 431 113zM625 121 633 119 643 135zM289 97 306 110 293 109zM628 131 644 149 638 148zM515 133 533 148 518 146zM549 136 557 138 565 150zM571 141 581 140 585 152zM591 144 601 141 606 158zM616 144 629 160 622 157zM623 144 645 158 629 160zM644 149 666 160 654 162zM287 123 307 138 296 136zM356 131 368 129 371 144zM673 161 690 175 682 178zM30 107 45 109 50 124zM348 141 369 157 354 152zM429 151 440 149 442 164zM682 178 697 192 685 191zM476 168 492 179 483 178zM621 184 636 194 629 194zM644 185 662 197 646 199zM665 186 680 201 667 200zM676 187 685 191 695 203zM492 179 512 194 500 194zM505 181 523 196 512 194zM646 199 662 197 662 209zM272 170 278 171 288 182zM369 180 377 181 386 194zM446 187 456 191 463 203zM420 199 436 212 424 212zM517 208 531 225 520 219zM640 223 655 238 645 232zM465 215 485 232 475 230zM503 219 519 231 506 231zM547 224 559 225 562 237zM166 198 185 212 171 208zM175 199 190 198 194 213zM299 212 310 209 315 225zM310 209 318 212 326 226zM439 226 461 241 447 238zM519 231 527 232 537 248zM519 231 537 248 522 246zM631 243 639 247 643 257zM339 226 346 228 354 239zM13 206 26 205 30 217zM362 242 375 245 379 254zM506 256 517 256 522 272zM529 257 548 272 538 274zM543 262 559 277 548 272zM651 270 670 284 655 286zM83 225 94 224 99 237zM294 244 310 259 299 262zM329 251 338 251 343 264zM494 270 508 281 498 283zM522 272 538 274 540 283zM548 272 565 289 552 288zM581 278 592 278 596 293zM636 283 648 285 649 299zM-18 224 -12 227 -5 241zM187 249 206 261 196 259zM213 249 230 267 217 265zM244 256 264 268 251 266zM310 259 319 263 327 273zM319 263 340 278 327 273zM332 263 343 264 351 276zM387 270 401 271 406 284zM475 277 487 280 493 293zM5 242 28 256 13 254zM149 256 162 257 168 269zM206 261 220 279 214 276zM274 267 288 282 277 284zM362 276 380 295 367 289zM382 280 393 282 400 295zM424 285 437 287 444 299zM437 287 454 300 444 299zM493 293 502 296 506 306zM513 292 528 311 519 310zM603 304 611 305 619 317zM-19 251 -6 252 -1 263zM121 268 141 278 131 277zM181 272 187 273 194 287zM344 287 357 290 361 301zM344 287 361 301 353 303zM357 290 371 304 361 301zM380 295 393 306 380 305zM419 299 432 300 437 311zM131 277 145 293 134 291zM295 297 314 310 299 311zM315 300 328 299 332 311zM315 300 332 311 323 313zM393 306 409 321 401 318zM462 314 475 326 466 326zM679 338 694 352 685 349zM12 280 26 279 33 294zM145 293 161 306 151 308zM155 297 176 307 161 306zM179 299 191 298 195 312zM179 299 195 312 187 312zM314 310 323 313 327 326zM620 341 637 359 623 354zM651 346 662 346 668 362zM208 314 218 313 223 328zM348 329 363 328 370 340zM348 329 370 340 354 340zM416 334 436 348 425 347zM50 310 63 321 56 322zM116 315 125 314 129 327zM214 324 223 328 229 341zM247 330 260 332 263 343zM323 337 341 353 330 350zM336 338 343 339 351 353zM354 340 375 354 362 351zM554 360 573 377 561 372zM639 371 657 383 651 385zM56 322 73 337 58 331zM99 328 109 326 117 339zM144 328 151 331 156 346zM254 339 269 355 259 354zM306 346 319 348 322 361zM362 351 378 365 365 366zM406 358 419 361 420 372zM539 373 550 374 555 386zM539 373 555 386 546 387zM596 380 606 380 610 390zM628 379 645 395 629 392zM680 388 694 387 699 400zM126 340 140 342 143 353zM140 342 150 345 151 358zM182 344 196 361 188 358zM288 357 311 371 294 370zM304 358 315 358 318 375zM365 366 378 365 386 381zM530 383 546 387 550 398zM629 392 645 395 647 408zM654 397 663 396 672 408zM654 397 672 408 658 408zM2 338 17 353 3 351zM109 350 125 364 118 365zM143 353 158 368 148 370zM218 364 237 378 225 376zM294 370 314 383 304 385zM344 377 349 378 356 388zM344 377 356 388 349 387zM517 396 531 406 526 406zM527 395 542 409 531 406zM605 401 617 402 621 417zM658 408 675 426 666 424zM194 372 207 376 211 385zM643 422 658 433 648 435zM176 384 187 385 192 395zM200 387 216 401 205 399zM221 389 233 387 238 404zM221 389 238 404 229 402zM59 383 76 400 68 397zM70 387 82 383 91 400zM433 422 448 425 451 436zM466 425 487 441 474 439zM524 432 533 435 543 448zM567 435 578 439 582 450zM641 445 654 447 664 460zM-22 389 -3 399 -15 402zM22 391 39 404 30 403zM103 399 117 414 108 413zM131 405 150 416 139 418zM178 409 190 407 193 421zM310 422 318 421 325 435zM406 431 418 431 428 448zM571 450 593 464 579 461zM87 409 96 414 99 425zM150 416 169 433 157 433zM280 430 299 444 290 445zM99 425 116 439 109 437zM179 434 191 436 196 447zM198 434 210 439 219 447zM246 442 263 456 248 455zM163 446 175 444 181 459zM417 472 431 486 418 482zM648 495 660 509 652 509zM-7 440 10 453 -2 450zM46 445 55 445 63 460zM101 452 110 453 118 465zM147 453 162 467 151 466zM181 459 187 459 194 473zM289 469 304 483 293 482zM576 501 583 500 590 516zM-11 449 1 465 -7 461zM10 453 17 452 23 467zM72 459 90 471 78 472zM95 459 114 476 102 474zM162 467 175 468 179 482zM194 473 204 471 211 487zM293 482 314 497 302 494zM304 483 318 482 324 498zM402 495 416 497 424 510zM447 498 461 499 464 512zM447 498 464 512 453 513zM461 499 476 511 464 512zM550 506 563 524 551 523zM558 511 567 513 572 525zM601 516 615 513 616 527zM671 524 683 537 676 534zM-16 463 -7 461 -0 478zM36 466 45 467 54 483zM72 469 86 484 76 485zM133 476 148 481 152 490zM169 481 182 498 174 492zM193 484 207 500 193 496zM302 494 314 497 318 511zM314 497 329 510 318 511zM324 498 342 511 329 510zM344 501 353 500 360 515zM443 510 453 513 462 525zM683 537 705 548 690 549zM10 479 28 490 16 492zM21 476 35 492 28 490zM54 483 68 495 61 493zM97 487 106 487 112 502zM329 510 346 525 335 525zM501 527 520 542 508 543zM602 537 617 553 611 552zM615 538 623 540 633 557zM-4 488 4 490 10 502zM-4 488 10 502 -0 499zM35 492 49 492 53 508zM68 495 79 495 84 512zM370 526 387 544 376 542zM380 527 389 532 397 544zM453 538 472 552 460 548zM501 542 508 543 514 553zM611 552 629 567 613 565zM674 562 686 563 692 575zM96 509 110 510 117 527zM120 513 135 529 124 527zM205 522 222 534 215 534zM426 548 444 559 436 559zM607 566 613 565 620 579zM344 549 359 553 365 561zM457 560 474 574 463 575zM543 570 553 573 561 583zM596 574 618 588 604 590zM607 576 626 591 618 588zM90 534 96 538 107 549zM463 575 474 574 481 586zM538 580 547 581 555 596zM-3 539 4 537 12 549zM18 541 32 556 24 552zM63 545 80 559 67 555zM159 553 175 571 163 570zM468 587 481 586 482 599zM611 601 626 614 616 615zM32 556 42 554 53 566zM112 560 127 576 115 573zM163 570 175 571 181 582zM417 592 430 594 434 607zM107 572 115 573 124 586zM159 578 171 580 177 595zM405 605 416 608 420 621zM653 632 669 646 659 645zM2 576 15 588 7 589zM25 578 37 594 28 590zM44 579 63 596 49 594zM112 586 128 602 119 600zM454 623 471 636 459 636zM460 626 479 640 471 636zM537 633 556 648 546 643zM594 635 611 654 602 653zM15 588 35 602 22 601zM97 595 106 598 112 613zM22 601 35 602 41 615zM35 602 48 607 53 617zM58 607 65 607 71 622zM76 606 89 611 96 624zM101 608 112 613 120 623zM485 650 503 665 493 665zM538 656 554 660 559 673zM597 664 614 675 601 676zM651 667 663 668 670 684zM675 673 689 685 681 684zM685 673 703 685 689 685zM362 650 370 651 376 665zM601 676 617 689 609 689zM681 684 693 699 683 699z'/><path fill='#7f817e' d='M172 -89 194 -71 178 -73zM457 -57 471 -55 480 -43zM471 -33 491 -18 478 -18zM550 -26 563 -9 552 -12zM355 -30 368 -29 373 -17zM474 -5 488 8 480 5zM446 2 455 5 459 17zM623 19 633 21 636 36zM644 50 656 48 659 63zM290 21 302 39 292 34zM333 26 341 30 347 44zM334 39 352 57 345 55zM644 73 656 76 659 88zM374 55 387 57 391 70zM396 58 406 61 415 74zM531 101 545 112 539 112zM629 111 645 125 633 119zM628 131 643 135 644 149zM655 134 661 136 670 148zM672 136 683 140 689 154zM683 140 694 139 700 151zM644 149 656 149 666 160zM340 142 348 141 354 152zM348 141 361 145 369 157zM573 167 584 167 589 179zM573 167 589 179 574 179zM682 178 690 175 697 192zM546 172 561 189 551 187zM633 181 646 199 636 194zM685 191 697 192 702 204zM629 194 646 210 632 208zM598 206 615 219 604 215zM657 225 679 240 667 238zM368 207 383 220 375 218zM490 217 506 231 499 232zM511 220 520 219 527 232zM352 214 361 218 370 228zM397 220 415 237 402 232zM506 231 519 231 522 246zM258 218 275 232 263 233zM294 223 305 225 308 235zM315 225 333 238 323 238zM191 222 206 238 193 237zM663 275 670 276 681 287zM30 217 39 221 44 233zM173 233 181 234 187 249zM181 234 193 237 200 250zM494 270 500 267 508 281zM37 233 55 246 38 244zM167 247 179 248 183 260zM179 248 187 249 196 259zM200 250 213 249 217 265zM310 259 327 273 315 275zM487 280 502 296 493 293zM565 289 575 289 582 301zM149 256 168 269 158 267zM217 265 232 278 220 279zM251 266 264 268 268 279zM282 271 296 272 301 284zM371 279 389 292 380 295zM406 284 414 283 419 299zM645 310 658 308 665 323zM81 263 92 265 99 274zM144 270 162 285 151 280zM254 279 268 279 272 296zM324 289 336 303 328 299zM400 295 410 295 418 309zM410 295 419 299 425 310zM99 274 106 276 115 288zM162 285 175 283 179 299zM162 285 179 299 167 297zM272 296 283 295 290 309zM371 304 380 305 387 319zM393 306 402 306 409 321zM402 306 418 309 422 321zM437 311 455 324 446 327zM45 284 56 285 63 298zM134 291 151 308 142 307zM167 297 179 299 187 312zM323 313 337 327 327 326zM365 315 377 316 382 333zM33 294 50 310 36 304zM40 293 59 310 50 310zM55 298 67 312 59 310zM161 306 183 320 168 322zM416 334 429 337 436 348zM28 307 36 304 45 320zM59 310 67 312 74 325zM101 314 119 330 109 326zM190 322 206 337 195 337zM377 343 395 359 381 357zM587 366 600 366 606 380zM45 320 58 331 51 335zM184 334 202 349 192 349zM229 341 249 355 237 352zM319 348 330 350 336 364zM606 380 621 391 610 390zM29 328 38 331 46 343zM38 331 57 344 46 343zM92 337 109 350 96 352zM365 366 386 381 374 377zM546 387 561 401 550 398zM-14 340 2 338 3 351zM96 352 109 350 118 365zM188 358 207 376 194 372zM230 363 240 368 246 379zM284 369 304 385 290 382zM627 404 643 422 633 420zM684 411 691 414 696 425zM25 357 36 356 44 372zM82 362 96 360 102 374zM138 365 155 383 146 378zM207 376 213 374 221 389zM281 380 300 397 288 396zM324 384 343 399 333 402zM166 384 176 384 183 397zM211 385 229 402 216 401zM439 409 450 410 458 424zM517 417 533 435 524 432zM630 431 637 431 641 445zM205 399 218 412 209 410zM567 435 582 450 571 450zM603 439 615 454 606 453zM56 394 70 408 60 409zM109 401 125 403 126 417zM166 408 182 423 173 420zM285 417 303 435 295 431zM487 441 500 452 494 452zM543 448 549 448 554 462zM594 451 606 453 613 468zM626 456 636 456 644 471zM636 456 654 470 644 471zM39 404 52 408 55 422zM150 416 160 417 169 433zM227 425 246 442 232 440zM621 466 632 468 637 480zM34 418 45 421 51 430zM55 422 65 423 74 434zM221 439 232 440 237 453zM299 444 314 461 307 457zM354 451 367 454 371 468zM399 455 417 472 403 470zM496 464 511 470 514 483zM532 468 544 470 546 485zM-13 423 4 441 -7 440zM31 431 46 445 37 445zM151 445 166 458 158 456zM208 449 219 447 225 464zM-18 436 -2 450 -11 449zM55 445 72 459 63 460zM121 451 136 451 143 464zM166 458 187 469 175 468zM245 464 259 476 253 477zM431 486 444 483 447 498zM497 492 513 505 503 503zM-2 450 10 453 14 466zM-2 450 14 466 1 465zM84 461 95 459 102 474zM106 463 118 465 122 476zM187 469 194 473 204 484zM216 475 230 476 233 486zM318 482 335 498 324 498zM363 487 376 501 364 501zM534 510 551 523 541 523zM601 516 616 527 607 527zM658 520 676 534 661 532zM78 472 97 487 86 484zM102 474 119 490 106 487zM148 481 162 492 152 490zM160 481 169 481 174 492zM364 501 376 501 384 515zM432 511 450 522 438 523zM496 518 511 515 513 529zM519 518 535 531 524 530zM628 529 646 543 634 542zM64 483 76 485 79 495zM86 484 97 487 104 500zM129 492 142 492 145 503zM182 498 193 496 200 509zM348 515 360 515 370 526zM416 521 436 533 420 533zM480 524 492 526 501 542zM524 530 545 543 532 542zM672 547 686 563 674 562zM91 496 104 500 110 510zM156 507 175 522 164 518zM389 532 401 531 403 545zM475 539 490 539 496 554zM-0 499 18 514 8 512zM84 512 96 509 103 523zM128 514 140 517 145 531zM140 517 161 529 145 531zM194 524 205 522 215 534zM241 528 255 527 256 539zM255 527 261 528 268 540zM272 531 290 546 278 542zM319 533 328 536 337 547zM363 538 376 542 378 553zM460 548 472 552 481 563zM460 548 481 563 470 563zM541 555 553 573 543 570zM92 525 103 523 108 539zM124 527 135 529 145 538zM202 535 215 534 220 551zM301 543 319 561 308 557zM457 560 470 563 474 574zM481 563 497 576 484 576zM251 553 267 551 272 566zM438 574 450 574 454 588zM450 574 468 587 454 588zM673 595 688 610 677 609zM40 543 58 556 42 554zM72 548 83 547 90 558zM543 596 560 611 552 607zM42 554 58 556 64 570zM58 556 67 555 70 572zM67 555 80 559 82 569zM67 555 82 569 70 572zM255 575 268 590 258 588zM472 598 488 616 479 614zM482 599 498 615 488 616zM494 602 512 619 498 615zM536 607 552 607 559 621zM603 613 622 627 609 628zM-4 560 8 565 14 578zM64 570 70 572 79 585zM94 571 107 572 112 586zM107 572 124 586 112 586zM416 608 424 606 431 620zM416 608 431 620 420 621zM459 612 474 625 460 626zM598 628 618 638 608 638zM55 583 65 584 73 595zM97 586 119 600 106 598zM420 621 439 634 427 633zM73 595 89 611 76 606zM250 615 261 615 265 627zM261 615 275 631 265 627zM439 634 445 635 451 649zM439 634 451 649 445 646zM76 606 96 624 82 619zM101 608 120 623 107 622zM71 622 88 634 82 634zM82 619 101 634 88 634z'/><path fill='#80827f' d='M506 -51 521 -39 511 -42zM354 -56 366 -54 376 -41zM487 -41 504 -31 493 -28zM552 -36 568 -19 563 -20zM484 -30 499 -18 491 -18zM478 -18 491 -18 495 -6zM482 -3 495 -6 499 10zM455 5 465 4 474 20zM387 10 394 8 405 22zM518 25 537 36 520 33zM603 33 615 31 621 48zM268 23 284 37 270 34zM686 91 695 89 700 104zM553 127 571 141 557 138zM577 129 583 131 591 144zM583 131 595 128 601 141zM672 136 689 154 683 150zM492 134 504 132 507 148zM638 148 644 149 654 162zM656 149 673 161 666 160zM368 129 378 131 382 146zM447 138 462 151 447 153zM325 152 336 153 343 166zM519 172 536 185 530 185zM621 184 633 181 636 194zM662 197 667 200 678 212zM333 179 343 180 350 191zM587 205 604 215 594 217zM640 223 651 221 655 238zM668 224 685 227 687 238zM685 227 695 229 700 237zM503 219 511 220 519 231zM406 220 419 222 422 236zM541 235 559 248 546 250zM346 228 362 242 354 239zM396 248 409 244 416 258zM20 217 30 217 37 233zM193 237 213 249 200 250zM338 251 349 252 355 266zM266 254 282 271 274 267zM276 255 296 272 282 271zM319 263 332 263 340 278zM596 293 611 305 603 304zM18 245 30 246 36 258zM251 266 268 279 254 279zM282 271 301 284 288 282zM47 258 59 258 63 270zM432 300 444 299 447 314zM51 272 72 286 56 285zM175 283 188 284 191 298zM194 287 208 288 212 299zM127 289 134 291 142 307zM225 302 243 315 232 313zM323 313 332 311 337 327zM377 316 387 319 396 329zM446 327 458 337 449 337zM129 304 146 318 134 316zM151 308 168 322 161 318zM296 322 306 322 314 337zM337 327 348 329 354 340zM323 337 336 338 341 353zM343 339 362 351 351 353zM33 316 51 335 38 331zM172 334 192 349 182 344zM239 339 254 339 259 354zM319 348 336 364 322 361zM330 350 341 353 348 365zM117 339 132 354 118 352zM150 345 156 346 164 358zM259 354 269 355 272 370zM277 359 288 357 294 370zM277 359 294 370 284 369zM378 365 388 371 396 383zM510 379 527 395 517 396zM555 386 572 400 561 401zM629 392 647 408 637 405zM30 344 51 358 36 356zM90 349 96 352 105 364zM311 371 324 384 314 383zM3 351 17 353 21 366zM3 351 21 366 14 368zM172 370 187 385 176 384zM184 370 200 387 187 385zM281 380 290 382 300 397zM33 367 44 372 49 380zM120 379 134 378 137 391zM166 384 183 397 171 393zM256 392 263 393 270 404zM517 417 530 422 533 435zM671 436 686 451 675 447zM70 387 91 400 76 400zM107 388 119 390 125 403zM183 397 197 411 190 407zM285 417 301 422 303 435zM399 431 414 447 401 445zM406 431 428 448 414 447zM499 444 511 457 500 452zM160 417 173 420 179 434zM-19 412 -3 427 -13 423zM-8 413 2 414 7 426zM45 421 65 435 51 430zM65 423 77 421 85 435zM124 430 136 427 140 443zM496 464 514 483 503 477zM650 484 665 499 656 498zM-13 423 -3 427 4 441zM74 434 92 449 77 446zM109 437 116 439 121 451zM163 446 181 459 166 458zM-18 436 -7 440 -2 450zM136 451 151 466 143 464zM225 464 238 477 230 476zM264 469 277 466 286 482zM444 483 461 499 447 498zM53 455 63 460 72 469zM118 465 128 466 133 476zM216 475 233 486 225 487zM238 477 253 477 258 490zM318 482 328 484 335 498zM470 499 489 512 476 511zM658 520 671 524 676 534zM78 472 90 471 97 487zM160 481 174 492 162 492zM353 500 374 517 360 515zM376 501 394 517 384 515zM443 510 462 525 450 522zM29 478 40 479 49 492zM119 490 138 503 124 502zM294 508 308 510 313 522zM28 490 35 492 42 506zM61 493 78 509 67 508zM104 500 120 513 110 510zM156 507 167 504 175 522zM167 504 180 507 184 521zM271 517 287 529 272 531zM300 520 313 522 319 533zM475 539 496 554 480 551zM490 539 502 554 496 554zM10 502 19 502 27 516zM42 506 53 508 59 521zM78 509 84 512 92 525zM241 528 256 539 249 539zM437 545 449 547 457 560zM472 552 480 551 489 566zM480 551 503 564 489 566zM502 554 514 553 521 567zM607 566 620 579 607 576zM52 520 63 533 57 529zM92 525 108 539 96 538zM444 559 463 575 450 574zM607 576 620 579 626 591zM675 584 695 596 679 598zM74 532 90 534 91 546zM184 546 197 548 204 561zM417 569 428 573 434 582zM438 574 454 588 446 582zM497 576 503 577 509 591zM18 541 26 541 32 556zM51 543 63 545 67 555zM250 565 258 563 263 580zM423 581 434 582 443 598zM434 582 454 600 443 598zM454 588 472 598 465 601zM24 552 38 568 26 565zM405 593 417 592 424 606zM472 598 482 599 488 616zM596 614 609 628 598 628zM603 613 616 615 622 627zM70 572 82 569 90 586zM424 606 434 607 443 622zM25 578 33 580 37 594zM420 621 431 620 439 634zM460 626 474 625 479 640zM474 625 486 628 490 639zM427 633 445 646 434 643zM471 636 485 650 474 649zM22 601 41 615 31 616zM58 607 71 622 64 621zM451 649 467 660 461 660zM474 649 485 650 493 665zM604 665 626 680 614 675zM21 614 31 616 35 628zM53 617 64 621 70 629zM414 657 433 669 421 667zM437 660 455 671 444 669zM467 660 481 665 483 674zM601 676 614 675 617 689z'/><path fill='#818380' d='M471 -55 481 -53 487 -41zM471 -33 484 -30 491 -18zM347 17 366 31 350 30zM640 59 656 76 644 73zM577 129 591 144 581 140zM595 128 605 129 616 144zM643 135 656 149 644 149zM382 121 401 134 389 134zM536 134 554 149 544 149zM557 138 577 151 565 150zM298 122 311 123 320 136zM634 169 652 187 644 185zM668 174 685 191 676 187zM652 187 665 186 667 200zM652 187 667 200 662 197zM685 191 702 204 695 203zM361 168 371 169 377 181zM636 194 646 199 652 213zM369 180 386 194 375 194zM598 206 610 205 615 219zM261 183 278 196 269 193zM378 206 391 206 397 220zM499 232 506 231 515 247zM391 233 402 232 409 244zM447 238 465 252 455 250zM164 234 173 233 179 248zM206 238 219 236 221 250zM179 248 196 259 183 260zM18 245 36 258 28 256zM196 259 206 261 214 276zM458 288 470 288 478 302zM593 303 609 316 600 315zM158 267 168 269 175 283zM214 276 228 292 218 290zM357 290 367 289 371 304zM400 295 418 309 402 306zM419 299 437 311 425 310zM262 295 282 310 268 305zM353 303 361 301 365 315zM361 301 377 316 365 315zM402 306 422 321 409 321zM145 293 155 297 161 306zM434 324 446 327 449 337zM-21 286 -4 304 -15 300zM-2 290 18 304 2 301zM142 307 151 308 161 318zM296 322 314 337 299 333zM612 353 629 368 623 369zM59 310 74 325 63 321zM276 330 293 345 285 343zM430 360 446 373 432 372zM439 362 452 362 455 373zM680 388 699 400 688 399zM117 339 126 340 132 354zM288 357 304 358 311 371zM2 338 10 339 17 353zM23 343 36 356 25 357zM90 349 105 364 96 360zM96 352 118 365 105 364zM132 354 148 370 138 365zM164 358 184 370 172 370zM365 379 374 377 380 391zM-16 352 -6 349 -1 363zM82 362 102 374 88 372zM96 360 105 364 112 378zM105 364 118 365 120 379zM184 370 194 372 200 387zM207 376 221 389 211 385zM14 368 21 366 29 381zM33 367 49 380 39 381zM134 378 148 393 137 391zM146 378 155 383 160 394zM155 383 171 393 160 394zM658 433 675 447 668 449zM-6 375 9 379 10 392zM205 399 216 401 218 412zM178 409 193 421 182 423zM197 411 215 425 203 422zM508 445 519 442 523 456zM543 448 554 462 544 461zM549 448 563 450 568 461zM52 408 65 423 55 422zM70 408 89 426 77 421zM173 420 191 436 179 434zM250 428 264 444 255 441zM14 414 23 417 31 431zM124 430 140 443 126 439zM532 468 546 485 538 483zM-3 427 14 438 4 441zM7 426 26 440 14 438zM182 447 196 447 198 460zM327 458 346 476 332 475zM341 460 346 465 355 474zM-7 440 4 441 10 453zM77 446 95 459 84 461zM110 453 121 451 128 466zM136 451 147 453 151 466zM198 460 216 475 204 471zM210 461 230 476 216 475zM106 463 122 476 114 476zM162 467 179 482 169 481zM437 499 453 513 443 510zM513 505 525 507 528 518zM513 505 528 518 519 518zM615 513 628 529 616 527zM1 465 14 466 21 476zM90 471 102 474 106 487zM122 476 142 492 129 492zM324 498 335 498 342 511zM376 501 389 504 394 517zM650 531 672 547 660 545zM661 532 676 534 682 547zM407 518 420 533 408 531zM112 502 124 502 128 514zM211 511 226 514 228 523zM211 511 228 523 218 524zM278 516 298 532 287 529zM300 520 319 533 307 534zM30 504 42 506 52 520zM42 506 59 521 52 520zM53 508 67 508 72 520zM128 514 145 531 135 529zM255 527 268 540 256 539zM472 552 489 566 481 563zM18 514 35 531 20 528zM103 523 120 537 108 539zM436 559 450 574 438 574zM2 526 18 541 4 537zM428 573 438 574 446 582zM604 590 622 602 611 601zM423 581 443 598 430 594zM434 582 446 582 454 600zM454 588 468 587 472 598zM24 552 32 556 38 568zM405 593 424 606 416 608zM417 592 434 607 424 606zM430 594 444 612 434 607zM70 572 90 586 79 585zM55 583 73 595 63 596zM65 584 84 595 73 595zM406 618 420 621 427 633zM431 620 445 635 439 634zM63 596 76 606 65 607zM471 636 479 640 485 650zM490 639 503 639 505 655zM602 653 611 654 620 666zM65 607 82 619 71 622zM409 643 419 643 427 657zM409 643 427 657 414 657zM71 622 82 619 88 634zM427 657 437 660 444 669zM427 657 444 669 433 669zM467 660 483 674 478 675z'/><path fill='#828481' d='M481 -53 491 -54 499 -41zM480 -43 487 -41 493 -28zM474 -5 482 -3 488 8zM446 2 459 17 450 13zM566 16 579 17 582 28zM666 123 683 140 672 136zM668 174 682 178 685 191zM446 187 463 203 452 200zM364 192 378 206 368 207zM430 199 439 198 444 214zM347 202 355 206 361 218zM506 231 522 246 515 247zM294 223 308 235 296 235zM275 232 285 236 294 244zM362 242 379 254 369 256zM181 234 200 250 187 249zM581 278 596 293 584 288zM171 261 183 260 187 273zM171 261 187 273 181 272zM230 267 237 266 246 279zM382 280 400 295 389 292zM198 276 218 290 208 288zM214 276 220 279 228 292zM118 277 134 291 127 289zM151 280 167 297 155 297zM308 299 315 300 323 313zM56 285 77 300 63 298zM314 310 327 326 315 324zM356 317 370 328 363 328zM446 327 455 324 458 337zM232 313 247 330 235 328zM591 351 603 353 607 368zM183 320 195 337 184 334zM144 328 156 346 150 345zM184 334 195 337 202 349zM330 350 348 365 336 364zM672 384 688 399 675 400zM7 329 23 343 10 339zM249 355 261 369 252 366zM524 381 530 383 537 398zM188 358 196 361 207 376zM25 357 44 372 33 367zM268 379 281 380 288 396zM134 378 146 378 148 393zM462 412 471 413 480 429zM680 437 691 436 701 451zM9 379 15 379 22 391zM29 381 39 381 43 395zM119 390 131 405 125 403zM137 391 148 393 156 408zM192 395 205 399 209 410zM425 424 443 437 428 437zM515 431 529 444 519 442zM641 445 664 460 647 459zM103 399 109 401 117 414zM166 408 178 409 182 423zM30 403 45 421 34 418zM70 408 87 409 89 426zM96 414 114 426 99 425zM117 414 136 427 124 430zM182 423 198 434 191 436zM193 421 210 439 198 434zM45 421 55 422 65 435zM55 422 74 434 65 435zM169 433 179 434 182 447zM169 433 182 447 175 444zM179 434 196 447 182 447zM210 439 221 439 230 452zM232 440 246 442 248 455zM354 451 371 468 362 462zM19 427 37 445 26 440zM31 431 39 429 46 445zM51 430 65 435 70 448zM65 435 74 434 77 446zM175 444 182 447 187 459zM4 441 17 452 10 453zM332 475 351 487 339 488zM-27 449 -11 449 -7 461zM84 461 102 474 90 471zM118 465 133 476 122 476zM370 489 384 491 389 504zM370 489 389 504 376 501zM394 490 411 508 401 508zM426 497 437 499 443 510zM426 497 443 510 432 511zM-7 461 10 479 -0 478zM14 466 29 478 21 476zM36 466 54 483 40 479zM72 469 78 472 86 484zM102 474 114 476 119 490zM169 481 179 482 182 498zM364 501 384 515 374 517zM464 512 476 511 480 524zM182 498 200 509 193 506zM261 528 272 531 278 542zM27 516 36 516 45 529zM117 527 124 527 133 538zM414 555 428 573 417 569zM2 526 11 529 18 541zM267 551 272 556 278 568zM417 569 434 582 423 581zM474 574 484 576 488 588zM412 583 430 594 417 592zM608 638 621 652 611 654zM411 630 434 643 419 643zM459 636 471 636 474 649zM419 643 434 643 437 660zM445 646 451 649 461 660zM64 621 71 622 82 634zM414 657 427 657 433 669z'/><path fill='#838582' d='M484 -30 493 -28 499 -18zM583 131 601 141 591 144zM655 134 670 148 656 149zM683 140 700 151 689 154zM656 149 670 148 673 161zM440 149 447 153 454 163zM646 174 661 171 665 186zM162 257 171 261 181 272zM393 282 406 284 410 295zM144 270 158 267 162 285zM367 289 380 305 371 304zM131 277 141 278 145 293zM-2 290 8 293 18 304zM151 308 161 306 168 322zM583 349 600 366 587 366zM260 332 273 342 263 343zM276 330 289 331 293 345zM587 366 606 380 596 380zM163 332 172 334 182 344zM613 382 628 379 629 392zM349 378 365 379 368 392zM349 378 368 392 356 388zM148 370 158 368 166 384zM148 370 166 384 155 383zM172 370 184 370 187 385zM14 368 29 381 15 379zM76 374 88 372 95 388zM155 383 166 384 171 393zM107 388 125 403 109 401zM192 395 209 410 197 411zM216 401 229 402 235 413zM109 401 126 417 117 414zM131 405 146 404 150 416zM117 414 126 417 136 427zM139 418 150 416 157 433zM295 431 303 435 312 448zM392 443 401 445 409 455zM136 427 151 445 140 443zM7 426 19 427 26 440zM85 435 96 437 101 452zM283 455 293 460 302 472zM283 455 302 472 289 469zM4 441 14 438 17 452zM70 448 77 446 84 461zM225 464 235 461 238 477zM385 478 399 479 402 495zM484 489 503 503 492 501zM550 506 558 511 563 524zM14 466 23 467 29 478zM90 471 106 487 97 487zM453 513 464 512 470 524zM453 513 470 524 462 525zM496 518 513 529 501 527zM628 529 640 529 646 543zM29 478 49 492 35 492zM329 510 342 511 346 525zM112 502 128 514 120 513zM467 536 480 551 472 552zM449 547 470 563 457 560zM480 551 496 554 503 564zM414 555 424 559 428 573zM424 559 436 559 438 574zM436 559 444 559 450 574zM251 553 272 566 258 563zM428 573 446 582 434 582zM412 583 423 581 430 594zM64 570 79 585 65 584zM466 614 479 614 486 628zM65 607 76 606 82 619zM419 643 437 660 427 657zM434 643 445 646 447 661zM437 660 447 661 455 671z'/><path fill='#848683' d='M633 21 643 25 651 37zM505 181 518 184 523 196zM531 225 547 224 553 238zM391 233 409 244 396 248zM221 250 237 266 230 267zM206 261 217 265 220 279zM393 282 410 295 400 295zM137 266 144 270 151 280zM336 303 356 317 343 314zM623 354 639 371 629 368zM600 366 607 368 613 382zM163 332 182 344 168 345zM628 379 640 384 645 395zM355 367 374 377 365 379zM178 359 194 372 184 370zM96 360 112 378 102 374zM339 387 349 387 353 400zM21 366 39 381 29 381zM618 429 635 445 625 443zM630 431 641 445 635 445zM148 393 166 408 156 408zM160 394 171 393 178 409zM216 401 235 413 218 412zM76 400 96 414 87 409zM91 400 103 399 108 413zM190 407 197 411 203 422zM60 409 77 421 65 423zM96 414 108 413 114 426zM108 413 124 430 114 426zM126 417 139 418 144 430zM139 418 157 433 144 430zM34 418 51 430 39 429zM77 421 96 437 85 435zM114 426 126 439 116 439zM157 433 169 433 175 444zM-3 427 7 426 14 438zM85 435 101 452 92 449zM151 445 163 446 166 458zM95 459 106 463 114 476zM304 483 324 498 314 497zM133 476 152 490 142 492zM106 487 124 502 112 502zM470 524 490 539 475 539zM424 559 438 574 428 573zM470 563 481 563 484 576zM470 563 484 576 474 574zM468 587 482 599 472 598zM424 606 443 622 431 620zM434 607 454 623 443 622zM65 584 79 585 84 595zM63 596 73 595 76 606zM474 649 493 665 481 665z'/><path fill='#858784' d='M531 225 553 238 541 235zM162 257 181 272 168 269zM450 290 458 288 466 302zM137 266 151 280 141 278zM367 289 380 295 380 305zM380 295 389 292 393 306zM194 287 212 299 203 299zM361 301 371 304 377 316zM623 354 637 359 639 371zM566 363 576 365 580 376zM63 321 81 337 73 337zM524 381 537 398 527 395zM76 374 95 388 82 383zM176 384 192 395 183 397zM82 383 103 399 91 400zM130 392 137 391 146 404zM137 391 156 408 146 404zM229 402 238 404 241 414zM125 403 131 405 139 418zM125 403 139 418 126 417zM126 417 144 430 136 427zM77 421 89 426 96 437zM114 426 124 430 126 439zM136 427 144 430 151 445zM144 430 163 446 151 445zM175 444 187 459 181 459zM187 469 204 484 193 484zM437 499 447 498 453 513zM470 499 484 502 489 512zM353 500 364 501 374 517zM10 479 21 476 28 490zM106 487 119 490 124 502zM501 542 514 553 502 554zM30 504 52 520 36 516zM78 509 92 525 84 524zM59 521 72 520 74 532zM474 574 488 588 481 586zM434 607 444 612 454 623zM474 625 490 639 479 640z'/><path fill='#868885' d='M481 -53 499 -41 487 -41zM478 -18 495 -6 482 -3zM366 55 381 68 368 68zM611 121 628 131 621 132zM676 127 688 126 694 139zM610 205 630 218 615 219zM329 251 343 264 332 263zM196 259 214 276 198 276zM332 311 343 314 348 329zM183 320 190 322 195 337zM172 334 184 334 192 349zM51 335 58 331 63 345zM120 379 137 391 130 392zM146 378 160 394 148 393zM15 379 32 394 22 391zM60 409 70 408 77 421zM87 409 99 425 89 426zM65 423 85 435 74 434zM70 448 84 461 72 459zM148 481 160 481 162 492zM344 501 360 515 348 515zM-0 478 10 479 16 492zM21 476 29 478 35 492zM318 511 335 525 320 524zM28 490 42 506 30 504zM261 528 278 542 268 540zM437 545 457 560 444 559zM449 547 460 548 470 563zM64 621 82 634 70 629z'/><path fill='#878986' d='M480 -43 493 -28 484 -30zM666 123 676 127 683 140zM338 251 355 266 343 264zM349 252 358 253 362 267zM450 290 466 302 454 300zM353 303 365 315 356 317zM161 306 176 307 183 320zM190 322 200 322 206 337zM254 339 263 343 269 355zM613 382 629 392 621 391zM158 368 172 370 176 384zM148 393 160 394 166 408zM610 442 626 456 615 454zM190 407 203 422 193 421zM19 427 31 431 37 445zM96 437 110 453 101 452zM-16 463 -0 478 -14 476zM430 594 443 598 444 612zM431 620 443 622 445 635zM434 643 447 661 437 660z'/><path fill='#888a87' d='M239 339 259 354 249 355zM599 389 610 390 617 402zM158 368 176 384 166 384zM119 390 130 392 131 405zM76 400 91 400 96 414zM108 413 117 414 124 430zM126 439 140 443 147 453zM119 490 129 492 138 503z'/><path fill='#898b88' d='M266 332 285 343 273 342zM610 442 625 443 626 456zM77 446 92 449 95 459zM1 465 21 476 10 479zM-0 478 16 492 4 490zM-20 485 -4 488 -0 499z'/><path fill='#8a8c89' d='M-11 287 2 301 -4 304zM140 443 158 456 147 453zM-25 473 -14 476 -4 488z'/><path fill='#8b8d8a' d='M157 433 175 444 163 446zM140 443 151 445 158 456zM-14 476 4 490 -4 488z'/><path fill='#8c8e8b' d='M197 411 209 410 215 425zM126 439 147 453 136 451zM-14 476 -0 478 4 490z'/></svg>
<svg style='left:624px;top:318px' width='680' height='563' viewBox='0 0 680 563'><defs><linearGradient id='lc' x1='0' y1='0' x2='1' y2='0.3'><stop offset='0' stop-color='#3a3a3a'/><stop offset='1' stop-color='#8a8a8a'/></linearGradient><linearGradient id='rc' x1='1' y1='0' x2='0' y2='0.3'><stop offset='0' stop-color='#3a3a3a'/><stop offset='1' stop-color='#8a8a8a'/></linearGradient></defs><path d='M10.9 263.0 L10.6 261.8 L10.1 260.1 L9.5 258.1 L9.2 256.1 L9.3 254.3 L9.8 252.8 L10.6 251.3 L11.7 250.0 L12.9 248.8 L14.2 247.8 L15.0 247.4 L15.3 247.6 L16.0 247.9 L18.0 247.4 L21.8 245.6 L28.3 242.1 L36.7 237.4 L46.3 231.9 L56.2 226.3 L65.5 221.0 L74.1 216.2 L82.7 211.4 L91.3 206.6 L100.1 201.6 L109.1 196.5 L118.9 190.8 L129.3 184.8 L139.7 178.8 L149.6 173.1 L158.3 168.1 L165.6 163.9 L171.9 160.2 L177.6 157.0 L182.9 154.2 L188.3 151.7 L193.7 149.7 L198.9 148.1 L203.9 146.9 L208.5 146.0 L212.8 145.2 L216.5 144.7 L219.4 144.6 L222.3 144.7 L225.4 144.6 L229.2 144.1 L233.7 143.1 L238.7 142.0 L244.1 140.5 L250.0 138.7 L256.5 136.4 L263.7 133.6 L271.7 130.3 L280.1 126.6 L288.7 122.8 L297.4 119.0 L306.8 114.9 L316.9 110.5 L326.9 106.1 L335.8 102.3 L342.7 99.3 L347.1 97.5 L349.6 96.4 L350.9 95.9 L352.0 95.7 L353.6 95.5 L355.9 95.4 L358.2 95.5 L360.5 95.9 L362.6 96.4 L364.5 97.1 L366.3 98.2 L368.0 99.7 L369.5 101.3 L370.7 102.7 L371.6 103.7 L442.0 155.5 L480.2 185.5 L540.3 215.6 L616.7 256.5 L621.9 258.9 L629.6 262.3 L638.1 266.2 L646.2 269.9 L652.2 272.9 L655.8 274.9 L658.1 276.5 L659.5 277.8 L660.4 279.0 L661.4 280.5 L662.4 282.2 L663.2 283.9 L663.6 285.7 L663.8 287.5 L663.6 289.2 L663.1 291.0 L662.3 292.7 L661.1 294.4 L659.8 296.0 L658.2 297.4 L656.1 298.8 L653.5 300.1 L650.7 301.2 L648.3 302.2 L646.7 302.9 L642.0 304.0 L635.5 305.4 L627.7 307.2 L619.4 309.4 L611.2 312.2 L602.8 315.7 L593.6 319.9 L584.2 324.4 L575.4 328.9 L567.6 332.9 L561.1 336.3 L555.7 339.5 L550.8 342.4 L545.8 345.3 L540.3 348.2 L534.0 351.2 L527.3 354.2 L520.5 357.2 L513.8 360.0 L507.5 362.4 L501.8 364.4 L496.5 366.0 L491.3 367.5 L486.0 368.8 L480.2 370.0 L473.9 371.2 L467.0 372.2 L460.1 373.2 L453.4 374.1 L447.5 374.9 L442.6 375.5 L438.5 376.0 L434.7 376.4 L430.6 377.0 L425.7 378.2 L420.0 379.8 L413.9 381.8 L407.3 384.1 L400.3 386.7 L392.9 389.7 L384.9 393.1 L376.1 397.1 L367.1 401.3 L358.0 405.4 L349.3 409.3 L340.3 413.0 L330.7 416.9 L321.6 420.5 L313.9 423.5 L308.3 425.7 L201.9 371.1 L185.5 362.9 L128.2 330.2 L101.0 319.3 L49.1 286.5Z' fill='#797a77'/><path d='M10.9 262.0 L13.6 249.9 L21.8 245.6 L49.1 286.5Z' fill='url(#lc)'/><path d='M618.3 257.6 L652.2 272.9 L663.1 283.8 L660.3 294.7 L646.7 302.9Z' fill='url(#rc)'/><path d='M343.8 98.2 L361.3 96.0 L372.2 103.7 L442.0 155.5 L480.2 185.5 L439.3 162.6 L357.5 121.2Z' fill='#969695'/><path d='M618.3 257.6 L646.7 302.9 L600.3 316.5 L545.7 349.3 L480.2 371.1 L431.1 376.6 L371.1 398.4 L308.3 425.7Z' fill='#7e7f7c'/><path d='M128.2 330.2 L442.0 158.3' stroke='#4a4a4a' stroke-width='4.2' fill='none'/><path d='M201.9 371.1 L403.8 260.9 L428.4 271.2 L534.8 214.5' stroke='#4e4e4e' stroke-width='3' fill='none'/><path d='M10.9 263.0 L10.6 261.8 L10.1 260.1 L9.5 258.1 L9.2 256.1 L9.3 254.3 L9.8 252.8 L10.6 251.3 L11.7 250.0 L12.9 248.8 L14.2 247.8 L15.0 247.4 L15.3 247.6 L16.0 247.9 L18.0 247.4 L21.8 245.6 L28.3 242.1 L36.7 237.4 L46.3 231.9 L56.2 226.3 L65.5 221.0 L74.1 216.2 L82.7 211.4 L91.3 206.6 L100.1 201.6 L109.1 196.5 L118.9 190.8 L129.3 184.8 L139.7 178.8 L149.6 173.1 L158.3 168.1 L165.6 163.9 L171.9 160.2 L177.6 157.0 L182.9 154.2 L188.3 151.7 L193.7 149.7 L198.9 148.1 L203.9 146.9 L208.5 146.0 L212.8 145.2 L216.5 144.7 L219.4 144.6 L222.3 144.7 L225.4 144.6 L229.2 144.1 L233.7 143.1 L238.7 142.0 L244.1 140.5 L250.0 138.7 L256.5 136.4 L263.7 133.6 L271.7 130.3 L280.1 126.6 L288.7 122.8 L297.4 119.0 L306.8 114.9 L316.9 110.5 L326.9 106.1 L335.8 102.3 L342.7 99.3 L347.1 97.5 L349.6 96.4 L350.9 95.9 L352.0 95.7 L353.6 95.5 L355.9 95.4 L358.2 95.5 L360.5 95.9 L362.6 96.4 L364.5 97.1 L366.3 98.2 L368.0 99.7 L369.5 101.3 L370.7 102.7 L371.6 103.7 L442.0 155.5 L480.2 185.5 L540.3 215.6 L616.7 256.5 L621.9 258.9 L629.6 262.3 L638.1 266.2 L646.2 269.9 L652.2 272.9 L655.8 274.9 L658.1 276.5 L659.5 277.8 L660.4 279.0 L661.4 280.5 L662.4 282.2 L663.2 283.9 L663.6 285.7 L663.8 287.5 L663.6 289.2 L663.1 291.0 L662.3 292.7 L661.1 294.4 L659.8 296.0 L658.2 297.4 L656.1 298.8 L653.5 300.1 L650.7 301.2 L648.3 302.2 L646.7 302.9 L642.0 304.0 L635.5 305.4 L627.7 307.2 L619.4 309.4 L611.2 312.2 L602.8 315.7 L593.6 319.9 L584.2 324.4 L575.4 328.9 L567.6 332.9 L561.1 336.3 L555.7 339.5 L550.8 342.4 L545.8 345.3 L540.3 348.2 L534.0 351.2 L527.3 354.2 L520.5 357.2 L513.8 360.0 L507.5 362.4 L501.8 364.4 L496.5 366.0 L491.3 367.5 L486.0 368.8 L480.2 370.0 L473.9 371.2 L467.0 372.2 L460.1 373.2 L453.4 374.1 L447.5 374.9 L442.6 375.5 L438.5 376.0 L434.7 376.4 L430.6 377.0 L425.7 378.2 L420.0 379.8 L413.9 381.8 L407.3 384.1 L400.3 386.7 L392.9 389.7 L384.9 393.1 L376.1 397.1 L367.1 401.3 L358.0 405.4 L349.3 409.3 L340.3 413.0 L330.7 416.9 L321.6 420.5 L313.9 423.5 L308.3 425.7 L201.9 371.1 L185.5 362.9 L128.2 330.2 L101.0 319.3 L49.1 286.5Z' fill='none' stroke='#fff' stroke-width='1.1'/><path d='M49.1 286.5 L357.5 121.2 L372.2 103.7 M357.5 121.2 L439.3 162.6 L537.5 214.5 L618.3 257.6 L646.7 302.9 M618.3 257.6 L308.3 424.6 M21.8 245.6 L49.1 286.5' fill='none' stroke='#f4f4f4' stroke-width='1'/><path d='M101.0 319.3 L128.2 330.2 L131.0 334.0 L439.3 159.4 L444.8 155.5 M185.5 362.9 L201.9 371.1 L203.0 375.5 L403.8 264.1 L428.4 274.5 L540.3 216.1' fill='none' stroke='#eaeaea' stroke-width='0.9'/><ellipse cx='621' cy='89' rx='44' ry='23' fill='#6e6f6c' opacity='0.6'/><ellipse cx='621' cy='89' rx='48' ry='27' fill='none' stroke='#8e8f8d' stroke-width='9' opacity='0.95'/><polygon points='591.8,47.6 625.4,38.6 635.6,50.8 597.7,61.5' fill='#c6c7c5'/><polygon points='597.7,61.5 635.6,50.8 641.5,85.0 606.2,95.2' fill='#cdcecc'/><polygon points='591.8,47.6 597.7,61.5 606.2,95.2 600.5,86.0' fill='#b5b6b4'/><polyline points='591.8,47.6 597.7,61.5 635.6,50.8 M' fill='none' stroke='#707070' stroke-width='0.7'/><text x='620.5999999999999' y='78' text-anchor='middle' font-family='Liberation Sans' font-size='7.5' fill='#5a5c60' transform='rotate(-15 620.5999999999999 76)'>DERECHA</text><text x='662.8' y='74.0' text-anchor='middle' font-family='Liberation Sans' font-size='8.5' font-weight='bold' fill='#e4e4e4' transform='rotate(-30 662.8 71.0)'>N</text><text x='573.6' y='101.0' text-anchor='middle' font-family='Liberation Sans' font-size='8.5' font-weight='bold' fill='#e4e4e4' transform='rotate(40 573.6 98.0)'>S</text><text x='633.0' y='113.0' text-anchor='middle' font-family='Liberation Sans' font-size='8.5' font-weight='bold' fill='#e4e4e4' transform='rotate(-75 633.0 110.0)'>E</text><path d='M0 562H680' stroke='#000' stroke-width='2' stroke-dasharray='20 13' fill='none'/><path d='M679 0V563' stroke='#000' stroke-width='2' stroke-dasharray='5 2' fill='none'/><path d='M0 0.5H680 M0.5 0V563' stroke='#8a8a8a' stroke-width='1' fill='none'/></svg>
<div class='a' style='left:625px;top:880px;width:681px;height:1px;background:#fff'></div><div class='a' style='left:1304px;top:318px;width:1px;height:563px;background:#fff'></div>
</body></html>
